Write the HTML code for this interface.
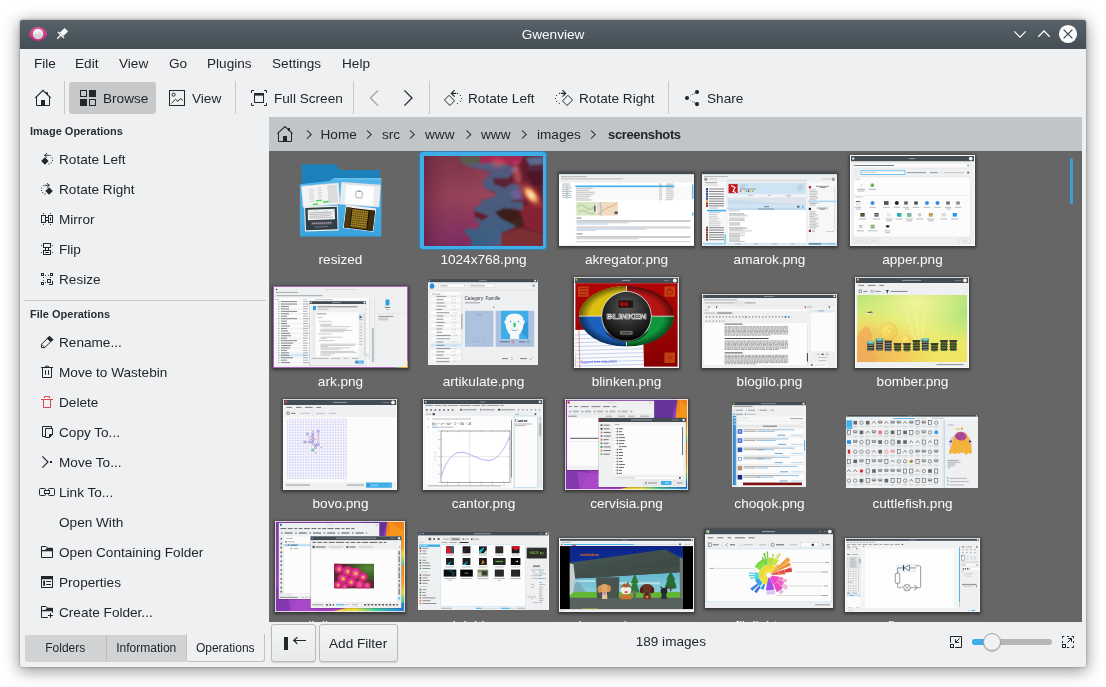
<!DOCTYPE html>
<html>
<head>
<meta charset="utf-8">
<title>Gwenview</title>
<style>
*{box-sizing:border-box;margin:0;padding:0}
html,body{width:1106px;height:687px;overflow:hidden;background:#fff}
body{position:relative;font-family:"Liberation Sans","DejaVu Sans",sans-serif;font-size:13.6px;color:#232629}
.abs{position:absolute}
#win{position:absolute;left:20px;top:20px;width:1066px;height:647px;background:#eff0f1;border-radius:2px;box-shadow:0 3px 16px 1px rgba(0,0,0,.42),0 0 3px rgba(0,0,0,.35)}
#title{position:absolute;left:20px;top:20px;width:1066px;height:28.5px;background:linear-gradient(#566169,#454e55);border-radius:2px 2px 0 0;color:#fcfcfc;text-align:center;line-height:30px}
.t{position:absolute;white-space:nowrap;line-height:16px;height:16px}
.menu .t{top:56px}
.tb .t{top:91px}
.sep{position:absolute;width:1px;background:#c6c8ca;top:81px;height:33px}
#browse{position:absolute;left:69px;top:82px;width:87px;height:32px;border-radius:3px;background:#c6c8ca}
.side .t{left:59px}
.side .hd{font-weight:bold;font-size:11px;left:30px;color:#2b2f33}
#crumb{position:absolute;left:269px;top:117px;width:813px;height:34px;background:#c2c5c8}
#crumb .t{top:10px}
#view{position:absolute;left:269px;top:151px;width:813px;height:470.5px;background:#666;overflow:hidden;color:#fcfcfc}
#view .lb{position:absolute;width:143px;text-align:center;line-height:16px;height:16px;white-space:nowrap}
.btn{position:absolute;top:623.5px;height:38px;border:1px solid #b8babc;border-radius:3px;background:linear-gradient(#f4f5f5,#e8e9ea);box-shadow:0 1px 1px rgba(0,0,0,.13)}
.tab{position:absolute;top:635px;height:27px;text-align:center;line-height:27px;font-size:12px}
.th{position:absolute;overflow:hidden;box-shadow:0 1px 3px 1px rgba(0,0,0,.5)}
.th.ns{box-shadow:none}
#ico{position:absolute;left:0;top:0;width:1106px;height:687px;pointer-events:none}
</style>
</head>
<body>
<div id="all" style="position:absolute;left:0;top:0;width:1106px;height:687px;will-change:transform">
<div id="win"></div>
<div id="title">Gwenview</div>

<div class="menu">
 <div class="t" style="left:34px">File</div>
 <div class="t" style="left:75px">Edit</div>
 <div class="t" style="left:119px">View</div>
 <div class="t" style="left:169px">Go</div>
 <div class="t" style="left:207px">Plugins</div>
 <div class="t" style="left:272px">Settings</div>
 <div class="t" style="left:342px">Help</div>
</div>

<div class="tb">
 <div class="sep" style="left:64px"></div>
 <div id="browse"></div>
 <div class="t" style="left:103px">Browse</div>
 <div class="t" style="left:192px">View</div>
 <div class="sep" style="left:235px"></div>
 <div class="t" style="left:274px">Full Screen</div>
 <div class="sep" style="left:353px"></div>
 <div class="sep" style="left:429px"></div>
 <div class="t" style="left:468px">Rotate Left</div>
 <div class="t" style="left:579px">Rotate Right</div>
 <div class="sep" style="left:668px"></div>
 <div class="t" style="left:707px">Share</div>
</div>

<div class="side">
 <div class="t hd" style="top:123px">Image Operations</div>
 <div class="t" style="top:152px">Rotate Left</div>
 <div class="t" style="top:182px">Rotate Right</div>
 <div class="t" style="top:212px">Mirror</div>
 <div class="t" style="top:242px">Flip</div>
 <div class="t" style="top:272px">Resize</div>
 <div class="abs" style="left:24px;top:300px;width:242px;height:1px;background:#c6c8ca"></div>
 <div class="t hd" style="top:306px">File Operations</div>
 <div class="t" style="top:335px">Rename...</div>
 <div class="t" style="top:365px">Move to Wastebin</div>
 <div class="t" style="top:395px">Delete</div>
 <div class="t" style="top:425px">Copy To...</div>
 <div class="t" style="top:455px">Move To...</div>
 <div class="t" style="top:485px">Link To...</div>
 <div class="t" style="top:515px">Open With</div>
 <div class="t" style="top:545px">Open Containing Folder</div>
 <div class="t" style="top:575px">Properties</div>
 <div class="t" style="top:605px">Create Folder...</div>
 <div class="tab" style="left:25px;width:80.5px;background:#d0d2d4;border-radius:0 0 0 3px">Folders</div>
 <div class="tab" style="left:105.5px;width:80.5px;background:#d0d2d4;border-left:1px solid #babcbe">Information</div>
 <div class="tab" style="left:185.5px;top:633.5px;height:28.5px;line-height:29px;width:79.5px;border:1px solid #c0c2c4;border-top:0;border-radius:0 0 3px 3px">Operations</div>
</div>

<div id="crumb">
 <div class="t" style="left:51.5px">Home</div>
 <div class="t" style="left:113px">src</div>
 <div class="t" style="left:156px">www</div>
 <div class="t" style="left:212px">www</div>
 <div class="t" style="left:268px">images</div>
 <div class="t" style="left:339px;font-weight:bold;font-size:13px;letter-spacing:-.35px">screenshots</div>
</div>

<div id="view">
 <svg class="th ns" style="left:28px;top:10px;width:88px;height:80px;background:none;" viewBox="297 161 88 80" preserveAspectRatio="none"><defs><linearGradient id="fb" x1="0" y1="0" x2="0" y2="1"><stop offset="0" stop-color="#1d83bd"/><stop offset="1" stop-color="#1577b0"/></linearGradient><linearGradient id="ff" x1="0" y1="0" x2="0" y2="1"><stop offset="0" stop-color="#52b4ea"/><stop offset="1" stop-color="#3ba3dc"/></linearGradient></defs><path d="M301.5,164.3 H335.4 L340,170 H379.8 V236.5 H301.5Z" fill="url(#fb)"/><path d="M299.9,184.2 L329,181 L333.5,178.3 H381.4 V236.5 H299.9Z" fill="url(#ff)"/><path d="M333.5,178.7 H381.4" stroke="#86cdf4" stroke-width=".8"/><g transform="rotate(-5 320.7 195)"><rect x="302.2" y="184.6" width="37" height="21" fill="#f4f4f4" stroke="#d8dadc" stroke-width=".6"/><rect x="328" y="186" width="9.5" height="18" fill="#dcdcdc"/><path d="M309,189 h5 M309,191.3 h5 M309,193.6 h5 M309,195.9 h5 M309,198.2 h5 M309,200.5 h5" stroke="#b5b8ba" stroke-width="0.6" fill="none"/><path d="M318,188 h4 M318,190.3 h4 M318,192.6 h4 M318,194.9 h4 M318,197.2 h4" stroke="#b5b8ba" stroke-width="0.6" fill="none"/><rect x="315.5" y="199.5" width="6" height="1.6" fill="#4ddc55"/><rect x="322.5" y="201.5" width="5.5" height="1.6" fill="#4ddc55"/><rect x="312" y="203" width="5.5" height="1.6" fill="#4ddc55"/></g><g transform="rotate(4 360.3 194.6)"><rect x="340.8" y="183.6" width="39" height="22" fill="#fdfdfd" stroke="#d0d3d6" stroke-width=".6"/><rect x="341.1" y="184" width="38.4" height="1.6" fill="#dfe1e3"/><rect x="341.1" y="186" width="4.5" height="19" fill="#e4ecf3"/><rect x="373.5" y="186" width="6" height="19" fill="#ebeced"/><rect x="355.8" y="191.5" width="6.4" height="6.4" rx="1" fill="none" stroke="#8d9194" stroke-width=".7"/><rect x="357.6" y="190.6" width="2.6" height="1.2" fill="#5c9fd6"/></g><g transform="rotate(-2 321.4 218.6)"><rect x="304.6" y="206.2" width="33.6" height="24.8" fill="#f2f2f2"/><rect x="305.6" y="207.4" width="31.6" height="22.4" fill="#2f3d44"/><rect x="308" y="209.2" width="27" height="10.6" fill="#f1f1f1"/><path d="M309.5,212.5 h22.4456 M309.5,214.2 h23.2759 M309.5,215.9 h20.8755 M309.5,217.6 h23.6523" stroke="#9a9a9a" stroke-width="0.6" fill="none"/><rect x="309" y="209.8" width="7" height="2" fill="#fff" stroke="#999" stroke-width=".3"/><rect x="318" y="209.8" width="7" height="2" fill="#fff" stroke="#999" stroke-width=".3"/><rect x="327" y="209.8" width="7" height="2" fill="#fff" stroke="#999" stroke-width=".3"/><rect x="311" y="221.5" width="21" height="3.4" fill="#5a5560"/><path d="M312,223.2 h19" stroke="#b9a8c8" stroke-width="1.2" stroke-dasharray="1.2 .8"/><rect x="314" y="226.3" width="14" height="1" fill="#778"/></g><g transform="rotate(7 359.5 218.3)"><rect x="344.4" y="206.6" width="30.4" height="23.4" fill="#f0f0f0"/><rect x="345.2" y="208.8" width="28.8" height="20.4" fill="#0d0a04"/><rect x="345.2" y="208.8" width="5.5" height="20.4" fill="#4a3a10"/><rect x="368.5" y="208.8" width="5.5" height="20.4" fill="#3a2c0c"/><rect x="351.5" y="209.6" width="16" height="18.8" fill="#6b5414"/><path d="M351.5,211 h16 M351.5,213.2 h16 M351.5,215.4 h16 M351.5,217.6 h16 M351.5,219.8 h16 M351.5,222 h16 M351.5,224.2 h16 M351.5,226.4 h16" stroke="#c9a030" stroke-width=".9" stroke-dasharray="1.4 .7"/></g></svg>
<svg class="abs" style="left:149px;top:-1px;width:130px;height:101px" viewBox="418 150 130 101"><rect x="419.5" y="151.5" width="127" height="98" rx="3.6" fill="#3daee9" stroke="#2d80ad" stroke-width=".9"/></svg>
<svg class="abs" style="left:154.5px;top:4.5px;width:119px;height:90px" viewBox="0 0 119 90"><defs><linearGradient id="w1" x1="0" y1="0" x2="0" y2="1"><stop offset="0" stop-color="#7a3346"/><stop offset=".45" stop-color="#954159"/><stop offset="1" stop-color="#7b2a63"/></linearGradient><linearGradient id="w2" x1="0" y1="0" x2="1" y2="0"><stop offset="0" stop-color="#5a1c38" stop-opacity=".55"/><stop offset=".3" stop-color="#a24a5c" stop-opacity=".0"/><stop offset=".5" stop-color="#a8505c" stop-opacity=".25"/><stop offset="1" stop-color="#a8505c" stop-opacity="0"/></linearGradient><linearGradient id="w4" x1="0" y1="0" x2="0" y2="1"><stop offset="0" stop-color="#505a7e"/><stop offset=".6" stop-color="#495c7e"/><stop offset="1" stop-color="#346184"/></linearGradient><radialGradient id="w3" cx="0" cy="0" r="1" gradientUnits="userSpaceOnUse" gradientTransform="translate(107 39) rotate(50) scale(19 10)"><stop offset="0" stop-color="#ffedc4"/><stop offset=".3" stop-color="#f4ac6c"/><stop offset=".65" stop-color="#b43c3c" stop-opacity=".6"/><stop offset="1" stop-color="#8a2838" stop-opacity="0"/></radialGradient><filter id="bl1" x="-10%" y="-10%" width="120%" height="120%"><feGaussianBlur stdDeviation=".8"/></filter><filter id="bl2" x="-30%" y="-30%" width="160%" height="160%"><feGaussianBlur stdDeviation="2.2"/></filter></defs><rect x="0" y="0" width="119" height="90" fill="url(#w1)" /><rect x="0" y="0" width="119" height="90" fill="url(#w2)" /><g filter="url(#bl1)"><path d="M34,0 L57,0 H119 V90 H47 L48,85 L45,80 L40,76 L41,73 L52,73 L57,69 L51,63 L50,52 L57,48 L58,44 L68,42 L73,38 L61,33 L58,25 L63,23 L66,15 L55,13 L44,10 L37,7Z" fill="#621c2c"/><path d="M34,0 L56,0 L57,8 L44,10 L37,7Z" fill="#5c5a4c"/><path d="M56,0 L100,0 L96,8 L84,9 L70,6 L57,8Z" fill="#a62852"/><path d="M100,0 H119 V22 L104,14 Z" fill="#56263c"/><path d="M102,2 L119,1 V8 L106,9Z" fill="#5a6a8c"/><path d="M96,50 L119,46 V78 L100,70 Z" fill="#842430"/><path d="M77,78 L96,72 L119,78 V90 H77Z" fill="#7c2f35"/><path d="M44,10 L55,13 L66,15 L82,13 L89,17 L82,24 L90,28 L98,30 L99,40 L86,46 L99,46 L98,54 L86,52 L76,58 L88,60 L99,62 L98,68 L89,72 L77,77 L77,90 L47,90 L48,85 L45,80 L40,76 L41,73 L52,73 L57,69 L51,63 L52,61 L58,65 L65,60 L58,57 L51,55 L50,52 L57,48 L58,44 L68,42 L73,38 L71,36 L61,33 L58,25 L63,23 L66,15Z" fill="url(#w4)"/><path d="M42,8 L57,8 L70,6 L84,9 L94,13 L89,17 L82,13 L66,15 L55,13 L44,10Z" fill="#525c80"/><path d="M69,22 L82,22 L88,28 L80,32 L70,28Z" fill="#5a2034"/><path d="M86,36 L98,32 L100,44 L90,44Z" fill="#7460a0" opacity=".7"/><path d="M71,56 L80,52 L94,55 L98,62 L92,70 L84,66 L76,62Z" fill="#3a1a18"/><path d="M88,64 L98,60 L100,68 L96,72 L90,70Z" fill="#42201c"/><path d="M60,74 L74,72 L77,80 L77,90 L66,90Z" fill="#416084"/><path d="M102,16 L119,14 V30 L110,30Z" fill="#4e1826"/></g><ellipse cx="93" cy="18" rx="3.5" ry="12" fill="#f07078" opacity=".6" filter="url(#bl2)" transform="rotate(-10 93 18)"/><ellipse cx="74" cy="7" rx="7" ry="4" fill="#e85a60" opacity=".55" filter="url(#bl2)"/><circle cx="107" cy="39" r="21" fill="url(#w3)"/></svg>
<svg class="th" style="left:290px;top:20.5px;width:135px;height:74.5px;background:#fcfcfc;" viewBox="559 171.5 135 74.5" preserveAspectRatio="none"><rect x="559" y="171.5" width="135" height="2.4" fill="#434c53" /><rect x="559" y="173.9" width="135" height="8.4" fill="#eff0f1" /><path d="M561,176.2 h26" stroke="#777" stroke-width="0.5" fill="none"/><path d="M561,178.4 h62" stroke="#999" stroke-width="0.6" fill="none"/><rect x="559.6" y="182.3" width="15" height="62" fill="#fff" /><path d="M562,183.5 h7.85647 M562,185.4 h8.53724 M562,187.3 h9.768 M562,189.2 h7.97026 M562,191.1 h9.85002 M562,193 h8.26542 M562,194.9 h9.72058 M562,196.8 h9.63715" stroke="#8a8d90" stroke-width="0.6" fill="none"/><path d="M567,186 v12" stroke="#3daee9" stroke-width=".8" stroke-dasharray=".8 1.1"/><rect x="575.4" y="182.3" width="117" height="19" fill="#fff" /><rect x="575.4" y="185" width="99" height="1.7" fill="#3daee9" /><path d="M576,187.8 h16.6038 M576,189.75 h13.3852 M576,191.7 h19.0096 M576,193.65 h18.2141 M576,195.6 h14.9805 M576,197.55 h12.4183 M576,199.5 h15.3832" stroke="#7e8184" stroke-width="0.55" fill="none"/><path d="M659,183.6 h3 M659,185.55 h3 M659,187.5 h3 M659,189.45 h3 M659,191.4 h3 M659,193.35 h3 M659,195.3 h3 M659,197.25 h3 M659,199.2 h3" stroke="#7e8184" stroke-width="0.55" fill="none"/><path d="M666,183.6 h7.36531 M666,185.55 h6.43799 M666,187.5 h7.92547 M666,189.45 h6.62645 M666,191.4 h7.53663 M666,193.35 h7.76919 M666,195.3 h7.81153 M666,197.25 h7.50643 M666,199.2 h6.6942" stroke="#7e8184" stroke-width="0.55" fill="none"/><path d="M575.4,186.8 h117 M575.4,188.75 h117 M575.4,190.7 h117 M575.4,192.65 h117 M575.4,194.6 h117 M575.4,196.55 h117 M575.4,198.5 h117" stroke="#e3e5e7" stroke-width="0.4" fill="none"/><rect x="575.4" y="201.3" width="117" height="43" fill="#fff" /><rect x="576.2" y="201.5" width="20.3" height="13.6" fill="#d9e6c4" /><rect x="596.8" y="201.5" width="21" height="13.6" fill="#f1dcc0" /><path d="M577,206 q5,-3 9,1 t9,-1 M578,211 q6,-2 10,1 t7,0" stroke="#b6cf9a" stroke-width="1.2" fill="none"/><path d="M598,214 q6,-6 10,-7 t9,-4" stroke="#e09a80" stroke-width=".8" fill="none"/><path d="M600,202 q2,6 1,13" stroke="#a9c6e4" stroke-width="1.6" fill="none"/><rect x="614.5" y="211" width="3.2" height="2.6" fill="#555" /><rect x="594" y="205" width="1.6" height="6" fill="#667" /><path d="M576.5,217.6 h5" stroke="#555" stroke-width="0.7" fill="none"/><path d="M576.5,220 h114 M576.5,221.1 h114" stroke="#9fa2a5" stroke-width="0.55" fill="none"/><path d="M576.5,222.3 h52" stroke="#9fa2a5" stroke-width="0.55" fill="none"/><path d="M576.5,223.6 h32" stroke="#7db8e4" stroke-width="0.55" fill="none"/><path d="M576.5,226.4 h114 M576.5,227.5 h114" stroke="#9fa2a5" stroke-width="0.55" fill="none"/><path d="M576.5,228.7 h70" stroke="#8fb4d8" stroke-width="0.55" fill="none"/><path d="M576.5,229.9 h20" stroke="#b0b3b6" stroke-width="0.55" fill="none"/><path d="M576.5,233.4 h6" stroke="#555" stroke-width="0.7" fill="none"/><path d="M576.5,236 h114 M576.5,237.1 h114" stroke="#9fa2a5" stroke-width="0.55" fill="none"/><path d="M576.5,238.3 h62" stroke="#9fa2a5" stroke-width="0.55" fill="none"/><path d="M576.5,241.2 h114" stroke="#98a9bd" stroke-width="0.55" fill="none"/><rect x="692.2" y="184" width="1.2" height="14.5" fill="#3daee9" /><rect x="692.2" y="212" width="1.2" height="3.2" fill="#3daee9" /><rect x="559" y="244.3" width="135" height="1.7" fill="#eff0f1" /></svg>
<svg class="th" style="left:433px;top:20.5px;width:135px;height:74.5px;background:#fcfcfc;" viewBox="702 171.5 135 74.5" preserveAspectRatio="none"><rect x="702" y="171.5" width="135" height="2.4" fill="#434c53" /><rect x="702" y="173.9" width="135" height="72" fill="#eff0f1" /><circle cx="705.8" cy="178.8" r="1.7" fill="#9a9da0"/><circle cx="833.2" cy="178.8" r="1.7" fill="#9a9da0"/><path d="M704,176 h24" stroke="#888" stroke-width="0.5" fill="none"/><path d="M709,178.4 h8" stroke="#aaa" stroke-width="0.5" fill="none"/><path d="M822,178.4 h8" stroke="#aaa" stroke-width="0.5" fill="none"/><rect x="727" y="179.4" width="80" height="0.9" fill="#cfd2d5" /><rect x="703" y="181" width="23" height="62.5" fill="#f8f8f8" /><path d="M705,182.2 h12" stroke="#666" stroke-width="0.6" fill="none"/><path d="M704.5,184.6 h14" stroke="#aaa" stroke-width="0.5" fill="none"/><rect x="706" y="187.5" width="2" height="2" fill="#2a3f8f" /><path d="M709,188.5 h15" stroke="#555" stroke-width="0.7" fill="none"/><rect x="706" y="190" width="2" height="2" fill="#27408b" /><path d="M709,191 h15" stroke="#555" stroke-width="0.7" fill="none"/><rect x="706" y="192.5" width="2" height="2" fill="#31518f" /><path d="M709,193.5 h15" stroke="#555" stroke-width="0.7" fill="none"/><rect x="706" y="195" width="2" height="2" fill="#2a3f8f" /><path d="M709,196 h15" stroke="#555" stroke-width="0.7" fill="none"/><rect x="706" y="197.3" width="2" height="2" fill="#3a4fa0" /><path d="M709,198.3 h15" stroke="#555" stroke-width="0.7" fill="none"/><rect x="706" y="199.7" width="2" height="2" fill="#e39b2d" /><path d="M709,200.7 h15" stroke="#555" stroke-width="0.7" fill="none"/><rect x="706" y="202.1" width="2" height="2" fill="#8f2a2a" /><path d="M709,203.1 h15" stroke="#555" stroke-width="0.7" fill="none"/><rect x="706" y="204.4" width="2" height="2" fill="#9b2d2d" /><path d="M709,205.4 h15" stroke="#555" stroke-width="0.7" fill="none"/><rect x="707" y="209.3" width="19" height="1.6" fill="#3daee9" /><path d="M710,207.6 h8" stroke="#888" stroke-width="0.5" fill="none"/><path d="M709,212.2 h10.9156 M709,214.05 h8.5104 M709,215.9 h8.16652 M709,217.75 h9.76561 M709,219.6 h8.71353 M709,221.45 h11.6233 M709,223.3 h11.6424 M709,225.15 h10.7642" stroke="#a2a5a8" stroke-width="0.5" fill="none"/><rect x="706" y="226.2" width="2" height="2" fill="#8f3a3a" /><path d="M709,227.2 h15" stroke="#555" stroke-width="0.7" fill="none"/><rect x="706" y="228.6" width="2" height="2" fill="#7a3030" /><path d="M709,229.6 h15" stroke="#555" stroke-width="0.7" fill="none"/><rect x="706" y="231" width="2" height="2" fill="#8a4a3a" /><path d="M709,232 h15" stroke="#555" stroke-width="0.7" fill="none"/><rect x="706" y="233.4" width="2" height="2" fill="#6a3a3a" /><path d="M709,234.4 h15" stroke="#555" stroke-width="0.7" fill="none"/><rect x="706" y="235.8" width="2" height="2" fill="#8a3030" /><path d="M709,236.8 h15" stroke="#555" stroke-width="0.7" fill="none"/><rect x="706" y="238.2" width="2" height="2" fill="#553a3a" /><path d="M709,239.2 h15" stroke="#555" stroke-width="0.7" fill="none"/><rect x="724.6" y="234" width="1" height="8.5" fill="#3daee9" /><rect x="703" y="242.3" width="23" height="1.9" fill="#9fd3f2" /><rect x="727" y="181" width="80" height="1.2" fill="#e6e8ea" /><rect x="727.6" y="182.4" width="78.4" height="11.4" fill="#cfe4f2" /><rect x="728.6" y="183.6" width="9" height="9" fill="#c4161c" /><path d="M731,185 l4,2 l-2,4 l3,1" stroke="#fff" stroke-width="1.1" fill="none"/><path d="M740,184.8 h8" stroke="#8aa" stroke-width="0.5" fill="none"/><path d="M740,186.7 h5" stroke="#99b" stroke-width="0.5" fill="none"/><path d="M740,188.6 h16" stroke="#667" stroke-width="0.6" fill="none"/><rect x="740" y="190" width="1.3" height="1.3" fill="#d33" /><rect x="742" y="190" width="1.3" height="1.3" fill="#eee" /><rect x="744" y="190" width="1.3" height="1.3" fill="#fc3" /><rect x="746" y="190" width="1.3" height="1.3" fill="#39d" /><rect x="748" y="190" width="1.3" height="1.3" fill="#333" /><rect x="750" y="190" width="1.3" height="1.3" fill="#fc3" /><rect x="752" y="190" width="1.3" height="1.3" fill="#6b4" /><path d="M797,186 l4,-3 l3,2 l-2,5 l-5,1z" fill="#bcd6e8"/><rect x="727.6" y="193.8" width="78.4" height="3.2" fill="#eef4f9" /><path d="M748,194.8 h5" stroke="#888" stroke-width="0.5" fill="none"/><path d="M768,194.8 h3" stroke="#888" stroke-width="0.5" fill="none"/><path d="M786,194.8 h5" stroke="#888" stroke-width="0.5" fill="none"/><path d="M787,196.4 h4" stroke="#9ab" stroke-width="0.5" fill="none"/><rect x="727.6" y="197" width="78.4" height="7.8" fill="#dde3e8" /><path d="M728,204.8 L728,198 L731,200 L734,198.6 L737,200.2 L741,198.8 L745,200.6 L750,199.4 L756,201 L760,200 L764,202.4 L770,201.8 L776,203 L784,202.6 L792,203.6 L806,204 L806,204.8Z" fill="#c9def0"/><rect x="727.6" y="204.9" width="78.4" height="2.6" fill="#cfe4f2" /><rect x="727.6" y="207.6" width="78.4" height="1.8" fill="#bcd9ee" /><path d="M764,206.2 h5" stroke="#456" stroke-width="0.7" fill="none"/><path d="M758,208.5 h16" stroke="#567" stroke-width="0.6" fill="none"/><rect x="797" y="205.3" width="2.5" height="1.8" fill="#567" /><rect x="802" y="205.3" width="1.5" height="1.8" fill="#3daee9" /><rect x="727.6" y="209.5" width="78.4" height="32.8" fill="#fff" /><path d="M729,210.3 h11" stroke="#8f9295" stroke-width="0.5" fill="none"/><path d="M729,213 h15" stroke="#8f9295" stroke-width="0.5" fill="none"/><path d="M729,214.15 h16" stroke="#8f9295" stroke-width="0.5" fill="none"/><path d="M729,215.3 h19" stroke="#8f9295" stroke-width="0.5" fill="none"/><path d="M729,217.6 h16" stroke="#8f9295" stroke-width="0.5" fill="none"/><path d="M729,218.75 h15" stroke="#8f9295" stroke-width="0.5" fill="none"/><path d="M729,219.9 h16" stroke="#8f9295" stroke-width="0.5" fill="none"/><path d="M729,222.3 h11" stroke="#8f9295" stroke-width="0.5" fill="none"/><path d="M729,223.45 h11" stroke="#8f9295" stroke-width="0.5" fill="none"/><path d="M729,224.6 h11" stroke="#8f9295" stroke-width="0.5" fill="none"/><path d="M729,227 h17" stroke="#8f9295" stroke-width="0.5" fill="none"/><path d="M729,228.15 h19" stroke="#8f9295" stroke-width="0.5" fill="none"/><path d="M729,229.3 h14" stroke="#8f9295" stroke-width="0.5" fill="none"/><path d="M729,230.45 h23" stroke="#8f9295" stroke-width="0.5" fill="none"/><path d="M729,232.6 h16" stroke="#8f9295" stroke-width="0.5" fill="none"/><path d="M729,233.75 h11" stroke="#8f9295" stroke-width="0.5" fill="none"/><path d="M729,234.9 h16" stroke="#8f9295" stroke-width="0.5" fill="none"/><path d="M729,236.05 h11" stroke="#8f9295" stroke-width="0.5" fill="none"/><path d="M729,237.5 h11" stroke="#8f9295" stroke-width="0.5" fill="none"/><path d="M729,238.65 h11" stroke="#8f9295" stroke-width="0.5" fill="none"/><path d="M729,239.8 h11" stroke="#8f9295" stroke-width="0.5" fill="none"/><path d="M729,240.95 h16" stroke="#8f9295" stroke-width="0.5" fill="none"/><rect x="727.6" y="242.4" width="78.4" height="1.9" fill="#d6e8f4" /><path d="M735,243.4 h6" stroke="#789" stroke-width="0.5" fill="none"/><path d="M754,243.4 h4" stroke="#789" stroke-width="0.5" fill="none"/><path d="M772,243.4 h5" stroke="#789" stroke-width="0.5" fill="none"/><path d="M791,243.4 h3" stroke="#789" stroke-width="0.5" fill="none"/><rect x="808" y="181" width="28.4" height="61.3" fill="#f6f7f7" /><rect x="810" y="183.2" width="17" height="1.6" fill="#fff" /><rect x="808.8" y="185.6" width="2.2" height="2.2" fill="#b02020" /><rect x="808.8" y="207.3" width="2.2" height="2.2" fill="#222" /><rect x="808.8" y="229.2" width="2.2" height="2.2" fill="#a02020" /><path d="M816,185.8 h13" stroke="#555" stroke-width="0.6" fill="none"/><path d="M820,187 h6" stroke="#555" stroke-width="0.6" fill="none"/><path d="M809.5,189.4 h6.598 M809.5,191.05 h7.86204 M809.5,192.7 h8.42926 M809.5,194.35 h7.07219 M809.5,196 h7.73408 M809.5,197.65 h8.50117 M809.5,199.3 h6.0281 M809.5,200.95 h6.50503 M809.5,202.6 h8.77952" stroke="#8c8f92" stroke-width="0.5" fill="none"/><rect x="808" y="200.1" width="28.4" height="1.5" fill="#a9d8f5" /><path d="M809.5,203 h6.16184 M809.5,204.6 h6.31937" stroke="#8c8f92" stroke-width="0.5" fill="none"/><path d="M817,207.6 h11" stroke="#555" stroke-width="0.6" fill="none"/><path d="M820,208.8 h5" stroke="#555" stroke-width="0.6" fill="none"/><path d="M809.5,211.2 h5.62431 M809.5,212.82 h6.35277 M809.5,214.44 h8.56031 M809.5,216.06 h5.09913 M809.5,217.68 h9.40967 M809.5,219.3 h7.90939 M809.5,220.92 h6.2143 M809.5,222.54 h9.24008 M809.5,224.16 h7.55518 M809.5,225.78 h9.80396 M809.5,227.4 h6.65892" stroke="#8c8f92" stroke-width="0.5" fill="none"/><path d="M812,229.6 h3 M812,231.1 h3" stroke="#8c8f92" stroke-width="0.5" fill="none"/><path d="M826,231 h8" stroke="#aaa" stroke-width="0.5" fill="none"/><path d="M834.6,186 v44" stroke="#b9bcbe" stroke-width=".8" stroke-dasharray=".9 .75"/><rect x="808" y="242.4" width="28.4" height="1.9" fill="#9fd3f2" /><path d="M809,243.4 h12" stroke="#345" stroke-width="0.8" fill="none"/><path d="M827,243.4 h8" stroke="#7ab" stroke-width="0.5" fill="none"/></svg>
<svg class="th" style="left:581px;top:4px;width:125px;height:91px;background:#fcfcfc;" viewBox="850 155 125 91" preserveAspectRatio="none"><rect x="850" y="155" width="125" height="91" fill="#eff0f1" /><rect x="850" y="155" width="125" height="1" fill="#fcfcfc" /><rect x="850" y="155" width="1" height="91" fill="#fcfcfc" /><rect x="974" y="155" width="1" height="91" fill="#fcfcfc" /><rect x="851" y="156" width="123" height="5.2" fill="#434c53" /><circle cx="970.776" cy="158.6" r="1.872" fill="#f4f4f4"/><circle cx="853.2" cy="158.6" r="1.3" fill="#c8ccd0"/><path d="M909,158.6 h6" stroke="#b8bec2" stroke-width="0.7" fill="none"/><rect x="853" y="163" width="117" height="5" fill="#fcfcfc" stroke="#d6d8da" stroke-width=".4"/><path d="M854,165.5 h40" stroke="#6a6e72" stroke-width="0.9" fill="none"/><rect x="967.3" y="164.6" width="1.6" height="1.8" fill="#9a9da0" /><rect x="861" y="170.8" width="44" height="3.6" fill="#fcfcfc" stroke="#3daee9" stroke-width=".7"/><path d="M862.5,172.6 h14" stroke="#b9bcbf" stroke-width="0.6" fill="none"/><path d="M907,172.6 h19" stroke="#7c8084" stroke-width="0.8" fill="none"/><path d="M930,172.6 h8" stroke="#7c8084" stroke-width="0.8" fill="none"/><path d="M944,172.6 h20" stroke="#b6b9bc" stroke-width="0.8" fill="none"/><rect x="941.2" y="170.2" width="0.5" height="5" fill="#d0d2d4" /><rect x="967.2" y="171.8" width="2" height="1.6" fill="#666" /><path d="M856.6,171 l-1.4,1.6 l1.4,1.6" stroke="#c0c2c4" stroke-width=".5" fill="none"/><rect x="853.3" y="177" width="117.5" height="60" fill="#fcfcfc" stroke="#d9dbdd" stroke-width=".4"/><path d="M855,179 h5" stroke="#aaa" stroke-width="0.6" fill="none"/><rect x="854" y="195.3" width="116" height="0.4" fill="#dcdee0" /><path d="M855,197 h8" stroke="#aaa" stroke-width="0.6" fill="none"/><path d="M860,186.6 l2.4,-2.6" stroke="#999" stroke-width=".5"/><circle cx="872.3" cy="185.2" r="1.9" fill="#79c257"/><circle cx="872.3" cy="185.2" r=".7" fill="#3a8a2a"/><path d="M857,189.3 h8" stroke="#888" stroke-width="0.6" fill="none"/><path d="M857.6,191 h7" stroke="#888" stroke-width="0.6" fill="none"/><path d="M868.6,189.3 h7.4" stroke="#888" stroke-width="0.6" fill="none"/><rect x="856" y="201" width="4" height="4" fill="#f2f2f2" stroke="#aaa" stroke-width=".3"/><rect x="856" y="201" width="4" height="0.8" fill="#456" /><path d="M854.8,207.3 h6.4" stroke="#8a8d90" stroke-width="0.6" fill="none"/><circle cx="872.5" cy="203" r="2" fill="#3b8eea"/><path d="M869.3,207.3 h6.4" stroke="#8a8d90" stroke-width="0.6" fill="none"/><rect x="884.1" y="201.2" width="4.4" height="3.6" fill="#3b3b3b" /><rect x="884.7" y="201.8" width="3.2" height="2.2" fill="#6a5a3a" /><path d="M883.1,207.3 h6.4" stroke="#8a8d90" stroke-width="0.6" fill="none"/><circle cx="896.8" cy="203" r="2" fill="#222"/><path d="M893.6,207.3 h6.4" stroke="#8a8d90" stroke-width="0.6" fill="none"/><rect x="904.2" y="201.4" width="3.6" height="3.2" fill="#444" opacity=".85"/><path d="M902.8,207.3 h6.4" stroke="#8a8d90" stroke-width="0.6" fill="none"/><rect x="914.2" y="201.4" width="3.6" height="3.2" fill="#333" opacity=".85"/><path d="M912.8,207.3 h6.4" stroke="#8a8d90" stroke-width="0.6" fill="none"/><circle cx="927" cy="203" r="2" fill="#3b8eea"/><path d="M923.8,207.3 h6.4" stroke="#8a8d90" stroke-width="0.6" fill="none"/><circle cx="937.5" cy="203" r="2" fill="#2f8aec"/><path d="M934.3,207.3 h6.4" stroke="#8a8d90" stroke-width="0.6" fill="none"/><rect x="946.2" y="201.4" width="3.6" height="3.2" fill="#555" opacity=".85"/><path d="M944.8,207.3 h6.4" stroke="#8a8d90" stroke-width="0.6" fill="none"/><rect x="956.2" y="201.4" width="3.6" height="3.2" fill="#777" opacity=".85"/><path d="M954.8,207.3 h6.4" stroke="#8a8d90" stroke-width="0.6" fill="none"/><path d="M855.7,209 h4.6" stroke="#8a8d90" stroke-width="0.6" fill="none"/><path d="M904.7,209 h4.6" stroke="#8a8d90" stroke-width="0.6" fill="none"/><path d="M946.2,209 h4.6" stroke="#8a8d90" stroke-width="0.6" fill="none"/><rect x="860.4" y="213" width="4.2" height="3.6" fill="#3a3a3a" /><rect x="861" y="213.6" width="3" height="2.2" fill="#6a5230" /><path d="M858.9,219 h7.2" stroke="#8a8d90" stroke-width="0.6" fill="none"/><rect x="874.4" y="213" width="4.2" height="3.6" fill="#2a5a9a" /><rect x="874.4" y="214.4" width="4.2" height="0.9" fill="#f0c030" /><path d="M872.9,219 h7.2" stroke="#8a8d90" stroke-width="0.6" fill="none"/><rect x="886.9" y="213" width="4.2" height="3.6" fill="#e8e8e8" /><path d="M885.4,219 h7.2" stroke="#8a8d90" stroke-width="0.6" fill="none"/><rect x="897.1" y="213" width="4.2" height="3.6" fill="#1a9ad6" /><rect x="899.2" y="213" width="2.1" height="3.6" fill="#2ecc71" /><path d="M895.6,219 h7.2" stroke="#8a8d90" stroke-width="0.6" fill="none"/><rect x="907.2" y="213" width="4.2" height="3.6" fill="#6ab4d0" /><rect x="907.2" y="214.8" width="4.2" height="1.8" fill="#7ac070" /><path d="M905.7,219 h7.2" stroke="#8a8d90" stroke-width="0.6" fill="none"/><circle cx="919.7" cy="214.8" r="1.8" fill="#c8ccd0"/><path d="M916.1,219 h7.2" stroke="#8a8d90" stroke-width="0.6" fill="none"/><rect x="928.7" y="213" width="4.2" height="3.6" fill="#c9a060" /><path d="M927.2,219 h7.2" stroke="#8a8d90" stroke-width="0.6" fill="none"/><rect x="941.7" y="213" width="4.2" height="3.6" fill="#e6dcc6" /><path d="M940.2,219 h7.2" stroke="#8a8d90" stroke-width="0.6" fill="none"/><rect x="952.7" y="213" width="4.2" height="3.6" fill="#1d99f3" /><path d="M951.2,219 h7.2" stroke="#8a8d90" stroke-width="0.6" fill="none"/><path d="M886.2,220.8 h5.6" stroke="#8a8d90" stroke-width="0.6" fill="none"/><path d="M906.5,220.8 h5.6" stroke="#8a8d90" stroke-width="0.6" fill="none"/><path d="M928,220.8 h5.6" stroke="#8a8d90" stroke-width="0.6" fill="none"/><path d="M859,225.6 h3.4 M859,227.2 h3.4" stroke="#666" stroke-width=".5"/><rect x="870.6" y="224.6" width="4.2" height="4" fill="#8fbf7a" /><rect x="871.6" y="225.6" width="2.2" height="2" fill="#aaa" /><path d="M885.6,226 l2,-1 l2.2,1 l-1.2,1.6 h-2z" fill="#222"/><path d="M856.8,230.8 h7" stroke="#8a8d90" stroke-width="0.6" fill="none"/><path d="M868,230.8 h9.6" stroke="#8a8d90" stroke-width="0.6" fill="none"/><path d="M884.6,230.8 h6" stroke="#8a8d90" stroke-width="0.6" fill="none"/><path d="M885.4,232.6 h4.4" stroke="#8a8d90" stroke-width="0.6" fill="none"/><rect x="853.3" y="239" width="12.6" height="4" fill="#f2f3f4" stroke="#c9cbcd" stroke-width=".4"/><rect x="867.3" y="239" width="12.6" height="4" fill="#f2f3f4" stroke="#c9cbcd" stroke-width=".4"/><rect x="959" y="239" width="11.6" height="4" fill="#f2f3f4" stroke="#c9cbcd" stroke-width=".4"/><path d="M855.5,241 h8" stroke="#c0c3c6" stroke-width="0.6" fill="none"/><path d="M869.5,241 h8" stroke="#c0c3c6" stroke-width="0.6" fill="none"/><path d="M961.4,241 h7" stroke="#c0c3c6" stroke-width="0.6" fill="none"/><rect x="850" y="245" width="125" height="1" fill="#fcfcfc" /></svg>
<svg class="th" style="left:4px;top:135px;width:135px;height:82px;background:#fcfcfc;" viewBox="273 286 135 82" preserveAspectRatio="none"><rect x="273" y="286" width="135" height="82" fill="#a566b8" /><path d="M401,367.5 H407.5 V361" stroke="#f0a030" stroke-width="1" fill="none"/><path d="M397,367.5 h4" stroke="#6fc070" stroke-width="1"/><rect x="274" y="287" width="133" height="80" fill="#eff0f1" /><circle cx="276.6" cy="289.5" r=".7" fill="#333"/><path d="M325,289.5 h30" stroke="#c5c8cb" stroke-width="0.6" fill="none"/><path d="M276,292.4 h22" stroke="#777" stroke-width="0.6" fill="none"/><path d="M276.5,295.7 h46" stroke="#8d9093" stroke-width="0.8" fill="none"/><rect x="274" y="298" width="95" height="67" fill="#fcfcfc" /><path d="M275,299.6 h4" stroke="#999" stroke-width="0.5" fill="none"/><path d="M303,299.6 h4" stroke="#999" stroke-width="0.5" fill="none"/><path d="M315,299.6 h18" stroke="#999" stroke-width="0.5" fill="none"/><path d="M281,301.6 h16" stroke="#5e6266" stroke-width="0.75" fill="none"/><path d="M278,301.6 h1.6" stroke="#aaa" stroke-width="0.9" fill="none"/><path d="M303,301.6 h5" stroke="#83878a" stroke-width="0.6" fill="none"/><rect x="274" y="302.84" width="95" height="2.44" fill="#f3f4f5" /><path d="M281,304.04 h16" stroke="#5e6266" stroke-width="0.75" fill="none"/><path d="M278,304.04 h1.6" stroke="#aaa" stroke-width="0.9" fill="none"/><path d="M303,304.04 h6" stroke="#83878a" stroke-width="0.6" fill="none"/><path d="M281,306.48 h8" stroke="#5e6266" stroke-width="0.75" fill="none"/><path d="M278,306.48 h1.6" stroke="#aaa" stroke-width="0.9" fill="none"/><path d="M303,306.48 h5" stroke="#83878a" stroke-width="0.6" fill="none"/><rect x="274" y="307.72" width="95" height="2.44" fill="#f3f4f5" /><path d="M281,308.92 h8" stroke="#5e6266" stroke-width="0.75" fill="none"/><path d="M278,308.92 h1.6" stroke="#aaa" stroke-width="0.9" fill="none"/><path d="M303,308.92 h5" stroke="#83878a" stroke-width="0.6" fill="none"/><path d="M281,311.36 h16" stroke="#5e6266" stroke-width="0.75" fill="none"/><path d="M278,311.36 h1.6" stroke="#aaa" stroke-width="0.9" fill="none"/><path d="M303,311.36 h4" stroke="#83878a" stroke-width="0.6" fill="none"/><rect x="274" y="312.6" width="95" height="2.44" fill="#f3f4f5" /><path d="M281,313.8 h8" stroke="#5e6266" stroke-width="0.75" fill="none"/><path d="M278,313.8 h1.6" stroke="#aaa" stroke-width="0.9" fill="none"/><path d="M303,313.8 h5" stroke="#83878a" stroke-width="0.6" fill="none"/><path d="M281,316.24 h6" stroke="#5e6266" stroke-width="0.75" fill="none"/><path d="M278,316.24 h1.6" stroke="#aaa" stroke-width="0.9" fill="none"/><path d="M303,316.24 h5" stroke="#83878a" stroke-width="0.6" fill="none"/><rect x="274" y="317.48" width="95" height="2.44" fill="#f3f4f5" /><path d="M281,318.68 h16" stroke="#5e6266" stroke-width="0.75" fill="none"/><path d="M278,318.68 h1.6" stroke="#aaa" stroke-width="0.9" fill="none"/><path d="M303,318.68 h6" stroke="#83878a" stroke-width="0.6" fill="none"/><path d="M281,321.12 h6" stroke="#5e6266" stroke-width="0.75" fill="none"/><path d="M278,321.12 h1.6" stroke="#aaa" stroke-width="0.9" fill="none"/><path d="M303,321.12 h5" stroke="#83878a" stroke-width="0.6" fill="none"/><rect x="274" y="322.36" width="95" height="2.44" fill="#f3f4f5" /><path d="M281,323.56 h6" stroke="#5e6266" stroke-width="0.75" fill="none"/><path d="M278,323.56 h1.6" stroke="#aaa" stroke-width="0.9" fill="none"/><path d="M303,323.56 h5" stroke="#83878a" stroke-width="0.6" fill="none"/><path d="M281,326 h9" stroke="#5e6266" stroke-width="0.75" fill="none"/><path d="M278,326 h1.6" stroke="#aaa" stroke-width="0.9" fill="none"/><path d="M303,326 h6" stroke="#83878a" stroke-width="0.6" fill="none"/><rect x="274" y="327.24" width="95" height="2.44" fill="#f3f4f5" /><path d="M281,328.44 h6" stroke="#5e6266" stroke-width="0.75" fill="none"/><path d="M278,328.44 h1.6" stroke="#aaa" stroke-width="0.9" fill="none"/><path d="M303,328.44 h5" stroke="#83878a" stroke-width="0.6" fill="none"/><path d="M281,330.88 h7" stroke="#5e6266" stroke-width="0.75" fill="none"/><path d="M278,330.88 h1.6" stroke="#aaa" stroke-width="0.9" fill="none"/><path d="M303,330.88 h5" stroke="#83878a" stroke-width="0.6" fill="none"/><rect x="274" y="332.12" width="95" height="2.44" fill="#f3f4f5" /><path d="M281,333.32 h9" stroke="#5e6266" stroke-width="0.75" fill="none"/><path d="M278,333.32 h1.6" stroke="#aaa" stroke-width="0.9" fill="none"/><path d="M303,333.32 h6" stroke="#83878a" stroke-width="0.6" fill="none"/><path d="M281,335.76 h10" stroke="#5e6266" stroke-width="0.75" fill="none"/><path d="M278,335.76 h1.6" stroke="#aaa" stroke-width="0.9" fill="none"/><path d="M303,335.76 h5" stroke="#83878a" stroke-width="0.6" fill="none"/><rect x="274" y="337" width="95" height="2.44" fill="#f3f4f5" /><path d="M281,338.2 h6" stroke="#5e6266" stroke-width="0.75" fill="none"/><path d="M278,338.2 h1.6" stroke="#aaa" stroke-width="0.9" fill="none"/><path d="M303,338.2 h5" stroke="#83878a" stroke-width="0.6" fill="none"/><path d="M281,340.64 h16" stroke="#5e6266" stroke-width="0.75" fill="none"/><path d="M278,340.64 h1.6" stroke="#aaa" stroke-width="0.9" fill="none"/><path d="M303,340.64 h4" stroke="#83878a" stroke-width="0.6" fill="none"/><rect x="274" y="341.88" width="95" height="2.44" fill="#f3f4f5" /><path d="M281,343.08 h12" stroke="#5e6266" stroke-width="0.75" fill="none"/><path d="M278,343.08 h1.6" stroke="#aaa" stroke-width="0.9" fill="none"/><path d="M303,343.08 h5" stroke="#83878a" stroke-width="0.6" fill="none"/><path d="M281,345.52 h10" stroke="#5e6266" stroke-width="0.75" fill="none"/><path d="M278,345.52 h1.6" stroke="#aaa" stroke-width="0.9" fill="none"/><path d="M303,345.52 h4" stroke="#83878a" stroke-width="0.6" fill="none"/><rect x="274" y="346.76" width="95" height="2.44" fill="#f3f4f5" /><path d="M281,347.96 h9" stroke="#5e6266" stroke-width="0.75" fill="none"/><path d="M278,347.96 h1.6" stroke="#aaa" stroke-width="0.9" fill="none"/><path d="M303,347.96 h4" stroke="#83878a" stroke-width="0.6" fill="none"/><path d="M281,350.4 h6" stroke="#5e6266" stroke-width="0.75" fill="none"/><path d="M278,350.4 h1.6" stroke="#aaa" stroke-width="0.9" fill="none"/><path d="M303,350.4 h5" stroke="#83878a" stroke-width="0.6" fill="none"/><rect x="274" y="351.64" width="95" height="2.44" fill="#f3f4f5" /><path d="M281,352.84 h8" stroke="#5e6266" stroke-width="0.75" fill="none"/><path d="M278,352.84 h1.6" stroke="#aaa" stroke-width="0.9" fill="none"/><path d="M303,352.84 h5" stroke="#83878a" stroke-width="0.6" fill="none"/><rect x="279" y="354.08" width="90" height="2.44" fill="#cfe6f7" /><path d="M281,355.28 h8" stroke="#5e6266" stroke-width="0.75" fill="none"/><path d="M278,355.28 h1.6" stroke="#aaa" stroke-width="0.9" fill="none"/><path d="M303,355.28 h4" stroke="#83878a" stroke-width="0.6" fill="none"/><rect x="274" y="356.52" width="95" height="2.44" fill="#f3f4f5" /><path d="M281,357.72 h12" stroke="#5e6266" stroke-width="0.75" fill="none"/><path d="M278,357.72 h1.6" stroke="#aaa" stroke-width="0.9" fill="none"/><path d="M303,357.72 h5" stroke="#83878a" stroke-width="0.6" fill="none"/><path d="M281,360.16 h6" stroke="#5e6266" stroke-width="0.75" fill="none"/><path d="M278,360.16 h1.6" stroke="#aaa" stroke-width="0.9" fill="none"/><path d="M303,360.16 h5" stroke="#83878a" stroke-width="0.6" fill="none"/><rect x="274" y="361.4" width="95" height="2.44" fill="#f3f4f5" /><path d="M281,362.6 h9" stroke="#5e6266" stroke-width="0.75" fill="none"/><path d="M278,362.6 h1.6" stroke="#aaa" stroke-width="0.9" fill="none"/><path d="M303,362.6 h6" stroke="#83878a" stroke-width="0.6" fill="none"/><rect x="369.3" y="298" width="0.5" height="62" fill="#cfd1d3" /><rect x="374.6" y="298" width="0.5" height="62" fill="#d6d8da" /><rect x="372.4" y="328" width="1" height="34" fill="#8d9194" /><path d="M385.6,299.6 h3.8 v4.6 l-1.2,1.2 h-2.6z" fill="#2b9de6"/><path d="M384.8,307.4 h5.4" stroke="#555" stroke-width="0.8" fill="none"/><path d="M385.8,309.6 h3.6" stroke="#999" stroke-width="0.6" fill="none"/><rect x="376" y="313.5" width="30" height="0.4" fill="#d6d8da" /><path d="M378.4,316.4 h15" stroke="#6a6e72" stroke-width="0.7" fill="none"/><path d="M378.4,318.2 h10 M378.4,319.8 h10" stroke="#9a9da0" stroke-width="0.6" fill="none"/><rect x="309.2" y="300.8" width="57" height="65.2" fill="#000" opacity=".18"/><rect x="309.8" y="301.2" width="56" height="64.4" fill="#eff0f1" /><rect x="309.8" y="301.2" width="56" height="2.8" fill="#434c53" /><circle cx="364.3" cy="302.6" r="1" fill="#f0f0f0"/><path d="M332,302.6 h9" stroke="#b8bec2" stroke-width="0.6" fill="none"/><rect x="310.6" y="301.8" width="1.2" height="1.4" fill="#dfe3e6" /><path d="M313,306 h3 v3.2 l-1,1 h-2z" fill="#2b9de6"/><path d="M317.6,306.8 h40" stroke="#666" stroke-width="0.8" fill="none"/><path d="M317.6,309.2 h11" stroke="#999" stroke-width="0.6" fill="none"/><rect x="316" y="312.4" width="42.6" height="44" fill="#fcfcfc" /><rect x="313.4" y="312.4" width="0.5" height="44" fill="#d2d4d6" /><path d="M316.6,313.8 h10" stroke="#777" stroke-width="0.7" fill="none"/><path d="M317.6,317.6 h5" stroke="#a2a5a8" stroke-width="0.55" fill="none"/><path d="M318.6,321.4 h13" stroke="#a2a5a8" stroke-width="0.55" fill="none"/><path d="M320.4,324.2 h12" stroke="#a2a5a8" stroke-width="0.55" fill="none"/><path d="M320.4,325.45 h10" stroke="#a2a5a8" stroke-width="0.55" fill="none"/><path d="M320.4,326.7 h30" stroke="#a2a5a8" stroke-width="0.55" fill="none"/><path d="M320.4,329.2 h26" stroke="#a2a5a8" stroke-width="0.55" fill="none"/><path d="M320.4,330.45 h32" stroke="#a2a5a8" stroke-width="0.55" fill="none"/><path d="M320.4,331.7 h24" stroke="#a2a5a8" stroke-width="0.55" fill="none"/><path d="M318.4,334 h13" stroke="#a2a5a8" stroke-width="0.55" fill="none"/><path d="M320.4,337.2 h22" stroke="#a2a5a8" stroke-width="0.55" fill="none"/><path d="M320.4,338.45 h6" stroke="#a2a5a8" stroke-width="0.55" fill="none"/><path d="M318.4,340.6 h16" stroke="#a2a5a8" stroke-width="0.55" fill="none"/><path d="M320.4,344.2 h36" stroke="#a2a5a8" stroke-width="0.55" fill="none"/><path d="M320.4,345.45 h34" stroke="#a2a5a8" stroke-width="0.55" fill="none"/><path d="M320.4,346.7 h8" stroke="#a2a5a8" stroke-width="0.55" fill="none"/><path d="M320.4,347.95 h30" stroke="#a2a5a8" stroke-width="0.55" fill="none"/><path d="M320.4,349.2 h20" stroke="#a2a5a8" stroke-width="0.55" fill="none"/><path d="M320.4,351.4 h34" stroke="#a2a5a8" stroke-width="0.55" fill="none"/><path d="M320.4,352.65 h36" stroke="#a2a5a8" stroke-width="0.55" fill="none"/><path d="M320.4,353.9 h14" stroke="#a2a5a8" stroke-width="0.55" fill="none"/><path d="M320.4,355.15 h10" stroke="#a2a5a8" stroke-width="0.55" fill="none"/><rect x="358.8" y="314" width="4.4" height="6.6" fill="#cfe3f4" /><path d="M359.6,315.4 l2.6,1.5 l-2.6,1.5z" fill="#456"/><path d="M359.4,319.6 h3" stroke="#789" stroke-width="0.5" fill="none"/><path d="M359.4,324 h2.31004 M359.4,326.9 h3.14977 M359.4,329.8 h2.83956 M359.4,332.7 h2.51946 M359.4,335.6 h2.797 M359.4,338.5 h2.65641 M359.4,341.4 h3.00945 M359.4,344.3 h2.55209" stroke="#9a9da0" stroke-width="0.6" fill="none"/><rect x="364.2" y="313" width="0.6" height="43" fill="#c4c6c8" /><path d="M311.6,358.4 h17" stroke="#8d9093" stroke-width="0.6" fill="none"/><path d="M331,358.4 h9" stroke="#8d9093" stroke-width="0.6" fill="none"/><path d="M343.6,358.4 h4" stroke="#8d9093" stroke-width="0.6" fill="none"/><path d="M352,358.4 h6" stroke="#8d9093" stroke-width="0.6" fill="none"/><rect x="355" y="360.6" width="8.8" height="3" fill="#3daee9" /><rect x="356.2" y="361.4" width="1.4" height="1.4" fill="#c0392b" /><path d="M358.4,362.1 h4" stroke="#e8f4fc" stroke-width="0.6" fill="none"/></svg>
<svg class="th ns" style="left:159px;top:128px;width:109.5px;height:86px;background:#fcfcfc;" viewBox="428 279 109.5 86" preserveAspectRatio="none"><rect x="428" y="279" width="110" height="86" fill="#eff0f1" /><rect x="428" y="279" width="109.5" height="3.2" fill="#434c53" /><rect x="534.2" y="279.8" width="1.8" height="1.6" fill="#e8e8e8" /><rect x="428.8" y="279.8" width="1.4" height="1.6" fill="#3daee9" /><path d="M479,280.6 h8" stroke="#aab0b5" stroke-width="0.6" fill="none"/><path d="M430,284.4 q2.6,-2.6 4.2,0.4 q1,3.2 -1.8,4 q-3.4,0.2 -2.4,-4.4z" fill="#2a8be6"/><rect x="438.4" y="284" width="26" height="3.6" fill="#fcfcfc" stroke="#c9cbcd" stroke-width=".4"/><rect x="468" y="284" width="27" height="3.6" fill="#fcfcfc" stroke="#c9cbcd" stroke-width=".4"/><path d="M440.4,285.8 h7" stroke="#777" stroke-width="0.6" fill="none"/><path d="M470,285.8 h15" stroke="#777" stroke-width="0.6" fill="none"/><rect x="532.6" y="284.6" width="2" height="2" fill="#8d9194" /><rect x="428" y="289.8" width="109.5" height="0.4" fill="#d0d2d4" /><rect x="430.8" y="292.4" width="30" height="70" fill="#fcfcfc" /><path d="M432,294.2 h8.6" stroke="#888" stroke-width="0.7" fill="none"/><rect x="430.8" y="294.7" width="30" height="3.26" fill="#f0f1f2" /><path d="M436.4,296.4 h10" stroke="#74787c" stroke-width="0.75" fill="none"/><path d="M451.6,296.4 h5" stroke="#b4b7ba" stroke-width=".7" stroke-dasharray=".8 .9"/><path d="M436.4,299.66 h7" stroke="#74787c" stroke-width="0.75" fill="none"/><path d="M451.6,299.66 h5" stroke="#b4b7ba" stroke-width=".7" stroke-dasharray=".8 .9"/><rect x="430.8" y="301.22" width="30" height="3.26" fill="#f0f1f2" /><path d="M436.4,302.92 h8" stroke="#74787c" stroke-width="0.75" fill="none"/><path d="M451.6,302.92 h5" stroke="#b4b7ba" stroke-width=".7" stroke-dasharray=".8 .9"/><path d="M436.4,306.18 h10" stroke="#74787c" stroke-width="0.75" fill="none"/><path d="M451.6,306.18 h5" stroke="#b4b7ba" stroke-width=".7" stroke-dasharray=".8 .9"/><rect x="430.8" y="307.74" width="30" height="3.26" fill="#f0f1f2" /><path d="M436.4,309.44 h6" stroke="#74787c" stroke-width="0.75" fill="none"/><path d="M451.6,309.44 h5" stroke="#b4b7ba" stroke-width=".7" stroke-dasharray=".8 .9"/><path d="M436.4,312.7 h13" stroke="#74787c" stroke-width="0.75" fill="none"/><path d="M453,312.7 h5" stroke="#b4b7ba" stroke-width=".7" stroke-dasharray=".8 .9"/><rect x="430.8" y="314.26" width="30" height="3.26" fill="#f0f1f2" /><path d="M436.4,315.96 h7" stroke="#74787c" stroke-width="0.75" fill="none"/><path d="M451.6,315.96 h5" stroke="#b4b7ba" stroke-width=".7" stroke-dasharray=".8 .9"/><path d="M436.4,319.22 h7" stroke="#74787c" stroke-width="0.75" fill="none"/><path d="M451.6,319.22 h5" stroke="#b4b7ba" stroke-width=".7" stroke-dasharray=".8 .9"/><rect x="430.8" y="320.78" width="30" height="3.26" fill="#f0f1f2" /><path d="M436.4,322.48 h8" stroke="#74787c" stroke-width="0.75" fill="none"/><path d="M451.6,322.48 h5" stroke="#b4b7ba" stroke-width=".7" stroke-dasharray=".8 .9"/><path d="M436.4,325.74 h7" stroke="#74787c" stroke-width="0.75" fill="none"/><path d="M451.6,325.74 h5" stroke="#b4b7ba" stroke-width=".7" stroke-dasharray=".8 .9"/><rect x="430.8" y="327.3" width="30" height="3.26" fill="#f0f1f2" /><path d="M436.4,329 h6" stroke="#74787c" stroke-width="0.75" fill="none"/><path d="M451.6,329 h5" stroke="#b4b7ba" stroke-width=".7" stroke-dasharray=".8 .9"/><path d="M436.4,332.26 h6" stroke="#74787c" stroke-width="0.75" fill="none"/><path d="M451.6,332.26 h5" stroke="#b4b7ba" stroke-width=".7" stroke-dasharray=".8 .9"/><rect x="430.8" y="333.82" width="30" height="3.26" fill="#f0f1f2" /><path d="M436.4,335.52 h14" stroke="#74787c" stroke-width="0.75" fill="none"/><path d="M453,335.52 h5" stroke="#b4b7ba" stroke-width=".7" stroke-dasharray=".8 .9"/><path d="M436.4,338.78 h14" stroke="#74787c" stroke-width="0.75" fill="none"/><path d="M453,338.78 h5" stroke="#b4b7ba" stroke-width=".7" stroke-dasharray=".8 .9"/><rect x="430.8" y="340.34" width="30" height="3.26" fill="#f0f1f2" /><path d="M436.4,342.04 h7" stroke="#74787c" stroke-width="0.75" fill="none"/><path d="M451.6,342.04 h5" stroke="#b4b7ba" stroke-width=".7" stroke-dasharray=".8 .9"/><rect x="430.8" y="343.6" width="30" height="3.26" fill="#cfe6f7" /><path d="M436.4,345.3 h8" stroke="#74787c" stroke-width="0.75" fill="none"/><path d="M451.6,345.3 h5" stroke="#b4b7ba" stroke-width=".7" stroke-dasharray=".8 .9"/><rect x="430.8" y="346.86" width="30" height="3.26" fill="#f0f1f2" /><path d="M436.4,348.56 h14" stroke="#74787c" stroke-width="0.75" fill="none"/><path d="M453,348.56 h5" stroke="#b4b7ba" stroke-width=".7" stroke-dasharray=".8 .9"/><path d="M436.4,351.82 h8" stroke="#74787c" stroke-width="0.75" fill="none"/><path d="M451.6,351.82 h5" stroke="#b4b7ba" stroke-width=".7" stroke-dasharray=".8 .9"/><rect x="430.8" y="353.38" width="30" height="3.26" fill="#f0f1f2" /><path d="M436.4,355.08 h7" stroke="#74787c" stroke-width="0.75" fill="none"/><path d="M451.6,355.08 h5" stroke="#b4b7ba" stroke-width=".7" stroke-dasharray=".8 .9"/><path d="M436.4,358.34 h13" stroke="#74787c" stroke-width="0.75" fill="none"/><path d="M453,358.34 h5" stroke="#b4b7ba" stroke-width=".7" stroke-dasharray=".8 .9"/><rect x="430.8" y="359.9" width="30" height="3.26" fill="#f0f1f2" /><path d="M436.4,361.6 h13" stroke="#74787c" stroke-width="0.75" fill="none"/><path d="M453,361.6 h5" stroke="#b4b7ba" stroke-width=".7" stroke-dasharray=".8 .9"/><rect x="461.4" y="314" width="0.9" height="15" fill="#6d7175" /><rect x="461.6" y="293" width="0.5" height="69" fill="#d8dadc" /><text x="464.6" y="300.4" font-size="5.3" font-family="Liberation Sans,sans-serif" fill="#2e3236" textLength="35.6" lengthAdjust="spacingAndGlyphs">Category: Famille</text><path d="M465,302.8 h15" stroke="#777" stroke-width="0.7" fill="none"/><path d="M493.6,306 v2 l.9,-.5z" fill="#333"/><rect x="465" y="310.8" width="28.4" height="36" fill="#adc2de" /><rect x="467" y="312.6" width="24.4" height="26" fill="none" stroke="#a3b8d4" stroke-width=".5"/><path d="M476,314.8 h6" stroke="#8298b8" stroke-width="0.6" fill="none"/><path d="M472.6,341.6 h8" stroke="#9fb2cc" stroke-width="0.7" fill="none"/><circle cx="484.4" cy="341.6" r="1.3" fill="none" stroke="#93a8c6" stroke-width=".4"/><rect x="495.6" y="310.8" width="38.6" height="36" fill="#adc2de" /><rect x="501" y="310.8" width="27.2" height="28.2" fill="#3daee9" /><path d="M514.6,325.4 L528.2,339 V323 L521,318Z" fill="#2a94d2" opacity=".8"/><path d="M505.6,324.6 q-1.4,-1 -1.2,-3.6 q.4,-1.4 1.4,-.4 q-.4,-7 8.8,-7.2 q9,.2 8.8,7.2 q1,-1 1.4,.4 q.2,2.6 -1.2,3.6 q-.8,6.8 -4.4,10 v4.4 h-9.2 v-4.4 q-3.6,-3.2 -4.4,-10z" fill="#f6f7f7"/><ellipse cx="514.6" cy="325" rx="1.3" ry="2.4" fill="#2ecc71"/><circle cx="510.6" cy="321.6" r=".8" fill="#3daee9"/><circle cx="518.6" cy="321.6" r=".8" fill="#3daee9"/><path d="M511.6,329.8 q3,2 6,0" stroke="#3daee9" stroke-width=".8" fill="none"/><path d="M500,341.8 h9.6" stroke="#5d6f8a" stroke-width="1" fill="none"/><path d="M519,341.8 h6" stroke="#5d6f8a" stroke-width="1" fill="none"/><circle cx="513" cy="341.8" r="1.3" fill="none" stroke="#d05a5a" stroke-width=".5"/><circle cx="528.2" cy="341.8" r="1.3" fill="none" stroke="#6d7f9a" stroke-width=".5"/><path d="M502,358.6 h6" stroke="#777" stroke-width="0.9" fill="none"/><path d="M520,358.6 h7" stroke="#777" stroke-width="0.9" fill="none"/><path d="M511.2,357.2 l1.4,1.4 l-1.4,1.4 M529.4,358.8 l1,1 l2,-2.4" stroke="#777" stroke-width=".5" fill="none"/></svg>
<svg class="th" style="left:305px;top:126px;width:105px;height:91px;background:#fcfcfc;" viewBox="574 277 105 91" preserveAspectRatio="none"><defs><radialGradient id="bk1" cx=".5" cy=".32" r=".7"><stop offset="0" stop-color="#5a5a5a"/><stop offset=".55" stop-color="#2a2a2a"/><stop offset="1" stop-color="#050505"/></radialGradient><radialGradient id="bk2" cx=".5" cy=".5" r=".5"><stop offset=".78" stop-color="#000" stop-opacity="0"/><stop offset="1" stop-color="#000" stop-opacity=".55"/></radialGradient><linearGradient id="bk3" x1="0" y1="0" x2="0" y2="1"><stop offset="0" stop-color="#b00505"/><stop offset="1" stop-color="#870000"/></linearGradient><clipPath id="bkc"><ellipse cx="626.5" cy="316.2" rx="47.4" ry="30.3"/></clipPath></defs><rect x="574" y="277" width="105" height="91" fill="#f2f2f2" /><rect x="574.8" y="277.8" width="103.4" height="5.4" fill="#434c53" /><circle cx="674.852" cy="280.5" r="1.944" fill="#f4f4f4"/><path d="M622,280.4 h8" stroke="#c0c6ca" stroke-width="0.7" fill="none"/><rect x="575.6" y="278.8" width="1.6" height="1.8" fill="#e8c030" /><path d="M664,280.6 h5" stroke="#aab" stroke-width="0.5" fill="none"/><rect x="575.4" y="283.2" width="102.2" height="83.4" fill="url(#bk3)" /><g transform="rotate(-1.5 609 348)"><rect x="575" y="329" width="68.5" height="40" fill="#fafafa"/><path d="M575,334 h68.5 M575,337.9 h68.5 M575,341.8 h68.5 M575,345.7 h68.5 M575,349.6 h68.5 M575,353.5 h68.5 M575,357.4 h68.5 M575,361.3 h68.5 M575,365.2 h68.5" stroke="#9db4ea" stroke-width="0.6" fill="none"/><path d="M579.4,329 v40" stroke="#e05050" stroke-width=".6"/><text x="580" y="362.6" font-size="3.6" font-style="italic" font-family="Liberation Sans,sans-serif" fill="#2a3ae0">Support free education</text></g><g clip-path="url(#bkc)"><rect x="579" y="285.8" width="47.5" height="30.4" fill="#dcc010" /><rect x="626.5" y="285.8" width="47.5" height="30.4" fill="#b41414" /><rect x="579" y="316.2" width="47.5" height="30.4" fill="#1c62bc" /><rect x="626.5" y="316.2" width="47.5" height="30.4" fill="#10983c" /><ellipse cx="626.5" cy="316.2" rx="47.4" ry="30.3" fill="url(#bk2)"/><path d="M579,316.2 h95 M626.5,285.8 v61" stroke="#f0f0f0" stroke-width=".8"/></g><circle cx="626.5" cy="316.2" r="25.2" fill="#d8d8d8"/><circle cx="626.5" cy="316.2" r="24.4" fill="url(#bk1)"/><rect x="618" y="300" width="15.6" height="8" fill="#1a1a1a" stroke="#555" stroke-width=".5" rx=".8"/><rect x="619.4" y="301" width="9.4" height="6" fill="#3a0808" /><text x="619.8" y="306.4" font-size="6" font-weight="bold" font-family="Liberation Mono,monospace" fill="#e01818" textLength="8.6" lengthAdjust="spacingAndGlyphs">00</text><text x="606.6" y="318.8" font-size="7.4" font-weight="bold" font-family="Liberation Sans,sans-serif" fill="#222" stroke="#eee" stroke-width=".55" textLength="40" lengthAdjust="spacingAndGlyphs">BLINKEN</text><rect x="620" y="330.8" width="12.6" height="4" fill="#6a6a6a" rx=".5"/><path d="M622,332.8 h8.6" stroke="#222" stroke-width="0.8" fill="none"/><path d="M604,331 q22,13 45,0 q-8,11 -22.5,11 q-14,0 -22.500,-11z" fill="#000" opacity=".55"/><rect x="578" y="286.4" width="10.6" height="10.4" fill="#c84a14" rx=".8" opacity=".85"/><rect x="664.4" y="286.4" width="10.6" height="10.4" fill="#c84a14" rx=".8" opacity=".85"/><rect x="664.4" y="352.6" width="10.6" height="10.4" fill="#c84a14" rx=".8" opacity=".85"/><circle cx="669.7" cy="291.8" r="2.8" fill="none" stroke="#9a1a08" stroke-width=".9"/><path d="M669.7,287.8 v3.6" stroke="#9a1a08" stroke-width=".9"/><text x="667.6" y="361" font-size="8" font-weight="bold" font-family="Liberation Sans,sans-serif" fill="#b02808">?</text><path d="M579.6,288.6 h8 M579.6,291.6 h8 M579.6,294.6 h8" stroke="#a81c08" stroke-width="1.1" fill="none"/></svg>
<svg class="th" style="left:433px;top:142.5px;width:135px;height:74.5px;background:#fcfcfc;" viewBox="702 293.5 135 74.5" preserveAspectRatio="none"><rect x="702" y="293.5" width="135" height="74.5" fill="#eff0f1" /><rect x="702" y="293.5" width="135" height="0.8" fill="#fcfcfc" /><rect x="702.8" y="294.3" width="133.4" height="3.2" fill="#434c53" /><rect x="833.6" y="294.8" width="1.6" height="1.8" fill="#eee" /><path d="M764,296 h10" stroke="#aab0b5" stroke-width="0.6" fill="none"/><rect x="703.4" y="294.8" width="1.2" height="1.8" fill="#5a9ad6" /><path d="M704,299.4 h33" stroke="#85898c" stroke-width="0.7" fill="none"/><path d="M704.6,302.4 h30" stroke="#9a9da0" stroke-width="0.8" fill="none"/><rect x="735.4" y="300.8" width="7.4" height="3" fill="#e4e5e6" stroke="#cfd1d3" stroke-width=".3"/><path d="M744.6,302.4 h11" stroke="#85898c" stroke-width="0.8" fill="none"/><rect x="703" y="304.6" width="132" height="0.4" fill="#d9dbdd" /><rect x="708.4" y="305.6" width="1.2" height="2" fill="#8d9194" /><rect x="716" y="305.6" width="1.2" height="2" fill="#6d7175" /><rect x="804.8" y="305.6" width="1" height="2" fill="#d03030" /><path d="M807,306.6 h5" stroke="#999" stroke-width="0.6" fill="none"/><rect x="828.8" y="305.6" width="1.2" height="2" fill="#6d7175" /><rect x="703.6" y="308.6" width="104" height="2" fill="#fcfcfc" /><path d="M704.4,309.6 h4" stroke="#888" stroke-width="0.6" fill="none"/><rect x="716.6" y="311.4" width="16" height="2.2" fill="#c6c8ca" /><path d="M704.4,312.6 h10.6" stroke="#888" stroke-width="0.6" fill="none"/><path d="M717.6,312.6 h14" stroke="#666" stroke-width="0.6" fill="none"/><path d="M706,316.4 h86" stroke="#777a7d" stroke-width="1.3" stroke-dasharray="1.2 2.1"/><rect x="745.2" y="315.6" width="1.6" height="1.6" fill="#e07820" /><rect x="784.6" y="315.6" width="1.6" height="1.6" fill="#2a7ad0" /><rect x="788" y="315.6" width="1" height="1.6" fill="#2a9ad0" /><path d="M706,320.6 h20" stroke="#8d9194" stroke-width="1.2" stroke-dasharray="1.2 2.1"/><rect x="703.6" y="322.8" width="104.6" height="41.6" fill="#fcfcfc" /><path d="M724.6,323.6 h18" stroke="#3a3e42" stroke-width="0.8" fill="none"/><path d="M724.6,326.2 h63.6" stroke="#888b8e" stroke-width=".75" stroke-dasharray="2.4 .5 3.5 .6"/><path d="M724.6,327.42 h63.6" stroke="#888b8e" stroke-width=".75" stroke-dasharray="2.7 .5 3.9 .6"/><path d="M724.6,328.64 h63.6" stroke="#888b8e" stroke-width=".75" stroke-dasharray="2.6 .5 3.8 .6"/><path d="M724.6,329.86 h63.6" stroke="#888b8e" stroke-width=".75" stroke-dasharray="1.5 .5 2.9 .6"/><path d="M724.6,331.08 h63.6" stroke="#888b8e" stroke-width=".75" stroke-dasharray="2.9 .5 3.3 .6"/><path d="M724.6,332.3 h63.6" stroke="#888b8e" stroke-width=".75" stroke-dasharray="2.9 .5 2.2 .6"/><path d="M724.6,333.52 h63.6" stroke="#888b8e" stroke-width=".75" stroke-dasharray="2.2 .5 2.5 .6"/><path d="M724.6,334.74 h45.6333" stroke="#888b8e" stroke-width=".75" stroke-dasharray="2.4 .5 2.0 .6"/><path d="M724.6,338 h44" stroke="#33373a" stroke-width="0.9" fill="none"/><path d="M724.6,340.4 h63.6" stroke="#888b8e" stroke-width=".75" stroke-dasharray="1.8 .5 2.6 .6"/><path d="M724.6,341.62 h63.6" stroke="#888b8e" stroke-width=".75" stroke-dasharray="2.9 .5 3.5 .6"/><path d="M724.6,342.84 h63.6" stroke="#888b8e" stroke-width=".75" stroke-dasharray="1.7 .5 3.6 .6"/><path d="M724.6,344.06 h63.6" stroke="#888b8e" stroke-width=".75" stroke-dasharray="1.7 .5 3.2 .6"/><path d="M724.6,345.28 h63.6" stroke="#888b8e" stroke-width=".75" stroke-dasharray="1.7 .5 2.0 .6"/><path d="M724.6,346.5 h63.6" stroke="#888b8e" stroke-width=".75" stroke-dasharray="2.8 .5 2.4 .6"/><path d="M724.6,347.72 h63.6" stroke="#888b8e" stroke-width=".75" stroke-dasharray="1.8 .5 4.0 .6"/><path d="M724.6,348.94 h53.9941" stroke="#888b8e" stroke-width=".75" stroke-dasharray="1.9 .5 3.9 .6"/><path d="M724.6,352.4 h18" stroke="#33373a" stroke-width="0.9" fill="none"/><path d="M724.6,354.8 h63.6" stroke="#888b8e" stroke-width=".75" stroke-dasharray="2.3 .5 3.4 .6"/><path d="M724.6,356.02 h63.6" stroke="#888b8e" stroke-width=".75" stroke-dasharray="1.8 .5 3.9 .6"/><path d="M724.6,357.24 h63.6" stroke="#888b8e" stroke-width=".75" stroke-dasharray="2.5 .5 3.9 .6"/><path d="M724.6,358.46 h63.6" stroke="#888b8e" stroke-width=".75" stroke-dasharray="2.8 .5 2.6 .6"/><path d="M724.6,359.68 h63.6" stroke="#888b8e" stroke-width=".75" stroke-dasharray="2.0 .5 2.3 .6"/><path d="M724.6,360.9 h63.6" stroke="#888b8e" stroke-width=".75" stroke-dasharray="1.7 .5 2.1 .6"/><path d="M724.6,362.12 h63.6" stroke="#888b8e" stroke-width=".75" stroke-dasharray="2.0 .5 3.2 .6"/><path d="M724.6,363.34 h31.8861" stroke="#888b8e" stroke-width=".75" stroke-dasharray="2.5 .5 2.7 .6"/><rect x="807.2" y="324" width="0.5" height="40" fill="#d0d2d4" /><rect x="806.9" y="352.6" width="1" height="8.4" fill="#3a3e42" /><rect x="810" y="309.6" width="25.6" height="1.6" fill="#dde9f3" /><path d="M818,310.4 h6" stroke="#5a8ab8" stroke-width="0.6" fill="none"/><rect x="810.2" y="311.6" width="25.2" height="39.8" fill="#fcfcfc" stroke="#d9dbdd" stroke-width=".3"/><rect x="815.4" y="352.4" width="15" height="2.6" fill="#e9eaeb" /><rect x="817.6" y="353.2" width="1.4" height="1.2" fill="#aaa" /><rect x="821.6" y="353.2" width="2" height="1.2" fill="#333" /><rect x="826.6" y="353.2" width="1.2" height="1.2" fill="#d66" /><path d="M818,357 h9" stroke="#b5b8bb" stroke-width="0.7" fill="none"/><path d="M819,360 h7.6" stroke="#b5b8bb" stroke-width="0.7" fill="none"/><rect x="808.6" y="361.6" width="19.6" height="5.6" fill="#fcfcfc" stroke="#d2d4d6" stroke-width=".3"/><circle cx="811.8" cy="364.4" r="1.1" fill="#777"/><path d="M814.6,364.4 h11" stroke="#c6c9cc" stroke-width="0.7" fill="none"/><rect x="702" y="367.2" width="135" height="0.8" fill="#fcfcfc" /></svg>
<svg class="th" style="left:586px;top:126px;width:114px;height:91px;background:#fcfcfc;" viewBox="855 277 114 91" preserveAspectRatio="none"><defs><linearGradient id="bm1" x1="0" y1="0" x2="0" y2="1"><stop offset="0" stop-color="#b4e27a"/><stop offset=".45" stop-color="#e4ee74"/><stop offset="1" stop-color="#f2e460"/></linearGradient><radialGradient id="bm2" cx="0" cy="1" r="1"><stop offset="0" stop-color="#f2a84e"/><stop offset=".45" stop-color="#f4c25a" stop-opacity=".75"/><stop offset=".8" stop-color="#f0e060" stop-opacity="0"/></radialGradient><radialGradient id="bm3" cx=".55" cy=".12" r=".6"><stop offset="0" stop-color="#f8f6a0" stop-opacity=".9"/><stop offset="1" stop-color="#f0f080" stop-opacity="0"/></radialGradient><radialGradient id="bm4" cx="1" cy=".25" r=".45"><stop offset="0" stop-color="#98e07c"/><stop offset="1" stop-color="#a8e27a" stop-opacity="0"/></radialGradient><radialGradient id="bm5" cx=".4" cy=".35" r=".7"><stop offset="0" stop-color="#f8ea7a"/><stop offset="1" stop-color="#efc84e"/></radialGradient></defs><rect x="855" y="277" width="114" height="91" fill="#eff0f1" /><rect x="855" y="277" width="114" height="0.8" fill="#fcfcfc" /><rect x="855" y="277" width="0.8" height="91" fill="#fcfcfc" /><rect x="968.2" y="277" width="0.8" height="91" fill="#fcfcfc" /><rect x="855.8" y="277.8" width="112.4" height="5.2" fill="#434c53" /><circle cx="964.976" cy="280.4" r="1.872" fill="#f4f4f4"/><rect x="857" y="278.6" width="1.8" height="2" fill="#d8c060" /><path d="M902,280.4 h19" stroke="#b8bec2" stroke-width="0.7" fill="none"/><path d="M955,280.6 h6" stroke="#aab" stroke-width="0.5" fill="none"/><path d="M858.4,285.4 h5.6" stroke="#666" stroke-width="0.8" fill="none"/><path d="M868,285.4 h7.6" stroke="#666" stroke-width="0.8" fill="none"/><path d="M879.4,285.4 h4.6" stroke="#666" stroke-width="0.8" fill="none"/><rect x="859" y="290" width="2.4" height="2.6" fill="none" stroke="#444" stroke-width=".5"/><path d="M863.4,291.4 h4" stroke="#666" stroke-width="0.8" fill="none"/><rect x="871" y="290.2" width="2.4" height="2.4" fill="none" stroke="#777" stroke-width=".5"/><path d="M875,291.4 h6" stroke="#777" stroke-width="0.8" fill="none"/><rect x="883.6" y="288.6" width="0.4" height="5" fill="#cfd1d3" /><path d="M885.6,290 h3.4 l-1.2,1.6 v1.6 h-1 v-1.6z" fill="#333"/><path d="M890.6,291.4 h17" stroke="#666" stroke-width="0.8" fill="none"/><rect x="857.2" y="295" width="109.8" height="67" fill="url(#bm1)" /><rect x="857.2" y="295" width="109.8" height="67" fill="url(#bm4)" /><rect x="857.2" y="295" width="109.8" height="67" fill="url(#bm3)" /><rect x="857.2" y="295" width="109.8" height="67" fill="url(#bm2)" /><path d="M857.2,362 V338 q3,-9 9,-12 q6,2 6,14 l4,22z" fill="#f0a858" opacity=".7"/><path d="M905,310 l10,30 M915,306 l4,34 M925,308 l-3,30" stroke="#f6f0a0" stroke-width="2.4" opacity=".55"/><circle cx="888.9" cy="331.4" r="8.6" fill="url(#bm5)" stroke="#e8c050" stroke-width=".5"/><circle cx="889.5" cy="331.6" r="3" fill="none" stroke="#e2b848" stroke-width=".5"/><circle cx="906" cy="339.8" r="4.6" fill="url(#bm5)" stroke="#e8c458" stroke-width=".4"/><circle cx="873" cy="330" r="3.2" fill="#e6d070" opacity=".8"/><path d="M866.2,312.6 l4,-1 l3.6,.4 l-3.4,1 z" fill="#556"/><path d="M866,313.6 h4" stroke="#eee" stroke-width=".8"/><path d="M862,358 q20,-10 40,-2 M880,362 l8,-14 l8,14" stroke="#e8c860" stroke-width=".5" fill="none" opacity=".8"/><rect x="867.5" y="342.8" width="6.4" height="7.8" fill="#4a4e48" /><rect x="867" y="343.6" width="7.4" height="0.9" fill="#2c2e2c" /><rect x="868.3" y="344.6" width="4.8" height="1" fill="#8a9090" /><rect x="867" y="346.15" width="7.4" height="0.9" fill="#2c2e2c" /><rect x="868.3" y="347.15" width="4.8" height="1" fill="#8a9090" /><rect x="867" y="348.7" width="7.4" height="0.9" fill="#2c2e2c" /><rect x="868.3" y="349.7" width="4.8" height="1" fill="#8a9090" /><ellipse cx="870.7" cy="342.6" rx="4.2" ry="1.6" fill="#4aaaa0"/><ellipse cx="870.7" cy="342.1" rx="2.6" ry=".9" fill="#8ad8d0"/><rect x="876.3" y="339.8" width="6.4" height="10.8" fill="#4a4e48" /><rect x="875.8" y="340.6" width="7.4" height="0.9" fill="#2c2e2c" /><rect x="877.1" y="341.6" width="4.8" height="1" fill="#8a9090" /><rect x="875.8" y="343.15" width="7.4" height="0.9" fill="#2c2e2c" /><rect x="877.1" y="344.15" width="4.8" height="1" fill="#8a9090" /><rect x="875.8" y="345.7" width="7.4" height="0.9" fill="#2c2e2c" /><rect x="877.1" y="346.7" width="4.8" height="1" fill="#8a9090" /><rect x="875.8" y="348.25" width="7.4" height="0.9" fill="#2c2e2c" /><rect x="877.1" y="349.25" width="4.8" height="1" fill="#8a9090" /><ellipse cx="879.5" cy="339.6" rx="4.2" ry="1.6" fill="#4aaaa0"/><ellipse cx="879.5" cy="339.1" rx="2.6" ry=".9" fill="#8ad8d0"/><rect x="884.9" y="341" width="6.4" height="9.6" fill="#4a4e48" /><rect x="884.4" y="341.8" width="7.4" height="0.9" fill="#2c2e2c" /><rect x="885.7" y="342.8" width="4.8" height="1" fill="#8a9090" /><rect x="884.4" y="344.35" width="7.4" height="0.9" fill="#2c2e2c" /><rect x="885.7" y="345.35" width="4.8" height="1" fill="#8a9090" /><rect x="884.4" y="346.9" width="7.4" height="0.9" fill="#2c2e2c" /><rect x="885.7" y="347.9" width="4.8" height="1" fill="#8a9090" /><rect x="884.4" y="349.45" width="7.4" height="0.9" fill="#2c2e2c" /><rect x="885.7" y="350.45" width="4.8" height="1" fill="#8a9090" /><rect x="884.1" y="340.6" width="8" height="0.9" fill="#3a3a36" /><rect x="894.4" y="343.4" width="6.4" height="7.2" fill="#5a4a2a" /><rect x="893.9" y="344.2" width="7.4" height="0.9" fill="#2c2e2c" /><rect x="895" y="345.2" width="5.2" height="1" fill="#3a9a3a" /><rect x="897" y="345.2" width="1.4" height="1" fill="#c03a2a" /><rect x="893.9" y="346.75" width="7.4" height="0.9" fill="#2c2e2c" /><rect x="895" y="347.75" width="5.2" height="1" fill="#3a9a3a" /><rect x="897" y="347.75" width="1.4" height="1" fill="#c03a2a" /><rect x="893.9" y="349.3" width="7.4" height="0.9" fill="#2c2e2c" /><rect x="895" y="350.3" width="5.2" height="1" fill="#3a9a3a" /><rect x="897" y="350.3" width="1.4" height="1" fill="#c03a2a" /><rect x="893.6" y="343" width="8" height="0.9" fill="#3a3a36" /><rect x="903.8" y="343.4" width="6.4" height="7.2" fill="#5a4a2a" /><rect x="903.3" y="344.2" width="7.4" height="0.9" fill="#2c2e2c" /><rect x="904.4" y="345.2" width="5.2" height="1" fill="#3a9a3a" /><rect x="906.4" y="345.2" width="1.4" height="1" fill="#c03a2a" /><rect x="903.3" y="346.75" width="7.4" height="0.9" fill="#2c2e2c" /><rect x="904.4" y="347.75" width="5.2" height="1" fill="#3a9a3a" /><rect x="906.4" y="347.75" width="1.4" height="1" fill="#c03a2a" /><rect x="903.3" y="349.3" width="7.4" height="0.9" fill="#2c2e2c" /><rect x="904.4" y="350.3" width="5.2" height="1" fill="#3a9a3a" /><rect x="906.4" y="350.3" width="1.4" height="1" fill="#c03a2a" /><rect x="903" y="343" width="8" height="0.9" fill="#3a3a36" /><rect x="913.2" y="340.4" width="6.4" height="10.2" fill="#5a4a2a" /><rect x="912.7" y="341.2" width="7.4" height="0.9" fill="#2c2e2c" /><rect x="913.8" y="342.2" width="5.2" height="1" fill="#3a9a3a" /><rect x="915.8" y="342.2" width="1.4" height="1" fill="#c03a2a" /><rect x="912.7" y="343.75" width="7.4" height="0.9" fill="#2c2e2c" /><rect x="913.8" y="344.75" width="5.2" height="1" fill="#3a9a3a" /><rect x="915.8" y="344.75" width="1.4" height="1" fill="#c03a2a" /><rect x="912.7" y="346.3" width="7.4" height="0.9" fill="#2c2e2c" /><rect x="913.8" y="347.3" width="5.2" height="1" fill="#3a9a3a" /><rect x="915.8" y="347.3" width="1.4" height="1" fill="#c03a2a" /><rect x="912.7" y="348.85" width="7.4" height="0.9" fill="#2c2e2c" /><rect x="913.8" y="349.85" width="5.2" height="1" fill="#3a9a3a" /><rect x="915.8" y="349.85" width="1.4" height="1" fill="#c03a2a" /><rect x="912.4" y="340" width="8" height="0.9" fill="#3a3a36" /><rect x="922" y="339.8" width="6.4" height="10.8" fill="#4a4e48" /><rect x="921.5" y="340.6" width="7.4" height="0.9" fill="#2c2e2c" /><rect x="922.8" y="341.6" width="4.8" height="1" fill="#8a9090" /><rect x="921.5" y="343.15" width="7.4" height="0.9" fill="#2c2e2c" /><rect x="922.8" y="344.15" width="4.8" height="1" fill="#8a9090" /><rect x="921.5" y="345.7" width="7.4" height="0.9" fill="#2c2e2c" /><rect x="922.8" y="346.7" width="4.8" height="1" fill="#8a9090" /><rect x="921.5" y="348.25" width="7.4" height="0.9" fill="#2c2e2c" /><rect x="922.8" y="349.25" width="4.8" height="1" fill="#8a9090" /><ellipse cx="925.2" cy="339.6" rx="4.2" ry="1.6" fill="#4aaaa0"/><ellipse cx="925.2" cy="339.1" rx="2.6" ry=".9" fill="#8ad8d0"/><rect x="931.3" y="343.4" width="6.4" height="7.2" fill="#5a4a2a" /><rect x="930.8" y="344.2" width="7.4" height="0.9" fill="#2c2e2c" /><rect x="931.9" y="345.2" width="5.2" height="1" fill="#3a9a3a" /><rect x="933.9" y="345.2" width="1.4" height="1" fill="#c03a2a" /><rect x="930.8" y="346.75" width="7.4" height="0.9" fill="#2c2e2c" /><rect x="931.9" y="347.75" width="5.2" height="1" fill="#3a9a3a" /><rect x="933.9" y="347.75" width="1.4" height="1" fill="#c03a2a" /><rect x="930.8" y="349.3" width="7.4" height="0.9" fill="#2c2e2c" /><rect x="931.9" y="350.3" width="5.2" height="1" fill="#3a9a3a" /><rect x="933.9" y="350.3" width="1.4" height="1" fill="#c03a2a" /><rect x="930.5" y="343" width="8" height="0.9" fill="#3a3a36" /><rect x="940.8" y="340.4" width="6.4" height="10.2" fill="#5a4a2a" /><rect x="940.3" y="341.2" width="7.4" height="0.9" fill="#2c2e2c" /><rect x="941.4" y="342.2" width="5.2" height="1" fill="#3a9a3a" /><rect x="943.4" y="342.2" width="1.4" height="1" fill="#c03a2a" /><rect x="940.3" y="343.75" width="7.4" height="0.9" fill="#2c2e2c" /><rect x="941.4" y="344.75" width="5.2" height="1" fill="#3a9a3a" /><rect x="943.4" y="344.75" width="1.4" height="1" fill="#c03a2a" /><rect x="940.3" y="346.3" width="7.4" height="0.9" fill="#2c2e2c" /><rect x="941.4" y="347.3" width="5.2" height="1" fill="#3a9a3a" /><rect x="943.4" y="347.3" width="1.4" height="1" fill="#c03a2a" /><rect x="940.3" y="348.85" width="7.4" height="0.9" fill="#2c2e2c" /><rect x="941.4" y="349.85" width="5.2" height="1" fill="#3a9a3a" /><rect x="943.4" y="349.85" width="1.4" height="1" fill="#c03a2a" /><rect x="940" y="340" width="8" height="0.9" fill="#3a3a36" /><rect x="950" y="340.4" width="6.4" height="10.2" fill="#5a4a2a" /><rect x="949.5" y="341.2" width="7.4" height="0.9" fill="#2c2e2c" /><rect x="950.6" y="342.2" width="5.2" height="1" fill="#3a9a3a" /><rect x="952.6" y="342.2" width="1.4" height="1" fill="#c03a2a" /><rect x="949.5" y="343.75" width="7.4" height="0.9" fill="#2c2e2c" /><rect x="950.6" y="344.75" width="5.2" height="1" fill="#3a9a3a" /><rect x="952.6" y="344.75" width="1.4" height="1" fill="#c03a2a" /><rect x="949.5" y="346.3" width="7.4" height="0.9" fill="#2c2e2c" /><rect x="950.6" y="347.3" width="5.2" height="1" fill="#3a9a3a" /><rect x="952.6" y="347.3" width="1.4" height="1" fill="#c03a2a" /><rect x="949.5" y="348.85" width="7.4" height="0.9" fill="#2c2e2c" /><rect x="950.6" y="349.85" width="5.2" height="1" fill="#3a9a3a" /><rect x="952.6" y="349.85" width="1.4" height="1" fill="#c03a2a" /><rect x="949.2" y="340" width="8" height="0.9" fill="#3a3a36" /><path d="M936.6,364.6 h27" stroke="#777" stroke-width="0.8" fill="none"/><rect x="855" y="367.2" width="114" height="0.8" fill="#fcfcfc" /></svg>
<svg class="th" style="left:14px;top:248px;width:114px;height:91px;background:#fcfcfc;" viewBox="283 399 114 91" preserveAspectRatio="none"><rect x="283" y="399" width="114" height="91" fill="#eff0f1" /><rect x="283" y="399" width="114" height="0.8" fill="#fcfcfc" /><rect x="283" y="399" width="0.8" height="91" fill="#fcfcfc" /><rect x="396.2" y="399" width="0.8" height="91" fill="#fcfcfc" /><rect x="283.8" y="399.8" width="112.4" height="5.2" fill="#434c53" /><circle cx="392.976" cy="402.4" r="1.872" fill="#f4f4f4"/><rect x="285" y="400.6" width="2" height="2.2" fill="#e04040" /><path d="M333,402.4 h14" stroke="#b8bec2" stroke-width="0.7" fill="none"/><path d="M383,402.6 h6" stroke="#aab" stroke-width="0.5" fill="none"/><path d="M286.4,407.4 h5.6" stroke="#666" stroke-width="0.8" fill="none"/><path d="M296,407.4 h5.6" stroke="#666" stroke-width="0.8" fill="none"/><path d="M305,407.4 h7.6" stroke="#666" stroke-width="0.8" fill="none"/><path d="M316.4,407.4 h4.6" stroke="#666" stroke-width="0.8" fill="none"/><rect x="287" y="412" width="2.4" height="2.6" fill="none" stroke="#444" stroke-width=".5"/><path d="M291.4,413.4 h4" stroke="#555" stroke-width="0.8" fill="none"/><path d="M300,413.4 h10" stroke="#b5b8bb" stroke-width="0.8" fill="none"/><rect x="312.6" y="410.6" width="0.4" height="5.4" fill="#cfd1d3" /><path d="M316,413.4 h9" stroke="#b5b8bb" stroke-width="0.8" fill="none"/><path d="M329,413.4 h7" stroke="#b5b8bb" stroke-width="0.8" fill="none"/><rect x="283.8" y="417" width="112.4" height="65.2" fill="#fcfcfc" /><path d="M287.30,419.2 V478.5 M287.3,419.20 H346.4 M289.99,419.2 V478.5 M287.3,421.90 H346.4 M292.67,419.2 V478.5 M287.3,424.59 H346.4 M295.36,419.2 V478.5 M287.3,427.29 H346.4 M298.05,419.2 V478.5 M287.3,429.98 H346.4 M300.73,419.2 V478.5 M287.3,432.68 H346.4 M303.42,419.2 V478.5 M287.3,435.37 H346.4 M306.10,419.2 V478.5 M287.3,438.07 H346.4 M308.79,419.2 V478.5 M287.3,440.76 H346.4 M311.48,419.2 V478.5 M287.3,443.46 H346.4 M314.16,419.2 V478.5 M287.3,446.15 H346.4 M316.85,419.2 V478.5 M287.3,448.85 H346.4 M319.54,419.2 V478.5 M287.3,451.55 H346.4 M322.22,419.2 V478.5 M287.3,454.24 H346.4 M324.91,419.2 V478.5 M287.3,456.94 H346.4 M327.60,419.2 V478.5 M287.3,459.63 H346.4 M330.28,419.2 V478.5 M287.3,462.33 H346.4 M332.97,419.2 V478.5 M287.3,465.02 H346.4 M335.65,419.2 V478.5 M287.3,467.72 H346.4 M338.34,419.2 V478.5 M287.3,470.41 H346.4 M341.03,419.2 V478.5 M287.3,473.11 H346.4 M343.71,419.2 V478.5 M287.3,475.80 H346.4 M346.40,419.2 V478.5 M287.3,478.50 H346.4" stroke="#bcbcf6" stroke-width=".4" fill="none"/><circle cx="307.45" cy="433.97" r="1" fill="none" stroke="#4a4ac8" stroke-width=".5"/><circle cx="312.82" cy="433.97" r="1" fill="none" stroke="#4a4ac8" stroke-width=".5"/><circle cx="312.82" cy="436.66" r="1" fill="none" stroke="#4a4ac8" stroke-width=".5"/><circle cx="318.19" cy="431.29" r="1" fill="none" stroke="#4a4ac8" stroke-width=".5"/><circle cx="304.76" cy="442.03" r="1" fill="none" stroke="#4a4ac8" stroke-width=".5"/><circle cx="310.13" cy="442.03" r="1" fill="none" stroke="#4a4ac8" stroke-width=".5"/><circle cx="312.82" cy="442.03" r="1" fill="none" stroke="#4a4ac8" stroke-width=".5"/><circle cx="315.51" cy="444.72" r="1" fill="none" stroke="#4a4ac8" stroke-width=".5"/><circle cx="318.19" cy="444.72" r="1" fill="none" stroke="#4a4ac8" stroke-width=".5"/><circle cx="312.82" cy="439.35" r="1" fill="none" stroke="#4a4ac8" stroke-width=".5"/><circle cx="315.51" cy="447.41" r="1" fill="none" stroke="#4a4ac8" stroke-width=".5"/><path d="M312.02,430.49 l1.6,1.6 m0,-1.6 l-1.6,1.6" stroke="#e07060" stroke-width=".5"/><path d="M317.39,433.17 l1.6,1.6 m0,-1.6 l-1.6,1.6" stroke="#e07060" stroke-width=".5"/><path d="M317.39,435.86 l1.6,1.6 m0,-1.6 l-1.6,1.6" stroke="#e07060" stroke-width=".5"/><path d="M309.33,438.55 l1.6,1.6 m0,-1.6 l-1.6,1.6" stroke="#e07060" stroke-width=".5"/><path d="M314.71,438.55 l1.6,1.6 m0,-1.6 l-1.6,1.6" stroke="#e07060" stroke-width=".5"/><path d="M317.39,438.55 l1.6,1.6 m0,-1.6 l-1.6,1.6" stroke="#e07060" stroke-width=".5"/><path d="M306.65,441.23 l1.6,1.6 m0,-1.6 l-1.6,1.6" stroke="#e07060" stroke-width=".5"/><path d="M317.39,441.23 l1.6,1.6 m0,-1.6 l-1.6,1.6" stroke="#e07060" stroke-width=".5"/><path d="M312.02,443.92 l1.6,1.6 m0,-1.6 l-1.6,1.6" stroke="#e07060" stroke-width=".5"/><path d="M320.08,446.61 l1.6,1.6 m0,-1.6 l-1.6,1.6" stroke="#e07060" stroke-width=".5"/><path d="M314.71,451.98 l1.6,1.6 m0,-1.6 l-1.6,1.6" stroke="#e07060" stroke-width=".5"/><path d="M309.33,435.86 l1.6,1.6 m0,-1.6 l-1.6,1.6" stroke="#e07060" stroke-width=".5"/><circle cx="312.82" cy="450.09" r="1.1" fill="none" stroke="#30a050" stroke-width=".7"/><path d="M286,485 h24" stroke="#777" stroke-width="0.7" fill="none"/><path d="M347,485 h17" stroke="#777" stroke-width="0.7" fill="none"/><rect x="366" y="482.6" width="25.8" height="5.2" fill="#3daee9" rx=".5"/><path d="M370.4,485.2 h8" stroke="#d6ecfa" stroke-width="0.7" fill="none"/><rect x="367.6" y="484.4" width="1.6" height="1.6" fill="#2a7ab0" /><rect x="388.8" y="484.8" width="0.8" height="0.8" fill="#d6ecfa" /><rect x="283" y="489.2" width="114" height="0.8" fill="#fcfcfc" /></svg>
<svg class="th" style="left:154px;top:248px;width:120px;height:91px;background:#fcfcfc;" viewBox="423 399 120 91" preserveAspectRatio="none"><rect x="423" y="399" width="120" height="91" fill="#eff0f1" /><rect x="423" y="399" width="120" height="0.8" fill="#fcfcfc" /><rect x="423" y="399" width="0.8" height="91" fill="#fcfcfc" /><rect x="542.2" y="399" width="0.8" height="91" fill="#fcfcfc" /><rect x="423.8" y="399.8" width="118.4" height="4.2" fill="#434c53" /><rect x="538.8" y="400.8" width="2" height="2.2" fill="#eee" /><path d="M480,402 h5" stroke="#aab0b5" stroke-width="0.6" fill="none"/><rect x="425" y="401" width="1.4" height="1.6" fill="#ccd" /><path d="M425.6,405.4 h78" stroke="#74787c" stroke-width="0.75" fill="none"/><path d="M433,405.4 h1.6 M441,405.4 h1.4 M447,405.4 h1.4 M458,405.4 h1.4 M471,405.4 h1.6 M480,405.4 h1.4 M485.600,405.4 h1.6 M499,405.4 h1.4" stroke="#eff0f1" stroke-width="1"/><path d="M426,409.8 h30" stroke="#6d7175" stroke-width="1.7" stroke-dasharray="1.6 2.7"/><rect x="460.2" y="408.8" width="1.6" height="1.8" fill="#444" /><path d="M462.6,409.8 h14" stroke="#74787c" stroke-width="0.8" fill="none"/><rect x="480.2" y="408.8" width="1.4" height="1.8" fill="#777" /><path d="M482.6,409.8 h12" stroke="#74787c" stroke-width="0.8" fill="none"/><rect x="498.2" y="408.8" width="1.8" height="1.8" fill="#333" /><path d="M500.6,409.8 h14" stroke="#74787c" stroke-width="0.8" fill="none"/><path d="M518,409.800 h22" stroke="#9a9da0" stroke-width="1.4" stroke-dasharray="1.4 2.8"/><path d="M426,414.2 h5" stroke="#888" stroke-width="0.6" fill="none"/><rect x="432.6" y="413" width="2.2" height="2.2" fill="#555" /><rect x="424.6" y="416" width="88.6" height="71.6" fill="#fcfcfc" /><path d="M427,419 h2.6" stroke="#bbb" stroke-width="0.6" fill="none"/><path d="M432,419 h39" stroke="#a5a8ab" stroke-width="0.7" fill="none"/><text x="432" y="424.9" font-size="3.3" font-style="italic" font-family="Liberation Serif,serif" fill="#333" textLength="39" lengthAdjust="spacingAndGlyphs">f(x) := x³ − 6x² + 3 − 10x + 24</text><path d="M427,427.2 h2.6" stroke="#bbb" stroke-width="0.6" fill="none"/><path d="M432,427.2 h6" stroke="#5a9ad6" stroke-width="0.7" fill="none"/><path d="M438.4,427.2 h14" stroke="#a5a8ab" stroke-width="0.7" fill="none"/><rect x="452.6" y="426.8" width="0.9" height="0.9" fill="#e8a040" /><rect x="441" y="431" width="69" height="51.4" fill="#fff" stroke="#555" stroke-width=".5"/><path d="M469.3,431 V482.4 M441,456.7 H510" stroke="#c8c8c8" stroke-width=".45"/><path d="M441,431.00 h1.2 M510,431.00 h-1.2 M438.2,431.00 h1.6 M441,439.56 h1.2 M510,439.56 h-1.2 M438.2,439.56 h1.6 M441,448.12 h1.2 M510,448.12 h-1.2 M438.2,448.12 h1.6 M441,456.68 h1.2 M510,456.68 h-1.2 M438.2,456.68 h1.6 M441,465.24 h1.2 M510,465.24 h-1.2 M438.2,465.24 h1.6 M441,473.80 h1.2 M510,473.80 h-1.2 M438.2,473.80 h1.6 M441,482.36 h1.2 M510,482.36 h-1.2 M438.2,482.36 h1.6 M447.40,482.4 v-1.2 M447.40,431 v1.200 M447.40,483.6 v1.4 M458.70,482.4 v-1.2 M458.70,431 v1.200 M458.70,483.6 v1.4 M470.00,482.4 v-1.2 M470.00,431 v1.200 M470.00,483.6 v1.4 M481.30,482.4 v-1.2 M481.30,431 v1.200 M481.30,483.6 v1.4 M492.60,482.4 v-1.2 M492.60,431 v1.200 M492.60,483.6 v1.4 M503.90,482.4 v-1.2 M503.90,431 v1.200 M503.90,483.6 v1.4" stroke="#777" stroke-width=".4"/><path d="M441.3,476.4 C445,463 452,452.4 460.5,452.3 C470,452.2 478,460.4 488.5,460.4 C498,460.4 505.5,448 509.8,435.6" stroke="#9292f4" stroke-width=".7" fill="none"/><path d="M435.200,452 v9" stroke="#aaa" stroke-width=".6" stroke-dasharray=".8 .6"/><rect x="511" y="420" width="1" height="57.6" fill="#4a4e52" /><rect x="511.2" y="417" width="0.5" height="68" fill="#d8dadc" /><rect x="427.6" y="485.2" width="73.4" height="1.1" fill="#9a9da0" /><rect x="427.6" y="485.5" width="82" height="0.5" fill="#d8dadc" /><path d="M515,414.2 h4" stroke="#888" stroke-width="0.6" fill="none"/><rect x="534.6" y="413.2" width="1.6" height="1.8" fill="#555" /><rect x="514.2" y="416" width="23.4" height="71.6" fill="#fcfcfc" stroke="#93cee9" stroke-width=".5"/><text x="515" y="421.6" font-size="4.1" font-weight="bold" font-family="Liberation Serif,serif" fill="#222" textLength="12.6" lengthAdjust="spacingAndGlyphs">Cantor</text><path d="M515,424 h17" stroke="#888" stroke-width="0.6" fill="none"/><path d="M515,425.6 h11" stroke="#888" stroke-width="0.6" fill="none"/><rect x="538.4" y="416" width="3.6" height="71.6" fill="#e7e8e9" /><rect x="538.6" y="422.4" width="3" height="14.4" fill="#c9cbcd" /><path d="M540.2,424 v11" stroke="#777" stroke-width=".7" stroke-dasharray=".7 .5"/><path d="M540.2,417 v4" stroke="#777" stroke-width=".7" stroke-dasharray=".7 .5"/><rect x="423" y="489.2" width="120" height="0.8" fill="#fcfcfc" /></svg>
<svg class="th" style="left:296px;top:248px;width:123px;height:91px;background:#fcfcfc;" viewBox="565 399 123 91" preserveAspectRatio="none"><defs><linearGradient id="cva" x1="0" y1="0" x2=".6" y2="1"><stop offset="0" stop-color="#7c3aa4"/><stop offset=".5" stop-color="#9340b8"/><stop offset="1" stop-color="#a844c4"/></linearGradient><linearGradient id="cvb" x1="0" y1="0" x2="0" y2="1"><stop offset="0" stop-color="#f07c12"/><stop offset=".45" stop-color="#f4a020"/><stop offset=".6" stop-color="#e8d83c"/><stop offset=".75" stop-color="#5cc890"/><stop offset="1" stop-color="#2a8ad8"/></linearGradient><linearGradient id="cvc" x1="0" y1="0" x2="1" y2="0"><stop offset="0" stop-color="#e8c030"/><stop offset=".35" stop-color="#e8e040"/><stop offset=".6" stop-color="#48c8a0"/><stop offset="1" stop-color="#2a7ae0"/></linearGradient></defs><rect x="565" y="399" width="123" height="91" fill="url(#cva)" /><path d="M652.945,399 L677.545,399 L668.935,429.94 L654.175,419.02Z" fill="#5e3296" opacity=".85"/><path d="M565,464.52 L589.6,471.8 L579.76,490 L565,490Z" fill="#7a34a8" opacity=".7"/><path d="M577.3,471.8 L620.35,477.26 L601.9,490 L579.76,490Z" fill="#b04cd0" opacity=".6"/><path d="M677.545,399 H688 V455.42 L683.08,437.22 L675.7,417.2Z" fill="url(#cvb)"/><path d="M679.39,399 L688,409.92 V426.3 L680.62,413.56Z" fill="#f8981c" opacity=".8"/><path d="M684.925,444.5 L688,439.95 V490 H683.08Z" fill="url(#cvb)"/><path d="M616.66,490 L641.26,483.63 L688,480.9 V490Z" fill="url(#cvc)"/><rect x="566.6" y="400.6" width="88.2" height="70.200" fill="#000" opacity=".2"/><rect x="567" y="400.8" width="87.2" height="69.2" fill="#eff0f1" /><rect x="567.6" y="401.4" width="2" height="2.2" fill="#c02020" /><path d="M607,402.6 h8" stroke="#c9ccce" stroke-width="0.6" fill="none"/><circle cx="650.4" cy="402.600" r="1" fill="none" stroke="#aaa" stroke-width=".4"/><path d="M568.8,406.6 h3" stroke="#666" stroke-width="0.8" fill="none"/><path d="M574,406.6 h4" stroke="#666" stroke-width="0.8" fill="none"/><path d="M580.6,406.6 h8" stroke="#666" stroke-width="0.8" fill="none"/><path d="M591.4,406.6 h9" stroke="#666" stroke-width="0.8" fill="none"/><path d="M603,406.6 h7" stroke="#666" stroke-width="0.8" fill="none"/><path d="M612.4,406.6 h4" stroke="#666" stroke-width="0.8" fill="none"/><path d="M569,411.4 h64" stroke="#b9bcbf" stroke-width="2" stroke-dasharray="2.4 1.4 6 2.400"/><rect x="567" y="414.4" width="87.2" height="0.4" fill="#d6d8da" /><path d="M568.2,416.2 h8.6" stroke="#666" stroke-width="0.7" fill="none"/><path d="M606,416.2 h6" stroke="#777" stroke-width="0.6" fill="none"/><path d="M618,416.2 h7" stroke="#777" stroke-width="0.6" fill="none"/><path d="M628,416.2 h7" stroke="#777" stroke-width="0.6" fill="none"/><path d="M640,416.2 h9" stroke="#777" stroke-width="0.6" fill="none"/><rect x="567.4" y="418" width="86.4" height="47.6" fill="#fcfcfc" /><rect x="570.2" y="437.8" width="30" height="1" fill="#55595d" /><rect x="567.4" y="441" width="86.4" height="0.5" fill="#dcdee0" /><rect x="598" y="417.6" width="88.8" height="70.2" fill="#000" opacity=".22"/><rect x="598.5" y="418" width="87.4" height="69" fill="#eff0f1" /><rect x="598.5" y="418" width="87.4" height="4" fill="#434c53" /><rect x="599.6" y="418.8" width="2" height="2.4" fill="#b01818" /><path d="M631,420 h21" stroke="#b8bec2" stroke-width="0.7" fill="none"/><rect x="682.6" y="418.9" width="2" height="2.2" fill="#eee" /><path d="M672,420 h7" stroke="#99a" stroke-width="0.5" fill="none"/><rect x="600.6" y="424.3" width="1.8" height="1.8" fill="#555" /><path d="M603.6,425.2 h6" stroke="#555" stroke-width="0.8" fill="none"/><rect x="600.6" y="427.92" width="1.8" height="1.8" fill="#333" /><path d="M603.6,428.82 h6" stroke="#555" stroke-width="0.8" fill="none"/><rect x="600.6" y="431.54" width="1.8" height="1.8" fill="#d88" /><path d="M603.6,432.44 h7" stroke="#555" stroke-width="0.8" fill="none"/><rect x="600.6" y="435.16" width="1.8" height="1.8" fill="#777" /><path d="M603.6,436.06 h7" stroke="#555" stroke-width="0.8" fill="none"/><rect x="600.6" y="438.78" width="1.8" height="1.8" fill="#e07020" /><path d="M603.6,439.68 h5" stroke="#555" stroke-width="0.8" fill="none"/><rect x="600.6" y="442.4" width="1.8" height="1.8" fill="#3a9a50" /><path d="M603.6,443.3 h5" stroke="#555" stroke-width="0.8" fill="none"/><rect x="600.6" y="446.02" width="1.8" height="1.8" fill="#2a8a50" /><path d="M603.6,446.92 h7" stroke="#555" stroke-width="0.8" fill="none"/><rect x="600.6" y="449.64" width="1.8" height="1.8" fill="#e08030" /><path d="M603.6,450.54 h7" stroke="#555" stroke-width="0.8" fill="none"/><rect x="600.6" y="453.26" width="1.8" height="1.8" fill="#5ab060" /><path d="M603.6,454.16 h6" stroke="#555" stroke-width="0.8" fill="none"/><rect x="613.7" y="425.6" width="69.6" height="49" fill="#fcfcfc" /><path d="M614.6,424.6 h5" stroke="#888" stroke-width="0.6" fill="none"/><path d="M614.8,428.7 h1" stroke="#aaa" stroke-width="0.6" fill="none"/><rect x="616.6" y="427.9" width="1.6" height="1.5" fill="#6d7175" /><path d="M619,428.7 h4" stroke="#44484c" stroke-width="0.8" fill="none"/><path d="M614.8,431.68 h1" stroke="#aaa" stroke-width="0.6" fill="none"/><rect x="616.6" y="430.88" width="1.6" height="1.5" fill="#6d7175" /><path d="M619,431.68 h3" stroke="#44484c" stroke-width="0.8" fill="none"/><path d="M614.8,434.66 h1" stroke="#aaa" stroke-width="0.6" fill="none"/><rect x="616.6" y="433.86" width="1.6" height="1.5" fill="#6d7175" /><path d="M619,434.66 h5" stroke="#44484c" stroke-width="0.8" fill="none"/><path d="M614.8,437.64 h1" stroke="#aaa" stroke-width="0.6" fill="none"/><rect x="616.6" y="436.84" width="1.6" height="1.5" fill="#6d7175" /><path d="M619,437.64 h6" stroke="#44484c" stroke-width="0.8" fill="none"/><path d="M614.8,440.62 h1" stroke="#aaa" stroke-width="0.6" fill="none"/><rect x="616.6" y="439.82" width="1.6" height="1.5" fill="#6d7175" /><path d="M619,440.62 h6" stroke="#44484c" stroke-width="0.8" fill="none"/><path d="M614.8,443.6 h1" stroke="#aaa" stroke-width="0.6" fill="none"/><rect x="616.6" y="442.8" width="1.6" height="1.5" fill="#6d7175" /><path d="M619,443.6 h5" stroke="#44484c" stroke-width="0.8" fill="none"/><path d="M617.4,446.58 h1" stroke="#aaa" stroke-width="0.6" fill="none"/><rect x="619.2" y="445.78" width="1.6" height="1.5" fill="#6d7175" /><path d="M621.6,446.58 h5" stroke="#44484c" stroke-width="0.8" fill="none"/><path d="M614.8,449.56 h1" stroke="#aaa" stroke-width="0.6" fill="none"/><rect x="616.6" y="448.76" width="1.6" height="1.5" fill="#6d7175" /><path d="M619,449.56 h3" stroke="#44484c" stroke-width="0.8" fill="none"/><path d="M614.8,452.54 h1" stroke="#aaa" stroke-width="0.6" fill="none"/><rect x="616.6" y="451.74" width="1.6" height="1.5" fill="#6d7175" /><path d="M619,452.54 h4" stroke="#44484c" stroke-width="0.8" fill="none"/><path d="M614.8,455.52 h1" stroke="#aaa" stroke-width="0.6" fill="none"/><rect x="616.6" y="454.72" width="1.6" height="1.5" fill="#6d7175" /><path d="M619,455.52 h4" stroke="#44484c" stroke-width="0.8" fill="none"/><path d="M614.8,458.5 h1" stroke="#aaa" stroke-width="0.6" fill="none"/><rect x="616.6" y="457.7" width="1.6" height="1.5" fill="#6d7175" /><path d="M619,458.5 h3" stroke="#44484c" stroke-width="0.8" fill="none"/><path d="M614.8,461.48 h1" stroke="#aaa" stroke-width="0.6" fill="none"/><rect x="616.6" y="460.68" width="1.6" height="1.5" fill="#6d7175" /><path d="M619,461.48 h4" stroke="#44484c" stroke-width="0.8" fill="none"/><path d="M614.8,464.46 h1" stroke="#aaa" stroke-width="0.6" fill="none"/><rect x="616.6" y="463.66" width="1.6" height="1.5" fill="#6d7175" /><path d="M619,464.46 h6" stroke="#44484c" stroke-width="0.8" fill="none"/><path d="M614.8,467.44 h1" stroke="#aaa" stroke-width="0.6" fill="none"/><rect x="616.6" y="466.64" width="1.6" height="1.5" fill="#6d7175" /><path d="M619,467.44 h5" stroke="#44484c" stroke-width="0.8" fill="none"/><path d="M614.8,470.42 h1" stroke="#aaa" stroke-width="0.6" fill="none"/><rect x="616.6" y="469.62" width="1.6" height="1.5" fill="#6d7175" /><path d="M619,470.42 h3" stroke="#44484c" stroke-width="0.8" fill="none"/><path d="M614.8,473.4 h1" stroke="#aaa" stroke-width="0.6" fill="none"/><rect x="616.6" y="472.6" width="1.6" height="1.5" fill="#6d7175" /><path d="M619,473.4 h3" stroke="#44484c" stroke-width="0.8" fill="none"/><rect x="682" y="427" width="1" height="28" fill="#6d7175" /><rect x="613.7" y="476.2" width="69.6" height="3.4" fill="#fcfcfc" stroke="#d2d4d6" stroke-width=".3"/><path d="M615,477.9 h20" stroke="#aaa" stroke-width="0.6" fill="none"/><rect x="679" y="477" width="1.8" height="1.8" fill="#555" /><rect x="644" y="481" width="14.6" height="4" fill="#f2f3f4" stroke="#c4c6c8" stroke-width=".4"/><path d="M648,483 h9" stroke="#666" stroke-width="0.8" fill="none"/><rect x="645.2" y="482.2" width="1.6" height="1.6" fill="#777" /><rect x="660.9" y="481" width="10.6" height="4" fill="#3daee9" rx=".4"/><path d="M665,483 h4" stroke="#e6f4fc" stroke-width="0.8" fill="none"/><rect x="673.4" y="481" width="10.6" height="4" fill="#f2f3f4" stroke="#c4c6c8" stroke-width=".4"/><path d="M676.6,483 h6" stroke="#666" stroke-width="0.8" fill="none"/><rect x="565.4" y="399.4" width="122.2" height="90.2" fill="none" stroke="#f4f4f4" stroke-width=".8"/></svg>
<svg class="th ns" style="left:463px;top:251px;width:74px;height:85px;background:#fcfcfc;" viewBox="732 402 74 85" preserveAspectRatio="none"><rect x="732" y="402" width="74" height="85" fill="#eff0f1" /><rect x="732" y="402" width="74" height="3.2" fill="#434c53" /><rect x="733" y="402.8" width="1.6" height="1.6" fill="#7ac020" /><rect x="802.6" y="402.8" width="2" height="1.8" fill="#eee" /><path d="M761,403.6 h15" stroke="#aab0b5" stroke-width="0.6" fill="none"/><path d="M733.6,406.4 h19" stroke="#777" stroke-width="0.7" fill="none"/><path d="M734,410.2 h40" stroke="#8d9194" stroke-width=".9" stroke-dasharray="1 1 7 3"/><rect x="732.6" y="413" width="11" height="2.6" fill="#fcfcfc" stroke="#c9cbcd" stroke-width=".3"/><rect x="733.4" y="413.6" width="1.4" height="1.4" fill="#2a9ae0" /><path d="M735.6,414.3 h7" stroke="#666" stroke-width="0.7" fill="none"/><rect x="744.8" y="413.4" width="1.4" height="1.6" fill="#3ab0e8" /><path d="M747,414.3 h9" stroke="#999" stroke-width="0.6" fill="none"/><defs><linearGradient id="cq1" x1="0" y1="0" x2="1" y2="0"><stop offset="0" stop-color="#2d7fb8"/><stop offset="1" stop-color="#55a8dc"/></linearGradient></defs><rect x="732.8" y="415.8" width="3.6" height="69.4" fill="url(#cq1)" /><rect x="733.6" y="417" width="2" height="1.6" fill="#cfe6f7" /><rect x="733.6" y="420.2" width="2" height="1.6" fill="#a8d0ec" /><rect x="733.6" y="423.4" width="2" height="1.6" fill="#a8d0ec" /><rect x="736.6" y="415.8" width="68.6" height="69.4" fill="#f6f7f7" /><rect x="738.6" y="417.6" width="5.4" height="2.2" fill="#fcfcfc" stroke="#c9cbcd" stroke-width=".3"/><rect x="745" y="417.6" width="2" height="2.2" fill="#fcfcfc" stroke="#c9cbcd" stroke-width=".3"/><path d="M790,418.6 h13" stroke="#777" stroke-width="0.6" fill="none"/><rect x="737.6" y="421.6" width="63" height="2.4" fill="#fcfcfc" stroke="#d2d4d6" stroke-width=".3"/><rect x="801.6" y="421.8" width="2.4" height="2" fill="#e4e5e6" /><rect x="737" y="425" width="67" height="2.4" fill="#e6e7e8" /><path d="M763,426.2 h14" stroke="#555" stroke-width="0.8" fill="none"/><rect x="737" y="428.2" width="67" height="8.7" fill="#fcfcfc" stroke="#dadcde" stroke-width=".3"/><rect x="737.6" y="429.2" width="4.6" height="4.6" fill="#3a6ad8" /><rect x="738.8" y="430.4" width="2.2" height="2.2" fill="#9ab8f0" /><path d="M743.4,429.8 h35.5198" stroke="#777a7d" stroke-width="0.6" fill="none"/><path d="M778.92,429.8 h15.2228" stroke="#4a9ad8" stroke-width="0.6" fill="none"/><path d="M743.4,431.4 h12.6403" stroke="#777a7d" stroke-width="0.6" fill="none"/><path d="M757,431.4 h17.5823" stroke="#4a9ad8" stroke-width="0.6" fill="none"/><path d="M777.271,435.2 h8" stroke="#3a7ab8" stroke-width="0.7" fill="none"/><path d="M791,435.2 h12" stroke="#8ec0e8" stroke-width="0.6" fill="none"/><rect x="737" y="437.35" width="67" height="8.7" fill="#fcfcfc" stroke="#dadcde" stroke-width=".3"/><rect x="737.6" y="438.35" width="4.6" height="4.6" fill="#3a6ad8" /><rect x="738.8" y="439.55" width="2.2" height="2.2" fill="#9ab8f0" /><path d="M743.4,438.95 h31.3742" stroke="#777a7d" stroke-width="0.6" fill="none"/><path d="M774.774,438.95 h13.4461" stroke="#4a9ad8" stroke-width="0.6" fill="none"/><path d="M743.4,440.55 h12.3101" stroke="#777a7d" stroke-width="0.6" fill="none"/><path d="M757,440.55 h18.6553" stroke="#4a9ad8" stroke-width="0.6" fill="none"/><path d="M778.218,444.35 h8" stroke="#3a7ab8" stroke-width="0.7" fill="none"/><path d="M791,444.35 h12" stroke="#8ec0e8" stroke-width="0.6" fill="none"/><rect x="737" y="446.5" width="67" height="8.7" fill="#fcfcfc" stroke="#dadcde" stroke-width=".3"/><rect x="737.6" y="447.5" width="4.6" height="4.6" fill="#2a5ac0" /><path d="M743.4,448.1 h36.0508" stroke="#777a7d" stroke-width="0.6" fill="none"/><path d="M779.451,448.1 h15.4504" stroke="#4a9ad8" stroke-width="0.6" fill="none"/><path d="M743.4,449.7 h20.7881" stroke="#777a7d" stroke-width="0.6" fill="none"/><path d="M757,449.7 h17.1413" stroke="#4a9ad8" stroke-width="0.6" fill="none"/><path d="M774.631,453.5 h8" stroke="#3a7ab8" stroke-width="0.7" fill="none"/><path d="M791,453.5 h12" stroke="#8ec0e8" stroke-width="0.6" fill="none"/><rect x="737" y="455.65" width="67" height="8.7" fill="#fcfcfc" stroke="#dadcde" stroke-width=".3"/><rect x="737.6" y="456.65" width="4.6" height="4.6" fill="#e8eef4" /><rect x="738.6" y="457.65" width="2.6" height="2.6" fill="#fff" stroke="#2a7ad0" stroke-width=".5"/><path d="M743.4,457.25 h32.4236" stroke="#777a7d" stroke-width="0.6" fill="none"/><path d="M775.824,457.25 h13.8958" stroke="#4a9ad8" stroke-width="0.6" fill="none"/><path d="M743.4,458.85 h20.0091" stroke="#777a7d" stroke-width="0.6" fill="none"/><path d="M757,458.85 h14.4462" stroke="#4a9ad8" stroke-width="0.6" fill="none"/><path d="M774.515,462.65 h8" stroke="#3a7ab8" stroke-width="0.7" fill="none"/><path d="M791,462.65 h12" stroke="#8ec0e8" stroke-width="0.6" fill="none"/><rect x="737" y="464.8" width="67" height="8.7" fill="#fcfcfc" stroke="#dadcde" stroke-width=".3"/><rect x="737.6" y="465.8" width="4.6" height="4.6" fill="#b89070" /><path d="M743.4,466.4 h37.8433" stroke="#777a7d" stroke-width="0.6" fill="none"/><path d="M781.243,466.4 h16.2186" stroke="#4a9ad8" stroke-width="0.6" fill="none"/><path d="M743.4,468 h12.9745" stroke="#777a7d" stroke-width="0.6" fill="none"/><path d="M757,468 h11.3597" stroke="#4a9ad8" stroke-width="0.6" fill="none"/><path d="M780.264,471.8 h8" stroke="#3a7ab8" stroke-width="0.7" fill="none"/><path d="M791,471.8 h12" stroke="#8ec0e8" stroke-width="0.6" fill="none"/><rect x="737" y="473.95" width="67" height="8.7" fill="#fcfcfc" stroke="#dadcde" stroke-width=".3"/><rect x="737.6" y="474.95" width="4.6" height="4.6" fill="#1a2a8a" /><path d="M743.4,475.55 h38.8134" stroke="#777a7d" stroke-width="0.6" fill="none"/><path d="M782.213,475.55 h16.6343" stroke="#4a9ad8" stroke-width="0.6" fill="none"/><path d="M743.4,477.15 h16.3616" stroke="#777a7d" stroke-width="0.6" fill="none"/><path d="M757,477.15 h16.2665" stroke="#4a9ad8" stroke-width="0.6" fill="none"/><path d="M779.592,480.95 h8" stroke="#3a7ab8" stroke-width="0.7" fill="none"/><path d="M791,480.95 h12" stroke="#8ec0e8" stroke-width="0.6" fill="none"/><rect x="743" y="482.6" width="59" height="2.6" fill="#7c1212" /><rect x="804.2" y="440.4" width="0.9" height="10" fill="#3daee9" /></svg>
<svg class="th ns" style="left:577px;top:264px;width:132px;height:73px;background:#fcfcfc;" viewBox="846 415 132 73" preserveAspectRatio="none"><rect x="846" y="415" width="132" height="73" fill="#eff0f1" /><rect x="846" y="415" width="132" height="1.8" fill="#434c53" /><rect x="846.8" y="415.3" width="1" height="1" fill="#e8a030" /><rect x="975.8" y="415.3" width="1.2" height="1.2" fill="#eee" /><path d="M908,415.9 h5" stroke="#9aa0a5" stroke-width="0.5" fill="none"/><rect x="846" y="416.8" width="132" height="2.8" fill="#f6f7f7" /><rect x="847" y="417.4" width="32" height="1.6" fill="#fcfcfc" stroke="#a9d8f5" stroke-width=".3"/><rect x="893" y="418" width="22" height="0.8" fill="#3daee9" /><path d="M917,418.3 h9" stroke="#b5b8bb" stroke-width="0.5" fill="none"/><path d="M932,418.3 h12" stroke="#999" stroke-width="0.5" fill="none"/><rect x="846.4" y="420.4" width="5.8" height="8.8" fill="#3daee9" /><path d="M847,427.4 h4.6" stroke="#cfe6f7" stroke-width="0.5" fill="none"/><rect x="853.43" y="420.9" width="3.6" height="3.6" fill="#4a4e52" opacity=".85"/><path d="M852.83,426.4 h4.8" stroke="#b9bcbf" stroke-width="0.5" fill="none"/><path d="M853.63,427.6 h3.2" stroke="#c9ccce" stroke-width="0.5" fill="none"/><circle cx="861.46" cy="422.7" r="1.7" fill="none" stroke="#4a4e52" stroke-width=".55"/><path d="M859.06,426.4 h4.8" stroke="#b9bcbf" stroke-width="0.5" fill="none"/><rect x="865.89" y="420.9" width="3.6" height="3.6" fill="#4a4e52" opacity=".85"/><path d="M865.29,426.4 h4.8" stroke="#b9bcbf" stroke-width="0.5" fill="none"/><path d="M872.12,423.7 l1.800,-2.400 l1.800,2.400" stroke="#4a4e52" stroke-width=".6" fill="none"/><path d="M871.52,426.4 h4.8" stroke="#b9bcbf" stroke-width="0.5" fill="none"/><path d="M878.35,421.1 h3.6 v1.400 h-3.6z M878.35,423.1 h3.6" stroke="#4a4e52" stroke-width=".55" fill="none"/><path d="M877.75,426.4 h4.8" stroke="#b9bcbf" stroke-width="0.5" fill="none"/><path d="M884.58,423.7 l1.800,-2.400 l1.800,2.400" stroke="#4a4e52" stroke-width=".6" fill="none"/><path d="M883.98,426.4 h4.8" stroke="#b9bcbf" stroke-width="0.5" fill="none"/><path d="M884.78,427.6 h3.2" stroke="#c9ccce" stroke-width="0.5" fill="none"/><path d="M890.81,421.1 h3.6 v1.400 h-3.6z M890.81,423.1 h3.6" stroke="#4a4e52" stroke-width=".55" fill="none"/><path d="M890.21,426.4 h4.8" stroke="#b9bcbf" stroke-width="0.5" fill="none"/><path d="M897.04,421.1 h3.6 v1.400 h-3.6z M897.04,423.1 h3.6" stroke="#4a4e52" stroke-width=".55" fill="none"/><path d="M896.44,426.4 h4.8" stroke="#b9bcbf" stroke-width="0.5" fill="none"/><path d="M903.27,423.7 l1.800,-2.400 l1.800,2.400" stroke="#4a4e52" stroke-width=".6" fill="none"/><path d="M902.67,426.4 h4.8" stroke="#b9bcbf" stroke-width="0.5" fill="none"/><path d="M903.47,427.6 h3.2" stroke="#c9ccce" stroke-width="0.5" fill="none"/><path d="M909.5,421.1 h3.6 v1.400 h-3.6z M909.5,423.1 h3.6" stroke="#4a4e52" stroke-width=".55" fill="none"/><path d="M908.9,426.4 h4.8" stroke="#b9bcbf" stroke-width="0.5" fill="none"/><rect x="915.93" y="420.7" width="3.2" height="4" fill="none" stroke="#4a4e52" stroke-width=".55"/><path d="M915.13,426.4 h4.8" stroke="#b9bcbf" stroke-width="0.5" fill="none"/><path d="M915.93,427.6 h3.2" stroke="#c9ccce" stroke-width="0.5" fill="none"/><path d="M921.96,421.1 h3.6 v1.400 h-3.6z M921.96,423.1 h3.6" stroke="#4a4e52" stroke-width=".55" fill="none"/><path d="M921.36,426.4 h4.8" stroke="#b9bcbf" stroke-width="0.5" fill="none"/><rect x="928.39" y="420.7" width="3.2" height="4" fill="none" stroke="#4a4e52" stroke-width=".55"/><path d="M927.59,426.4 h4.8" stroke="#b9bcbf" stroke-width="0.5" fill="none"/><circle cx="936.22" cy="422.7" r="1.7" fill="none" stroke="#4a4e52" stroke-width=".55"/><path d="M933.82,426.4 h4.8" stroke="#b9bcbf" stroke-width="0.5" fill="none"/><path d="M934.62,427.6 h3.2" stroke="#c9ccce" stroke-width="0.5" fill="none"/><rect x="847.4" y="430.36" width="3.2" height="4" fill="none" stroke="#4a4e52" stroke-width=".55"/><path d="M846.6,436.06 h4.8" stroke="#b9bcbf" stroke-width="0.5" fill="none"/><path d="M853.43,430.76 h3.6 v1.400 h-3.6z M853.43,432.76 h3.6" stroke="#4a4e52" stroke-width=".55" fill="none"/><path d="M852.83,436.06 h4.8" stroke="#b9bcbf" stroke-width="0.5" fill="none"/><path d="M853.63,437.26 h3.2" stroke="#c9ccce" stroke-width="0.5" fill="none"/><rect x="859.66" y="430.56" width="3.6" height="3.6" fill="#4a4e52" opacity=".85"/><path d="M859.06,436.06 h4.8" stroke="#b9bcbf" stroke-width="0.5" fill="none"/><path d="M859.86,437.26 h3.2" stroke="#c9ccce" stroke-width="0.5" fill="none"/><path d="M865.89,433.36 l1.800,-2.400 l1.800,2.400" stroke="#4a4e52" stroke-width=".6" fill="none"/><path d="M865.29,436.06 h4.8" stroke="#b9bcbf" stroke-width="0.5" fill="none"/><path d="M866.09,437.26 h3.2" stroke="#c9ccce" stroke-width="0.5" fill="none"/><path d="M872.12,430.76 h3.6 v1.400 h-3.6z M872.12,432.76 h3.6" stroke="#4a4e52" stroke-width=".55" fill="none"/><path d="M871.52,436.06 h4.8" stroke="#b9bcbf" stroke-width="0.5" fill="none"/><rect x="878.35" y="430.56" width="3.6" height="3.6" fill="#e06a6a" opacity=".85"/><path d="M877.75,436.06 h4.8" stroke="#b9bcbf" stroke-width="0.5" fill="none"/><circle cx="886.38" cy="432.36" r="1.7" fill="none" stroke="#4a4e52" stroke-width=".55"/><path d="M883.98,436.06 h4.8" stroke="#b9bcbf" stroke-width="0.5" fill="none"/><path d="M884.78,437.26 h3.2" stroke="#c9ccce" stroke-width="0.5" fill="none"/><rect x="890.81" y="430.56" width="3.6" height="3.6" fill="#4a4e52" opacity=".85"/><path d="M890.21,436.06 h4.8" stroke="#b9bcbf" stroke-width="0.5" fill="none"/><path d="M891.01,437.26 h3.2" stroke="#c9ccce" stroke-width="0.5" fill="none"/><rect x="897.24" y="430.36" width="3.2" height="4" fill="none" stroke="#4a4e52" stroke-width=".55"/><path d="M896.44,436.06 h4.8" stroke="#b9bcbf" stroke-width="0.5" fill="none"/><path d="M897.24,437.26 h3.2" stroke="#c9ccce" stroke-width="0.5" fill="none"/><rect x="903.27" y="430.56" width="3.6" height="3.6" fill="#4a4e52" opacity=".85"/><path d="M902.67,436.06 h4.8" stroke="#b9bcbf" stroke-width="0.5" fill="none"/><path d="M903.47,437.26 h3.2" stroke="#c9ccce" stroke-width="0.5" fill="none"/><rect x="909.7" y="430.36" width="3.2" height="4" fill="none" stroke="#4a4e52" stroke-width=".55"/><path d="M908.9,436.06 h4.8" stroke="#b9bcbf" stroke-width="0.5" fill="none"/><circle cx="917.53" cy="432.36" r="1.7" fill="none" stroke="#4a4e52" stroke-width=".55"/><path d="M915.13,436.06 h4.8" stroke="#b9bcbf" stroke-width="0.5" fill="none"/><path d="M921.96,430.76 h3.6 v1.400 h-3.6z M921.96,432.76 h3.6" stroke="#4a4e52" stroke-width=".55" fill="none"/><path d="M921.36,436.06 h4.8" stroke="#b9bcbf" stroke-width="0.5" fill="none"/><path d="M922.16,437.26 h3.2" stroke="#c9ccce" stroke-width="0.5" fill="none"/><circle cx="929.99" cy="432.36" r="1.7" fill="none" stroke="#4a4e52" stroke-width=".55"/><path d="M927.59,436.06 h4.8" stroke="#b9bcbf" stroke-width="0.5" fill="none"/><circle cx="936.22" cy="432.36" r="2" fill="#3b9cf0"/><path d="M933.82,436.06 h4.8" stroke="#b9bcbf" stroke-width="0.5" fill="none"/><rect x="847" y="440.22" width="4" height="3.6" fill="#2a8fe6" /><path d="M846.6,445.72 h4.8" stroke="#b9bcbf" stroke-width="0.5" fill="none"/><path d="M853.43,440.42 h3.6 v1.400 h-3.6z M853.43,442.42 h3.6" stroke="#4a4e52" stroke-width=".55" fill="none"/><path d="M852.83,445.72 h4.8" stroke="#b9bcbf" stroke-width="0.5" fill="none"/><circle cx="861.46" cy="442.02" r="1.7" fill="none" stroke="#4a4e52" stroke-width=".55"/><path d="M859.06,445.72 h4.8" stroke="#b9bcbf" stroke-width="0.5" fill="none"/><rect x="866.09" y="440.02" width="3.2" height="4" fill="none" stroke="#4a4e52" stroke-width=".55"/><path d="M865.29,445.72 h4.8" stroke="#b9bcbf" stroke-width="0.5" fill="none"/><path d="M866.09,446.92 h3.2" stroke="#c9ccce" stroke-width="0.5" fill="none"/><path d="M872.12,440.42 h3.6 v1.400 h-3.6z M872.12,442.42 h3.6" stroke="#4a4e52" stroke-width=".55" fill="none"/><path d="M871.52,445.72 h4.8" stroke="#b9bcbf" stroke-width="0.5" fill="none"/><rect x="878.35" y="440.22" width="3.6" height="3.6" fill="#4a4e52" opacity=".85"/><path d="M877.75,445.72 h4.8" stroke="#b9bcbf" stroke-width="0.5" fill="none"/><path d="M878.55,446.92 h3.2" stroke="#c9ccce" stroke-width="0.5" fill="none"/><circle cx="886.38" cy="442.02" r="1.7" fill="none" stroke="#4a4e52" stroke-width=".55"/><path d="M883.98,445.72 h4.8" stroke="#b9bcbf" stroke-width="0.5" fill="none"/><rect x="891.01" y="440.02" width="3.2" height="4" fill="none" stroke="#4a4e52" stroke-width=".55"/><path d="M890.21,445.72 h4.8" stroke="#b9bcbf" stroke-width="0.5" fill="none"/><rect x="897.04" y="440.22" width="3.6" height="3.6" fill="#4a4e52" opacity=".85"/><path d="M896.44,445.72 h4.8" stroke="#b9bcbf" stroke-width="0.5" fill="none"/><path d="M897.24,446.92 h3.2" stroke="#c9ccce" stroke-width="0.5" fill="none"/><rect x="903.27" y="440.22" width="3.6" height="3.6" fill="#4a4e52" opacity=".85"/><path d="M902.67,445.72 h4.8" stroke="#b9bcbf" stroke-width="0.5" fill="none"/><path d="M903.47,446.92 h3.2" stroke="#c9ccce" stroke-width="0.5" fill="none"/><path d="M909.5,443.02 l1.800,-2.400 l1.800,2.400" stroke="#4a4e52" stroke-width=".6" fill="none"/><path d="M908.9,445.72 h4.8" stroke="#b9bcbf" stroke-width="0.5" fill="none"/><path d="M909.7,446.92 h3.2" stroke="#c9ccce" stroke-width="0.5" fill="none"/><path d="M915.73,443.02 l1.800,-2.400 l1.800,2.400" stroke="#4a4e52" stroke-width=".6" fill="none"/><path d="M915.13,445.72 h4.8" stroke="#b9bcbf" stroke-width="0.5" fill="none"/><rect x="922.16" y="440.02" width="3.2" height="4" fill="none" stroke="#4a4e52" stroke-width=".55"/><path d="M921.36,445.72 h4.8" stroke="#b9bcbf" stroke-width="0.5" fill="none"/><path d="M922.16,446.92 h3.2" stroke="#c9ccce" stroke-width="0.5" fill="none"/><path d="M928.19,443.02 l1.800,-2.400 l1.800,2.400" stroke="#4a4e52" stroke-width=".6" fill="none"/><path d="M927.59,445.72 h4.8" stroke="#b9bcbf" stroke-width="0.5" fill="none"/><rect x="934.62" y="440.02" width="3.2" height="4" fill="none" stroke="#4a4e52" stroke-width=".55"/><path d="M933.82,445.72 h4.8" stroke="#b9bcbf" stroke-width="0.5" fill="none"/><path d="M934.62,446.92 h3.2" stroke="#c9ccce" stroke-width="0.5" fill="none"/><rect x="847.8" y="449.68" width="2.4" height="4" fill="#d22a2a" /><path d="M846.6,455.38 h4.8" stroke="#b9bcbf" stroke-width="0.5" fill="none"/><path d="M847.4,456.58 h3.2" stroke="#c9ccce" stroke-width="0.5" fill="none"/><circle cx="855.23" cy="451.68" r="1.7" fill="none" stroke="#4a4e52" stroke-width=".55"/><path d="M852.83,455.38 h4.8" stroke="#b9bcbf" stroke-width="0.5" fill="none"/><path d="M853.63,456.58 h3.2" stroke="#c9ccce" stroke-width="0.5" fill="none"/><circle cx="861.46" cy="451.68" r="1.7" fill="none" stroke="#4a4e52" stroke-width=".55"/><path d="M859.06,455.38 h4.8" stroke="#b9bcbf" stroke-width="0.5" fill="none"/><circle cx="867.69" cy="451.68" r="1.7" fill="none" stroke="#4a4e52" stroke-width=".55"/><path d="M865.29,455.38 h4.8" stroke="#b9bcbf" stroke-width="0.5" fill="none"/><path d="M866.09,456.58 h3.2" stroke="#c9ccce" stroke-width="0.5" fill="none"/><path d="M872.12,452.68 l1.800,-2.400 l1.800,2.400" stroke="#4a4e52" stroke-width=".6" fill="none"/><path d="M871.52,455.38 h4.8" stroke="#b9bcbf" stroke-width="0.5" fill="none"/><path d="M872.32,456.58 h3.2" stroke="#c9ccce" stroke-width="0.5" fill="none"/><rect x="878.35" y="449.88" width="3.6" height="3.6" fill="#4a4e52" opacity=".85"/><path d="M877.75,455.38 h4.8" stroke="#b9bcbf" stroke-width="0.5" fill="none"/><circle cx="886.38" cy="451.68" r="1.7" fill="none" stroke="#e06a6a" stroke-width=".55"/><path d="M883.98,455.38 h4.8" stroke="#b9bcbf" stroke-width="0.5" fill="none"/><path d="M884.78,456.58 h3.2" stroke="#c9ccce" stroke-width="0.5" fill="none"/><path d="M890.81,450.08 h3.6 v1.400 h-3.6z M890.81,452.08 h3.6" stroke="#e06a6a" stroke-width=".55" fill="none"/><path d="M890.21,455.38 h4.8" stroke="#b9bcbf" stroke-width="0.5" fill="none"/><path d="M891.01,456.58 h3.2" stroke="#c9ccce" stroke-width="0.5" fill="none"/><rect x="897.24" y="449.68" width="3.2" height="4" fill="none" stroke="#4a4e52" stroke-width=".55"/><path d="M896.44,455.38 h4.8" stroke="#b9bcbf" stroke-width="0.5" fill="none"/><path d="M897.24,456.58 h3.2" stroke="#c9ccce" stroke-width="0.5" fill="none"/><path d="M903.27,452.68 l1.800,-2.400 l1.800,2.400" stroke="#4a4e52" stroke-width=".6" fill="none"/><path d="M902.67,455.38 h4.8" stroke="#b9bcbf" stroke-width="0.5" fill="none"/><path d="M903.47,456.58 h3.2" stroke="#c9ccce" stroke-width="0.5" fill="none"/><circle cx="911.3" cy="451.68" r="1.7" fill="none" stroke="#4a4e52" stroke-width=".55"/><path d="M908.9,455.38 h4.8" stroke="#b9bcbf" stroke-width="0.5" fill="none"/><path d="M909.7,456.58 h3.2" stroke="#c9ccce" stroke-width="0.5" fill="none"/><path d="M915.73,450.08 h3.6 v1.400 h-3.6z M915.73,452.08 h3.6" stroke="#4a4e52" stroke-width=".55" fill="none"/><path d="M915.13,455.38 h4.8" stroke="#b9bcbf" stroke-width="0.5" fill="none"/><path d="M915.93,456.58 h3.2" stroke="#c9ccce" stroke-width="0.5" fill="none"/><path d="M921.96,450.08 h3.6 v1.400 h-3.6z M921.96,452.08 h3.6" stroke="#4a4e52" stroke-width=".55" fill="none"/><path d="M921.36,455.38 h4.8" stroke="#b9bcbf" stroke-width="0.5" fill="none"/><path d="M922.16,456.58 h3.2" stroke="#c9ccce" stroke-width="0.5" fill="none"/><circle cx="929.99" cy="451.68" r="1.7" fill="none" stroke="#4a4e52" stroke-width=".55"/><path d="M927.59,455.38 h4.8" stroke="#b9bcbf" stroke-width="0.5" fill="none"/><path d="M934.42,450.08 h3.6 v1.400 h-3.6z M934.42,452.08 h3.6" stroke="#4a4e52" stroke-width=".55" fill="none"/><path d="M933.82,455.38 h4.8" stroke="#b9bcbf" stroke-width="0.5" fill="none"/><path d="M934.62,456.58 h3.2" stroke="#c9ccce" stroke-width="0.5" fill="none"/><rect x="847.4" y="459.34" width="3.2" height="4" fill="none" stroke="#4a4e52" stroke-width=".55"/><path d="M846.6,465.04 h4.8" stroke="#b9bcbf" stroke-width="0.5" fill="none"/><path d="M847.4,466.24 h3.2" stroke="#c9ccce" stroke-width="0.5" fill="none"/><rect x="853.43" y="459.54" width="3.6" height="3.6" fill="#4a4e52" opacity=".85"/><path d="M852.83,465.04 h4.8" stroke="#b9bcbf" stroke-width="0.5" fill="none"/><path d="M853.63,466.24 h3.2" stroke="#c9ccce" stroke-width="0.5" fill="none"/><path d="M859.66,459.74 h3.6 v1.400 h-3.6z M859.66,461.74 h3.6" stroke="#4a4e52" stroke-width=".55" fill="none"/><path d="M859.06,465.04 h4.8" stroke="#b9bcbf" stroke-width="0.5" fill="none"/><rect x="866.09" y="459.34" width="3.2" height="4" fill="none" stroke="#4a4e52" stroke-width=".55"/><path d="M865.29,465.04 h4.8" stroke="#b9bcbf" stroke-width="0.5" fill="none"/><path d="M866.09,466.24 h3.2" stroke="#c9ccce" stroke-width="0.5" fill="none"/><path d="M872.12,459.74 h3.6 v1.400 h-3.6z M872.12,461.74 h3.6" stroke="#4a4e52" stroke-width=".55" fill="none"/><path d="M871.52,465.04 h4.8" stroke="#b9bcbf" stroke-width="0.5" fill="none"/><path d="M878.35,459.74 h3.6 v1.400 h-3.6z M878.35,461.74 h3.6" stroke="#4a4e52" stroke-width=".55" fill="none"/><path d="M877.75,465.04 h4.8" stroke="#b9bcbf" stroke-width="0.5" fill="none"/><path d="M878.55,466.24 h3.2" stroke="#c9ccce" stroke-width="0.5" fill="none"/><rect x="884.78" y="459.34" width="3.2" height="4" fill="none" stroke="#4a4e52" stroke-width=".55"/><path d="M883.98,465.04 h4.8" stroke="#b9bcbf" stroke-width="0.5" fill="none"/><path d="M884.78,466.24 h3.2" stroke="#c9ccce" stroke-width="0.5" fill="none"/><path d="M890.81,462.34 l1.800,-2.400 l1.800,2.400" stroke="#4a4e52" stroke-width=".6" fill="none"/><path d="M890.21,465.04 h4.8" stroke="#b9bcbf" stroke-width="0.5" fill="none"/><path d="M891.01,466.24 h3.2" stroke="#c9ccce" stroke-width="0.5" fill="none"/><circle cx="898.84" cy="461.34" r="1.7" fill="none" stroke="#4a4e52" stroke-width=".55"/><path d="M896.44,465.04 h4.8" stroke="#b9bcbf" stroke-width="0.5" fill="none"/><path d="M897.24,466.24 h3.2" stroke="#c9ccce" stroke-width="0.5" fill="none"/><circle cx="905.07" cy="461.34" r="1.7" fill="none" stroke="#4a4e52" stroke-width=".55"/><path d="M902.67,465.04 h4.8" stroke="#b9bcbf" stroke-width="0.5" fill="none"/><path d="M903.47,466.24 h3.2" stroke="#c9ccce" stroke-width="0.5" fill="none"/><circle cx="911.3" cy="461.34" r="1.7" fill="#e0a020"/><path d="M911.3,461.34 l1.700,0 a1.7,1.7 0 0 0 -1.700,-1.700z" fill="#c030a0"/><path d="M911.3,461.34 l-1.7,0 a1.7,1.7 0 0 0 1.700,1.700z" fill="#30a040"/><path d="M908.9,465.04 h4.8" stroke="#b9bcbf" stroke-width="0.5" fill="none"/><path d="M909.7,466.24 h3.2" stroke="#c9ccce" stroke-width="0.5" fill="none"/><rect x="915.93" y="459.34" width="3.2" height="4" fill="none" stroke="#4a4e52" stroke-width=".55"/><path d="M915.13,465.04 h4.8" stroke="#b9bcbf" stroke-width="0.5" fill="none"/><path d="M921.96,459.74 h3.6 v1.400 h-3.6z M921.96,461.74 h3.6" stroke="#4a4e52" stroke-width=".55" fill="none"/><path d="M921.36,465.04 h4.8" stroke="#b9bcbf" stroke-width="0.5" fill="none"/><circle cx="929.99" cy="461.34" r="1.7" fill="none" stroke="#4a4e52" stroke-width=".55"/><path d="M927.59,465.04 h4.8" stroke="#b9bcbf" stroke-width="0.5" fill="none"/><path d="M934.42,459.74 h3.6 v1.400 h-3.6z M934.42,461.74 h3.6" stroke="#4a4e52" stroke-width=".55" fill="none"/><path d="M933.82,465.04 h4.8" stroke="#b9bcbf" stroke-width="0.5" fill="none"/><path d="M934.62,466.24 h3.2" stroke="#c9ccce" stroke-width="0.5" fill="none"/><path d="M847.2,472 l1.800,-2.400 l1.800,2.400" stroke="#4a4e52" stroke-width=".6" fill="none"/><path d="M846.6,474.7 h4.8" stroke="#b9bcbf" stroke-width="0.5" fill="none"/><path d="M853.43,472 l1.800,-2.400 l1.800,2.400" stroke="#4a4e52" stroke-width=".6" fill="none"/><path d="M852.83,474.7 h4.8" stroke="#b9bcbf" stroke-width="0.5" fill="none"/><circle cx="861.46" cy="471" r="1.7" fill="#d83030"/><path d="M859.06,474.7 h4.8" stroke="#b9bcbf" stroke-width="0.5" fill="none"/><path d="M859.86,475.9 h3.2" stroke="#c9ccce" stroke-width="0.5" fill="none"/><rect x="866.09" y="469" width="3.2" height="4" fill="none" stroke="#4a4e52" stroke-width=".55"/><path d="M865.29,474.7 h4.8" stroke="#b9bcbf" stroke-width="0.5" fill="none"/><path d="M866.09,475.9 h3.2" stroke="#c9ccce" stroke-width="0.5" fill="none"/><rect x="872.12" y="469.2" width="3.6" height="3.6" fill="#4a4e52" opacity=".85"/><path d="M871.52,474.7 h4.8" stroke="#b9bcbf" stroke-width="0.5" fill="none"/><path d="M872.32,475.9 h3.2" stroke="#c9ccce" stroke-width="0.5" fill="none"/><path d="M878.35,469.4 h3.6 v1.400 h-3.6z M878.35,471.4 h3.6" stroke="#4a4e52" stroke-width=".55" fill="none"/><path d="M877.75,474.7 h4.8" stroke="#b9bcbf" stroke-width="0.5" fill="none"/><path d="M878.55,475.9 h3.2" stroke="#c9ccce" stroke-width="0.5" fill="none"/><path d="M884.58,469.4 h3.6 v1.400 h-3.6z M884.58,471.4 h3.6" stroke="#4a4e52" stroke-width=".55" fill="none"/><path d="M883.98,474.7 h4.8" stroke="#b9bcbf" stroke-width="0.5" fill="none"/><path d="M890.81,469.4 h3.6 v1.400 h-3.6z M890.81,471.4 h3.6" stroke="#4a4e52" stroke-width=".55" fill="none"/><path d="M890.21,474.7 h4.8" stroke="#b9bcbf" stroke-width="0.5" fill="none"/><path d="M897.04,469.4 h3.6 v1.400 h-3.6z M897.04,471.4 h3.6" stroke="#4a4e52" stroke-width=".55" fill="none"/><path d="M896.44,474.7 h4.8" stroke="#b9bcbf" stroke-width="0.5" fill="none"/><rect x="903.47" y="469" width="3.2" height="4" fill="none" stroke="#4a4e52" stroke-width=".55"/><path d="M902.67,474.7 h4.8" stroke="#b9bcbf" stroke-width="0.5" fill="none"/><rect x="909.7" y="469" width="3.2" height="4" fill="none" stroke="#4a4e52" stroke-width=".55"/><path d="M908.9,474.7 h4.8" stroke="#b9bcbf" stroke-width="0.5" fill="none"/><path d="M909.7,475.9 h3.2" stroke="#c9ccce" stroke-width="0.5" fill="none"/><path d="M915.73,472 l1.800,-2.400 l1.800,2.400" stroke="#4a4e52" stroke-width=".6" fill="none"/><path d="M915.13,474.7 h4.8" stroke="#b9bcbf" stroke-width="0.5" fill="none"/><circle cx="923.76" cy="471" r="1.7" fill="none" stroke="#4a4e52" stroke-width=".55"/><path d="M921.36,474.7 h4.8" stroke="#b9bcbf" stroke-width="0.5" fill="none"/><rect x="928.19" y="469.2" width="3.6" height="3.6" fill="#4a4e52" opacity=".85"/><path d="M927.59,474.7 h4.8" stroke="#b9bcbf" stroke-width="0.5" fill="none"/><path d="M928.39,475.9 h3.2" stroke="#c9ccce" stroke-width="0.5" fill="none"/><rect x="934.62" y="469" width="3.2" height="4" fill="none" stroke="#4a4e52" stroke-width=".55"/><path d="M933.82,474.7 h4.8" stroke="#b9bcbf" stroke-width="0.5" fill="none"/><circle cx="849" cy="480.66" r="1.7" fill="none" stroke="#4a4e52" stroke-width=".55"/><path d="M846.6,484.36 h4.8" stroke="#b9bcbf" stroke-width="0.5" fill="none"/><circle cx="855.23" cy="480.66" r="1.7" fill="none" stroke="#4a4e52" stroke-width=".55"/><path d="M852.83,484.36 h4.8" stroke="#b9bcbf" stroke-width="0.5" fill="none"/><path d="M853.63,485.56 h3.2" stroke="#c9ccce" stroke-width="0.5" fill="none"/><rect x="859.66" y="478.86" width="3.6" height="3.6" fill="#4a4e52" opacity=".85"/><path d="M859.06,484.36 h4.8" stroke="#b9bcbf" stroke-width="0.5" fill="none"/><rect x="866.09" y="478.66" width="3.2" height="4" fill="none" stroke="#4a4e52" stroke-width=".55"/><path d="M865.29,484.36 h4.8" stroke="#b9bcbf" stroke-width="0.5" fill="none"/><path d="M872.12,479.06 h3.6 v1.400 h-3.6z M872.12,481.06 h3.6" stroke="#4a4e52" stroke-width=".55" fill="none"/><path d="M871.52,484.36 h4.8" stroke="#b9bcbf" stroke-width="0.5" fill="none"/><path d="M878.35,479.06 h3.6 v1.400 h-3.6z M878.35,481.06 h3.6" stroke="#4a4e52" stroke-width=".55" fill="none"/><path d="M877.75,484.36 h4.8" stroke="#b9bcbf" stroke-width="0.5" fill="none"/><path d="M878.55,485.56 h3.2" stroke="#c9ccce" stroke-width="0.5" fill="none"/><rect x="884.58" y="478.86" width="3.6" height="3.6" fill="#4a4e52" opacity=".85"/><path d="M883.98,484.36 h4.8" stroke="#b9bcbf" stroke-width="0.5" fill="none"/><rect x="891.01" y="478.66" width="3.2" height="4" fill="none" stroke="#4a4e52" stroke-width=".55"/><path d="M890.21,484.36 h4.8" stroke="#b9bcbf" stroke-width="0.5" fill="none"/><path d="M891.01,485.56 h3.2" stroke="#c9ccce" stroke-width="0.5" fill="none"/><rect x="897.24" y="478.66" width="3.2" height="4" fill="none" stroke="#4a4e52" stroke-width=".55"/><path d="M896.44,484.36 h4.8" stroke="#b9bcbf" stroke-width="0.5" fill="none"/><circle cx="905.07" cy="480.66" r="1.7" fill="none" stroke="#4a4e52" stroke-width=".55"/><path d="M902.67,484.36 h4.8" stroke="#b9bcbf" stroke-width="0.5" fill="none"/><path d="M903.47,485.56 h3.2" stroke="#c9ccce" stroke-width="0.5" fill="none"/><path d="M909.5,481.66 l1.800,-2.400 l1.800,2.400" stroke="#4a4e52" stroke-width=".6" fill="none"/><path d="M908.9,484.36 h4.8" stroke="#b9bcbf" stroke-width="0.5" fill="none"/><path d="M909.7,485.56 h3.2" stroke="#c9ccce" stroke-width="0.5" fill="none"/><rect x="915.93" y="478.66" width="3.2" height="4" fill="none" stroke="#4a4e52" stroke-width=".55"/><path d="M915.13,484.36 h4.8" stroke="#b9bcbf" stroke-width="0.5" fill="none"/><path d="M915.93,485.56 h3.2" stroke="#c9ccce" stroke-width="0.5" fill="none"/><rect x="922.16" y="478.66" width="3.2" height="4" fill="none" stroke="#4a4e52" stroke-width=".55"/><path d="M921.36,484.36 h4.8" stroke="#b9bcbf" stroke-width="0.5" fill="none"/><path d="M922.16,485.56 h3.2" stroke="#c9ccce" stroke-width="0.5" fill="none"/><path d="M928.19,479.06 h3.6 v1.400 h-3.6z M928.19,481.06 h3.6" stroke="#4a4e52" stroke-width=".55" fill="none"/><path d="M927.59,484.36 h4.8" stroke="#b9bcbf" stroke-width="0.5" fill="none"/><rect x="934.62" y="478.66" width="3.2" height="4" fill="none" stroke="#4a4e52" stroke-width=".55"/><path d="M933.82,484.36 h4.8" stroke="#b9bcbf" stroke-width="0.5" fill="none"/><rect x="944" y="420" width="0.5" height="68" fill="#8fc4e4" /><rect x="942.6" y="420" width="1.2" height="66" fill="#e0e2e4" /><path d="M947.6,425 h6" stroke="#999" stroke-width="0.6" fill="none"/><rect x="955.5" y="428.6" width="4.4" height="0.9" fill="#f0b030" /><rect x="961" y="427.6" width="1.8" height="2.2" fill="#f0a030" /><ellipse cx="960.4" cy="443.600" rx="11.4" ry="9.6" fill="#dcc6ec"/><path d="M952.8,440 q1.600,-8 8,-8 q7,0 8.400,8 q3.400,8 2.600,13 q-2,1.600 -3.400,-.6 q-.8,2.600 -3.400,1.800 q-1.200,-1 -1,-3 q-1.400,2.400 -3.200,1.400 q-1.600,2 -3.800,.4 q-1,1.600 -3.400,.4 q-2,-1.200 -3.400,.6 q-1.800,-1 -1,-3.400 q3.600,-5 3.600,-11z" fill="#f2b23c"/><path d="M954.6,436 q2,-4.200 6.200,-4.200 q4.200,.2 5.800,4 q-.4,3.600 -3.600,4.600 q-3.800,.6 -5.800,-1 q-2,-1.200 -2.600,-3.400z" fill="#b0509c"/><circle cx="957.8" cy="436.6" r="1" fill="#8a3480"/><circle cx="961.6" cy="435" r="1.1" fill="#8a3480"/><circle cx="960" cy="438.600" r="1" fill="#8a3480"/><circle cx="964" cy="437.6" r=".9" fill="#8a3480"/><path d="M949.2,441.400 l2.600,-1.400 l-.4,2.800z M971.6,441.400 l-2.600,-1.400 l.4,2.800z" fill="#2a2a4a"/><path d="M947.6,460.4 h11" stroke="#777" stroke-width="0.6" fill="none"/><path d="M947.6,462.2 h13" stroke="#888" stroke-width="0.6" fill="none"/><path d="M947.6,464 h8" stroke="#888" stroke-width="0.6" fill="none"/><path d="M947.6,465.8 h7" stroke="#888" stroke-width="0.6" fill="none"/><path d="M947.6,467.6 h3" stroke="#888" stroke-width="0.6" fill="none"/><rect x="947.4" y="477.6" width="1.4" height="1.4" fill="none" stroke="#999" stroke-width=".3"/><path d="M949.8,478.4 h17" stroke="#8d9194" stroke-width="0.6" fill="none"/><rect x="947.4" y="480.8" width="1.4" height="1.4" fill="none" stroke="#999" stroke-width=".3"/><path d="M949.8,481.6 h19" stroke="#8d9194" stroke-width="0.6" fill="none"/><rect x="947.4" y="484.2" width="1.4" height="1.4" fill="none" stroke="#999" stroke-width=".3"/><path d="M949.8,485 h14" stroke="#8d9194" stroke-width="0.6" fill="none"/></svg>
<svg class="th" style="left:6px;top:370px;width:130px;height:91px;background:#fcfcfc;" viewBox="275 521 130 91" preserveAspectRatio="none"><defs><linearGradient id="dka" x1="0" y1="0" x2=".6" y2="1"><stop offset="0" stop-color="#7c3aa4"/><stop offset=".5" stop-color="#9340b8"/><stop offset="1" stop-color="#a844c4"/></linearGradient><linearGradient id="dkb" x1="0" y1="0" x2="0" y2="1"><stop offset="0" stop-color="#f07c12"/><stop offset=".45" stop-color="#f4a020"/><stop offset=".6" stop-color="#e8d83c"/><stop offset=".75" stop-color="#5cc890"/><stop offset="1" stop-color="#2a8ad8"/></linearGradient><linearGradient id="dkc" x1="0" y1="0" x2="1" y2="0"><stop offset="0" stop-color="#e8c030"/><stop offset=".35" stop-color="#e8e040"/><stop offset=".6" stop-color="#48c8a0"/><stop offset="1" stop-color="#2a7ae0"/></linearGradient></defs><rect x="275" y="521" width="130" height="91" fill="url(#dka)" /><path d="M361.45,521 L387.45,521 L378.35,551.94 L362.75,541.02Z" fill="#5e3296" opacity=".85"/><path d="M275,586.52 L301,593.8 L290.6,612 L275,612Z" fill="#7a34a8" opacity=".7"/><path d="M288,593.8 L333.5,599.26 L314,612 L290.6,612Z" fill="#b04cd0" opacity=".6"/><path d="M387.45,521 H405 V577.42 L393.3,559.22 L385.5,539.2Z" fill="url(#dkb)"/><path d="M389.4,521 L405,531.92 V548.3 L390.7,535.56Z" fill="#f8981c" opacity=".8"/><path d="M401.75,566.5 L405,561.95 V612 H399.8Z" fill="url(#dkb)"/><path d="M329.6,612 L355.6,605.63 L405,602.9 V612Z" fill="url(#dkc)"/><rect x="278.300" y="522.8" width="101.400" height="76.800" fill="#000" opacity=".2"/><rect x="278.7" y="523" width="100.6" height="76" fill="#eff0f1" /><rect x="280" y="523.8" width="1.8" height="2" fill="#2a5ab8" /><path d="M326,525 h8" stroke="#c9ccce" stroke-width="0.6" fill="none"/><circle cx="376.600" cy="525" r="1" fill="none" stroke="#aaa" stroke-width=".4"/><path d="M280.4,528.6 h74" stroke="#55595d" stroke-width=".9" stroke-dasharray="6 1.4 5 1.400 3 1.400 4 1.400"/><path d="M281,533 h86" stroke="#55595d" stroke-width="1" stroke-dasharray="1.600 2 8 2.600"/><rect x="279" y="536" width="4.6" height="62" fill="#e9eaeb" /><path d="M281.200,538 v56" stroke="#55595d" stroke-width="1.400" stroke-dasharray="1.600 3.200 1.600 2.400"/><rect x="284" y="536.4" width="95" height="57" fill="#fcfcfc" /><path d="M286,538.4 h7" stroke="#888" stroke-width="0.6" fill="none"/><rect x="285.4" y="541" width="1.6" height="1.6" fill="#777" /><path d="M288,541.8 h7" stroke="#888" stroke-width="0.6" fill="none"/><rect x="284" y="543.8" width="28" height="2.6" fill="#bfe0f6" /><rect x="287.6" y="544.3" width="2" height="1.6" fill="#5a8ab8" /><path d="M290.6,545.1 h7" stroke="#345" stroke-width="0.8" fill="none"/><path d="M285.2,545.1 h1.2" stroke="#666" stroke-width="0.6" fill="none"/><rect x="290.4" y="547.6" width="1.6" height="1.8" fill="#aaa" /><path d="M293.4,548.6 h5" stroke="#888" stroke-width="0.6" fill="none"/><rect x="285" y="593.6" width="26" height="2.4" fill="#fcfcfc" stroke="#d2d4d6" stroke-width=".3"/><path d="M286,594.8 h6" stroke="#bbb" stroke-width="0.5" fill="none"/><path d="M279.6,597.4 h18" stroke="#666" stroke-width="0.7" fill="none"/><path d="M302,597.400 h10" stroke="#999" stroke-width=".8" stroke-dasharray="1.400 2.200"/><rect x="310.200" y="536" width="91.600" height="72.600" fill="#000" opacity=".25"/><rect x="310.7" y="536.3" width="90.6" height="71.7" fill="#eff0f1" /><rect x="310.7" y="536.3" width="90.6" height="3.8" fill="#434c53" /><rect x="311.8" y="537.2" width="1.6" height="1.8" fill="#3a7ad0" /><path d="M336,538.2 h40" stroke="#b8bec2" stroke-width="0.7" fill="none"/><circle cx="399" cy="538.200" r="1.200" fill="#f0f0f0"/><path d="M390,538.2 h5" stroke="#99a" stroke-width="0.5" fill="none"/><path d="M312.400,542.400 h74" stroke="#55595d" stroke-width=".9" stroke-dasharray="3.600 1.400 4.600 1.400 4 1.400 6 1.400 8 1.400"/><rect x="312.6" y="545.8" width="2" height="2.2" fill="#444" /><path d="M315.6,547 h10" stroke="#55595d" stroke-width="0.9" fill="none"/><path d="M329,547 h14" stroke="#b5b8bb" stroke-width="0.8" fill="none"/><rect x="346.4" y="546" width="2" height="2" fill="#666" /><path d="M349.6,547 h6" stroke="#55595d" stroke-width="0.9" fill="none"/><path d="M359,547 h14" stroke="#b5b8bb" stroke-width="0.8" fill="none"/><rect x="399.4" y="546.6" width="0.8" height="0.8" fill="#333" /><rect x="311.2" y="549.6" width="86" height="52.4" fill="#fcfcfc" /><defs><radialGradient id="fl1" cx=".86" cy=".18" r=".6"><stop offset="0" stop-color="#5a8a3a"/><stop offset=".6" stop-color="#3a5a28"/><stop offset="1" stop-color="#5a2a30"/></radialGradient><filter id="flb" x="-10%" y="-10%" width="120%" height="120%"><feGaussianBlur stdDeviation=".5"/></filter></defs><rect x="334" y="563.8" width="40" height="24.8" fill="url(#fl1)" /><g filter="url(#flb)"><circle cx="339" cy="569" r="4.4" fill="#d42878"/><circle cx="339" cy="569" r="2.42" fill="#e8509a"/><circle cx="347.6" cy="571.4" r="5.4" fill="#d42878"/><circle cx="347.6" cy="571.4" r="2.97" fill="#e8509a"/><circle cx="355.6" cy="573.4" r="6" fill="#d42878"/><circle cx="355.6" cy="573.4" r="3.3" fill="#e8509a"/><circle cx="343" cy="578.6" r="5.4" fill="#d42878"/><circle cx="343" cy="578.6" r="2.97" fill="#e8509a"/><circle cx="351" cy="582" r="5" fill="#d42878"/><circle cx="351" cy="582" r="2.75" fill="#e8509a"/><circle cx="363" cy="577" r="4.6" fill="#d42878"/><circle cx="363" cy="577" r="2.53" fill="#e8509a"/><circle cx="338" cy="585" r="4" fill="#d42878"/><circle cx="338" cy="585" r="2.2" fill="#e8509a"/><circle cx="359.6" cy="584.6" r="4.6" fill="#d42878"/><circle cx="359.6" cy="584.6" r="2.53" fill="#e8509a"/><circle cx="367" cy="585.6" r="3.6" fill="#d42878"/><circle cx="367" cy="585.6" r="1.98" fill="#e8509a"/><circle cx="344.6" cy="586.6" r="3" fill="#d42878"/><circle cx="344.6" cy="586.6" r="1.65" fill="#e8509a"/><circle cx="339.2" cy="569.2" r="1.056" fill="#f0d020"/><circle cx="347.8" cy="571.6" r="1.296" fill="#f0d020"/><circle cx="355.8" cy="573.6" r="1.44" fill="#f0d020"/><circle cx="343.2" cy="578.8" r="1.296" fill="#f0d020"/><circle cx="351.2" cy="582.2" r="1.2" fill="#f0d020"/><circle cx="363.2" cy="577.2" r="1.104" fill="#f0d020"/><circle cx="338.2" cy="585.2" r="0.96" fill="#f0d020"/><path d="M334,563.800 h6 l-6,5z" fill="#a02040"/></g><rect x="374" y="563.8" width="24" height="25" fill="#fcfcfc" /><rect x="330" y="588.6" width="50" height="3" fill="#fcfcfc" /><rect x="397.2" y="549.6" width="4.1" height="52.4" fill="#e9eaeb" /><path d="M399.200,551 v44" stroke="#666a6e" stroke-width="1.100" stroke-dasharray="4 1.200 6 1.600 2 1.400"/><rect x="398.4" y="597.4" width="1.6" height="1.8" fill="#3daee9" /><path d="M312.4,604.8 h11" stroke="#777" stroke-width="0.7" fill="none"/><path d="M326,604.800 h8" stroke="#666" stroke-width="1.800" stroke-dasharray="1.800 1.600"/><rect x="336" y="604.3" width="8" height="1" fill="#3daee9" /><rect x="344" y="604.5" width="6" height="0.5" fill="#aaa" /><rect x="351" y="603.4" width="10" height="2.8" fill="#fcfcfc" stroke="#c9cbcd" stroke-width=".3"/><path d="M352,604.8 h6" stroke="#777" stroke-width="0.6" fill="none"/><path d="M364,604.800 h34" stroke="#55595d" stroke-width="1.600" stroke-dasharray="2 1.600"/><rect x="275.4" y="521.4" width="129.2" height="90.2" fill="none" stroke="#f4f4f4" stroke-width=".8"/></svg>
<svg class="th ns" style="left:149px;top:380.5px;width:130.5px;height:78px;background:#fcfcfc;" viewBox="418 531.5 130.5 78" preserveAspectRatio="none"><rect x="418" y="531.5" width="130.5" height="78" fill="#eff0f1" /><rect x="418" y="531.5" width="130.5" height="3.4" fill="#434c53" /><rect x="419" y="532.3" width="2" height="1.6" fill="#3a8ae0" /><rect x="422.4" y="532.6" width="1.2" height="1" fill="#ccd" /><path d="M474,533.2 h17" stroke="#b0b6ba" stroke-width="0.7" fill="none"/><circle cx="546.400" cy="533.200" r="1.100" fill="#f0f0f0"/><path d="M539,533.2 h4" stroke="#99a" stroke-width="0.5" fill="none"/><path d="M420.600,537.600 l-1,1 l1,1 M425,537.600 l1,1 l-1,1" stroke="#aaa" stroke-width=".4" fill="none"/><rect x="428" y="536.8" width="3.6" height="3.4" fill="#c9cbcd" /><rect x="428.8" y="537.6" width="2" height="1.8" fill="#444" /><rect x="433.4" y="537.6" width="1.6" height="1.8" fill="#555" /><rect x="437.6" y="537.6" width="2" height="1.8" fill="#555" /><path d="M443,538.6 h6" stroke="#888" stroke-width="0.7" fill="none"/><rect x="450" y="537" width="10.6" height="3.2" fill="#c6c8ca" /><path d="M452,538.6 h7" stroke="#555" stroke-width="0.8" fill="none"/><rect x="462.6" y="537.8" width="1.6" height="1.6" fill="#777" /><path d="M465,538.6 h4" stroke="#888" stroke-width="0.7" fill="none"/><rect x="471" y="537.8" width="1.6" height="1.6" fill="#555" /><path d="M473.4,538.6 h6" stroke="#888" stroke-width="0.7" fill="none"/><path d="M419.4,541.8 h4" stroke="#aaa" stroke-width="0.6" fill="none"/><path d="M441.6,542 h5.6" stroke="#888" stroke-width="0.7" fill="none"/><path d="M449.6,542 h7" stroke="#888" stroke-width="0.7" fill="none"/><path d="M459.6,542 h9" stroke="#333" stroke-width="1" fill="none"/><path d="M447.800,541.200 l.8,.8 l-.8,.8 M457.800,541.200 l.8,.8 l-.8,.8" stroke="#999" stroke-width=".35" fill="none"/><rect x="419" y="544" width="21" height="2.4" fill="#3daee9" /><rect x="419.6" y="544.5" width="1.6" height="1.4" fill="#e0f0fa" /><path d="M422.4,545.2 h5" stroke="#e8f4fc" stroke-width="0.7" fill="none"/><rect x="419.6" y="547" width="1.6" height="1.5" fill="#333" /><path d="M422.4,547.8 h6" stroke="#6d7175" stroke-width="0.75" fill="none"/><rect x="419.6" y="549.6" width="1.6" height="1.5" fill="#d55" /><path d="M422.4,550.4 h4" stroke="#6d7175" stroke-width="0.75" fill="none"/><rect x="419.6" y="552.4" width="1.6" height="1.5" fill="#999" /><path d="M422.4,553.2 h4" stroke="#6d7175" stroke-width="0.75" fill="none"/><rect x="419.6" y="559" width="1.6" height="1.5" fill="#4a4" /><path d="M422.4,559.8 h4" stroke="#6d7175" stroke-width="0.75" fill="none"/><rect x="419.6" y="561.6" width="1.6" height="1.5" fill="#444" /><path d="M422.4,562.4 h7" stroke="#6d7175" stroke-width="0.75" fill="none"/><rect x="419.6" y="564.4" width="1.6" height="1.5" fill="#4a6" /><path d="M422.4,565.2 h8" stroke="#6d7175" stroke-width="0.75" fill="none"/><rect x="419.6" y="567.2" width="1.6" height="1.5" fill="#3a8" /><path d="M422.4,568 h8" stroke="#6d7175" stroke-width="0.75" fill="none"/><rect x="419.6" y="573.8" width="1.6" height="1.5" fill="#555" /><path d="M422.4,574.6 h8" stroke="#6d7175" stroke-width="0.75" fill="none"/><rect x="419.6" y="576.6" width="1.6" height="1.5" fill="#555" /><path d="M422.4,577.4 h5" stroke="#6d7175" stroke-width="0.75" fill="none"/><rect x="419.6" y="579.2" width="1.6" height="1.5" fill="#555" /><path d="M422.4,580 h7" stroke="#6d7175" stroke-width="0.75" fill="none"/><rect x="419.6" y="582" width="1.6" height="1.5" fill="#555" /><path d="M422.4,582.8 h5" stroke="#6d7175" stroke-width="0.75" fill="none"/><rect x="419.6" y="588.4" width="1.6" height="1.5" fill="#2a8a4a" /><path d="M422.4,589.2 h4" stroke="#6d7175" stroke-width="0.75" fill="none"/><rect x="419.6" y="591.2" width="1.6" height="1.5" fill="#2a8a4a" /><path d="M422.4,592 h3" stroke="#6d7175" stroke-width="0.75" fill="none"/><rect x="419.6" y="594" width="1.6" height="1.5" fill="#5aa050" /><path d="M422.4,594.8 h4" stroke="#6d7175" stroke-width="0.75" fill="none"/><rect x="419.6" y="596.6" width="1.6" height="1.5" fill="#e06030" /><path d="M422.4,597.4 h13" stroke="#6d7175" stroke-width="0.75" fill="none"/><rect x="419.6" y="599.4" width="1.6" height="1.5" fill="#e07040" /><path d="M422.4,600.2 h8" stroke="#6d7175" stroke-width="0.75" fill="none"/><rect x="419.6" y="602.2" width="1.6" height="1.5" fill="#e06a40" /><path d="M422.4,603 h14" stroke="#6d7175" stroke-width="0.75" fill="none"/><path d="M419.4,556.8 h8" stroke="#b5b8bb" stroke-width="0.6" fill="none"/><path d="M419.4,571.6 h8" stroke="#b5b8bb" stroke-width="0.6" fill="none"/><path d="M419.4,586.2 h8" stroke="#b5b8bb" stroke-width="0.6" fill="none"/><rect x="440.5" y="544.3" width="85.1" height="61.7" fill="#fcfcfc" stroke="#bfe0f6" stroke-width=".5"/><rect x="446.1" y="545.8" width="7.8" height="7" fill="#1c1c1c" /><path d="M446.1,545.8 h3.9 l2.34,7 h-6.24z" fill="#c8202c"/><path d="M450,545.8 h3.9 v7 h-1.56z" fill="#3a6a8a" opacity=".8"/><path d="M446,554.6 h8" stroke="#8d9194" stroke-width="0.6" fill="none"/><rect x="462.6" y="545.8" width="7.8" height="7" fill="#1c1c1c" /><path d="M462.6,552.8 l4.68,-4.9" stroke="#444" stroke-width=".8"/><path d="M462.5,554.6 h8" stroke="#8d9194" stroke-width="0.6" fill="none"/><rect x="479" y="545.8" width="7.8" height="7" fill="#1c1c1c" /><path d="M479,552.8 v-2.45 l4.68,-3.5 l0.78,0.7 l-3.9,5.25z" fill="#1ab8c8"/><path d="M483.68,552.8 l3.12,-3.5 v3.5z" fill="#f4f4f4"/><path d="M478.9,554.6 h8" stroke="#8d9194" stroke-width="0.6" fill="none"/><rect x="495.4" y="545.8" width="7.8" height="7" fill="#1c1c1c" /><rect x="496" y="546.4" width="6.6" height="5.8" fill="#2a2a2a"/><path d="M495.3,554.6 h8" stroke="#8d9194" stroke-width="0.6" fill="none"/><rect x="511.7" y="545.8" width="7.8" height="7" fill="#1c1c1c" /><path d="M511.7,545.8 h7.8 v2.1 l-3.9,2.1 l-3.9,-2.8z" fill="#e01020"/><path d="M511.6,554.6 h8" stroke="#8d9194" stroke-width="0.6" fill="none"/><rect x="446.1" y="557.5" width="7.8" height="7" fill="#1c1c1c" /><path d="M446.1,564.5 l5.46,-4.2 l-2.34,4.2z" fill="#18b0c0"/><path d="M445.5,566.4 h9" stroke="#8d9194" stroke-width="0.6" fill="none"/><rect x="462.6" y="557.5" width="7.8" height="7" fill="#1c1c1c" /><path d="M462.6,564.5 l5.46,-4.2 l-2.34,4.2z" fill="#18b0c0"/><path d="M462,566.4 h9" stroke="#8d9194" stroke-width="0.6" fill="none"/><rect x="479" y="557.5" width="7.8" height="7" fill="#1c1c1c" /><path d="M481.34,563.8 l1.56,-4.9 l1.56,3.5z" fill="#e0b030"/><path d="M482.12,560.3 l1.56,2.8" stroke="#e03030" stroke-width=".8"/><path d="M478.4,566.4 h9" stroke="#8d9194" stroke-width="0.6" fill="none"/><rect x="493" y="557.5" width="12.6" height="7" fill="#252525" /><rect x="495.52" y="560.4" width="7.56" height="1.200" fill="#5ab030"/><path d="M494.8,566.4 h9" stroke="#8d9194" stroke-width="0.6" fill="none"/><rect x="510.8" y="557.5" width="9.6" height="7" fill="#060606" /><path d="M514.64,561.6 l3.36,-1.600 v1.600z" fill="#e8e8e8"/><path d="M511.1,566.4 h9" stroke="#8d9194" stroke-width="0.6" fill="none"/><rect x="443.7" y="569.1" width="12.6" height="7" fill="#081014" /><path d="M448.74,569.1 l5.04,3.5 l-1.26,3.5" stroke="#0e5a60" stroke-width="1.600" fill="none" opacity=".8"/><path d="M444.5,578 h11" stroke="#8d9194" stroke-width="0.6" fill="none"/><path d="M448.5,579.8 h3" stroke="#8d9194" stroke-width="0.6" fill="none"/><rect x="460.2" y="569.1" width="12.6" height="7" fill="#040404" /><rect x="464.61" y="572.2" width="3.78" height=".8" fill="#999"/><path d="M461,578 h11" stroke="#8d9194" stroke-width="0.6" fill="none"/><rect x="477.6" y="569.1" width="10.6" height="7" fill="#7a8a6a" /><rect x="481.84" y="570.5" width="5.3" height="4.2" fill="#3a4030"/><rect x="478.13" y="571.9" width="3.18" height="3.5" fill="#c8c0b0"/><path d="M477.4,578 h11" stroke="#8d9194" stroke-width="0.6" fill="none"/><rect x="494.8" y="569.1" width="9" height="7" fill="#1c1c1c" /><rect x="495.4" y="569.7" width="7.8" height="5.8" fill="#2a2a2a"/><path d="M493.8,578 h11" stroke="#8d9194" stroke-width="0.6" fill="none"/><path d="M497.8,579.8 h3" stroke="#8d9194" stroke-width="0.6" fill="none"/><rect x="511.1" y="569.1" width="9" height="7" fill="#1c1c1c" /><rect x="511.7" y="569.7" width="7.8" height="5.8" fill="#2a2a2a"/><path d="M510.1,578 h11" stroke="#8d9194" stroke-width="0.6" fill="none"/><rect x="526.7" y="547.3" width="20.1" height="10.7" fill="#2c2c2c" /><rect x="526.7" y="547.3" width="20.1" height="0.6" fill="#444" /><text x="529.600" y="553.800" font-size="3.400" font-weight="bold" font-family="Liberation Sans,sans-serif" fill="#6ab030" textLength="14" lengthAdjust="spacingAndGlyphs">HACK ▮▯</text><path d="M533,565.6 h7" stroke="#333" stroke-width="0.9" fill="none"/><rect x="527" y="567.2" width="20" height="0.3" fill="#d2d4d6" /><path d="M531,569.4 h9" stroke="#9a9da0" stroke-width="0.55" fill="none"/><path d="M539,569.4 h5" stroke="#8d9194" stroke-width="0.55" fill="none"/><path d="M532,571.4 h3" stroke="#9a9da0" stroke-width="0.55" fill="none"/><path d="M539,571.4 h4" stroke="#8d9194" stroke-width="0.55" fill="none"/><path d="M534,573.4 h4" stroke="#9a9da0" stroke-width="0.55" fill="none"/><path d="M539,573.4 h7" stroke="#4a9ad8" stroke-width="0.55" fill="none"/><path d="M531,575.2 h9" stroke="#9a9da0" stroke-width="0.55" fill="none"/><path d="M539,575.2 h3" stroke="#8d9194" stroke-width="0.55" fill="none"/><path d="M532,578 h9" stroke="#9a9da0" stroke-width="0.55" fill="none"/><path d="M539,578 h7" stroke="#4a9ad8" stroke-width="0.55" fill="none"/><path d="M539,582 h3" stroke="#4a9ad8" stroke-width="0.55" fill="none"/><path d="M531,584 h3" stroke="#9a9da0" stroke-width="0.55" fill="none"/><path d="M539,584 h6" stroke="#8d9194" stroke-width="0.55" fill="none"/><path d="M531,586.6 h3" stroke="#9a9da0" stroke-width="0.55" fill="none"/><path d="M539,586.6 h4" stroke="#8d9194" stroke-width="0.55" fill="none"/><path d="M539,588.6 h4" stroke="#8d9194" stroke-width="0.55" fill="none"/><path d="M539,590.6 h3" stroke="#8d9194" stroke-width="0.55" fill="none"/><path d="M539,592.6 h3" stroke="#8d9194" stroke-width="0.55" fill="none"/><path d="M539,594.6 h4" stroke="#8d9194" stroke-width="0.55" fill="none"/><path d="M527,596.4 h9" stroke="#9a9da0" stroke-width="0.55" fill="none"/><path d="M539,596.4 h3" stroke="#8d9194" stroke-width="0.55" fill="none"/><path d="M531,598.2 h2" stroke="#9a9da0" stroke-width="0.55" fill="none"/><path d="M539,598.2 h5" stroke="#8d9194" stroke-width="0.55" fill="none"/><path d="M539,600 h4" stroke="#8d9194" stroke-width="0.55" fill="none"/><path d="M533,602 h5" stroke="#9a9da0" stroke-width="0.55" fill="none"/><path d="M539,602 h3" stroke="#8d9194" stroke-width="0.55" fill="none"/><path d="M441,607.8 h11" stroke="#888" stroke-width="0.6" fill="none"/><rect x="476" y="607.3" width="5.6" height="1" fill="#3daee9" /><rect x="482" y="607.6" width="18" height="0.5" fill="#c9cbcd" /><rect x="501" y="607.3" width="9" height="1" fill="#3daee9" /><rect x="510" y="607.6" width="6" height="0.5" fill="#c9cbcd" /><path d="M517,607.8 h8" stroke="#888" stroke-width="0.6" fill="none"/></svg>
<svg class="th" style="left:290px;top:386.7px;width:135px;height:74.3px;background:#fcfcfc;" viewBox="559 537.7 135 74.3" preserveAspectRatio="none"><rect x="559" y="537.7" width="135" height="74.3" fill="#eff0f1" /><rect x="559" y="537.7" width="135" height="0.8" fill="#fcfcfc" /><rect x="559.8" y="538.5" width="133.4" height="2" fill="#434c53" /><path d="M622,539.5 h6" stroke="#99a" stroke-width="0.5" fill="none"/><rect x="691" y="538.8" width="1.4" height="1.4" fill="#eee" /><path d="M561.6,542 h9" stroke="#888" stroke-width="0.6" fill="none"/><rect x="561" y="543.4" width="1.4" height="1.4" fill="#777" /><rect x="564" y="543.8" width="70" height="0.9" fill="#3daee9" /><rect x="634" y="544" width="44" height="0.5" fill="#c9cbcd" /><rect x="679" y="543.3" width="2" height="1.4" fill="#555" /><path d="M684,544 h7" stroke="#aaa" stroke-width="0.5" fill="none"/><rect x="572" y="544.6" width="4" height="0.8" fill="#d03030" /><rect x="559.8" y="545.8" width="133.4" height="63.2" fill="#000" /><defs><linearGradient id="dp1" x1="0" y1="0" x2="0" y2="1"><stop offset="0" stop-color="#0a2486"/><stop offset="1" stop-color="#1436a0"/></linearGradient><linearGradient id="dp2" x1="0" y1="0" x2="0" y2="1"><stop offset="0" stop-color="#5fb4cf"/><stop offset="1" stop-color="#8ed0dc"/></linearGradient><linearGradient id="dp3" x1="0" y1="0" x2="1" y2="1"><stop offset="0" stop-color="#4a5a56"/><stop offset="1" stop-color="#36443f"/></linearGradient><filter id="dpb" x="-5%" y="-5%" width="110%" height="110%"><feGaussianBlur stdDeviation=".45"/></filter><clipPath id="dpc"><rect x="569.5" y="545.8" width="113.500" height="63.2"/></clipPath></defs><g clip-path="url(#dpc)"><g filter="url(#dpb)"><rect x="569.5" y="545.8" width="113.5" height="30" fill="url(#dp1)" /><rect x="569.5" y="570" width="113.5" height="24" fill="url(#dp2)" /><path d="M600,582 h60 v2 h-60z M575,580 h20 v1.600 h-20z" fill="#e8f4f8" opacity=".6"/><path d="M569.500,594 l8,-14 l10,14z" fill="#7aa0b0" opacity=".7"/><rect x="569.5" y="591.6" width="113.5" height="7" fill="#62b834" /><rect x="569.5" y="597.4" width="113.5" height="11.6" fill="#58625f" /><path d="M569.5,562.400 L665,549.3 L679.6,556.6 L680,572 L590,577.6 L569.5,578Z" fill="url(#dp3)"/><path d="M569.5,578 L590,570 L680,566 L680,572 L612,576 L569.5,578.400Z" fill="#3f4e4a"/><path d="M679.600,556.600 L683,558 V596 L680,598Z" fill="#66736f"/><path d="M569.5,563 l4,1 l1.600,14 l-2,14 l-3.600,4z" fill="#c9cdd0"/><path d="M596,577 h23.400 l-.6,21 h-21.800z" fill="#49534f"/><path d="M635,573 l3.600,10 h-2 l3,9 h-10 l3,-9 h-2z" fill="#2f7a3a"/><path d="M670.600,571 l4.600,8 l-1,.4 l2.600,8 q-6,2.400 -12,0 l2.600,-8 l-1,-.4z" fill="#2a6a34"/><path d="M628,580 l1.600,6 h-3.200z" fill="#3a8a44"/><rect x="634.400" y="590" width="1.400" height="5" fill="#5a4030"/><rect x="670" y="586" width="1.400" height="5" fill="#5a4030"/><ellipse cx="604.400" cy="588" rx="5" ry="4.400" fill="#e0a868"/><ellipse cx="599.600" cy="589" rx="2" ry="3.600" fill="#d8924a"/><ellipse cx="609" cy="588.400" rx="1.800" ry="3.400" fill="#d8924a"/><path d="M602.400,592 h4.400 l.6,6.600 h-5.400z" fill="#e8c8a0"/><rect x="603.600" y="591.600" width="2" height="3" fill="#d870a8"/><ellipse cx="626" cy="589.600" rx="5.400" ry="4.600" fill="#f0ece6"/><path d="M620.600,588 q1,-4.600 5.400,-4.800 q4.400,.2 5.400,4.800 q-3,-2.400 -5.400,-.6 q-2.400,-1.800 -5.400,.6z" fill="#a86030"/><rect x="624.600" y="591" width="3" height="1.600" fill="#d04040"/><path d="M621,594 h10 l.600,5 h-11.200z" fill="#c87830"/><ellipse cx="634.400" cy="592.400" rx="2" ry="2.400" fill="#6a7470"/><rect x="633.400" y="594" width="2.200" height="5" fill="#5a6460"/><ellipse cx="647" cy="588.600" rx="6.400" ry="5" fill="#6a3026"/><ellipse cx="641.600" cy="590" rx="1.800" ry="3" fill="#522018"/><ellipse cx="652.400" cy="590" rx="1.800" ry="3" fill="#522018"/><path d="M643.600,593 h7 l.6,6 h-8.200z" fill="#7a3a28"/><rect x="645.600" y="592.600" width="3" height="2.400" fill="#2a2a3a"/><rect x="646.200" y="595.600" width="1.800" height="2" fill="#d0a030"/><ellipse cx="664" cy="590.600" rx="3.400" ry="3.200" fill="#20262a"/><path d="M661,588.600 l-.6,-3 l2,1.600z M667,588.600 l.6,-3 l-2,1.600z" fill="#20262a"/><path d="M661.600,593 h4.800 l.4,5.600 h-5.600z" fill="#283034"/><path d="M582,608.600 h16" stroke="#c8b820" stroke-width=".8"/></g></g><text x="580" y="555.400" font-size="3.200" font-weight="bold" font-family="Liberation Sans,sans-serif" fill="#f07010" textLength="19" lengthAdjust="spacingAndGlyphs">nickelodeon</text><rect x="559" y="609" width="135" height="3" fill="#eff0f1" /><path d="M560.6,610.4 h3" stroke="#aaa" stroke-width="0.5" fill="none"/><rect x="559" y="537.7" width="0.8" height="74.3" fill="#fcfcfc" /><rect x="693.2" y="537.7" width="0.8" height="74.3" fill="#fcfcfc" /><rect x="559" y="611.4" width="135" height="0.6" fill="#fcfcfc" /></svg>
<svg class="th" style="left:436px;top:378px;width:128px;height:79px;background:#fcfcfc;" viewBox="705 529 128 79" preserveAspectRatio="none"><rect x="705" y="529" width="128" height="79" fill="#eff0f1" /><rect x="705" y="529" width="128" height="5.2" fill="#434c53" /><circle cx="707.8" cy="531.6" r="1.700" fill="#e8e0c0"/><path d="M707.800,531.600 l1.700,0 a1.700,1.700 0 0 0 -1.700,-1.700z" fill="#3a9ad8"/><path d="M707.8,531.6 l-1.700,0 a1.700,1.700 0 0 0 1.700,1.700z" fill="#5ab040"/><path d="M762,531.6 h13" stroke="#b8bec2" stroke-width="0.8" fill="none"/><circle cx="829.800" cy="531.600" r="1.900" fill="#f2f2f2"/><path d="M819,531 l1,1 l1,-1 M824,532 l1,-1 l1,1" stroke="#ccd" stroke-width=".4" fill="none"/><path d="M707.8,537.8 h5.4" stroke="#666" stroke-width="0.9" fill="none"/><path d="M717.2,537.8 h6" stroke="#666" stroke-width="0.9" fill="none"/><path d="M727.6,537.8 h3.6" stroke="#666" stroke-width="0.9" fill="none"/><path d="M735,537.8 h10" stroke="#666" stroke-width="0.9" fill="none"/><path d="M748.6,537.8 h6" stroke="#666" stroke-width="0.9" fill="none"/><rect x="708.2" y="543" width="3" height="3.6" fill="none" stroke="#444" stroke-width=".5"/><path d="M712.8,544.8 h6" stroke="#666" stroke-width="0.9" fill="none"/><rect x="721.8" y="541.6" width="0.4" height="6" fill="#cfd1d3" /><path d="M727.400,543.200 l-1.600,1.600 l1.600,1.600" stroke="#444" stroke-width=".5" fill="none"/><path d="M730,544.8 h5" stroke="#555" stroke-width="0.9" fill="none"/><path d="M740,543.200 l1.600,1.600 l-1.600,1.600" stroke="#aaa" stroke-width=".5" fill="none"/><path d="M743.6,544.8 h9" stroke="#b5b8bb" stroke-width="0.9" fill="none"/><path d="M759,544.8 h7" stroke="#b5b8bb" stroke-width="0.9" fill="none"/><rect x="768.6" y="541.6" width="0.4" height="6" fill="#cfd1d3" /><circle cx="772.6" cy="544.800" r="1.600" fill="none" stroke="#444" stroke-width=".5"/><path d="M776,544.8 h8" stroke="#555" stroke-width="0.9" fill="none"/><path d="M790,544.8 h7" stroke="#b5b8bb" stroke-width="0.9" fill="none"/><rect x="800.8" y="542.6" width="18" height="4.4" fill="#fcfcfc" stroke="#c9cbcd" stroke-width=".4"/><rect x="811.6" y="543.8" width="2.4" height="2" fill="#333" /><path d="M822,543.200 l1.600,1.600 l-1.600,1.600" stroke="#444" stroke-width=".5" fill="none"/><path d="M825.6,544.8 h4" stroke="#666" stroke-width="0.9" fill="none"/><rect x="706.5" y="549" width="125.3" height="52.8" fill="#fcfcfc" stroke="#bfe0f6" stroke-width=".6"/><path d="M791,562.500 H824 M795,572 H820 M790,586 H823 M776,595.500 H820 M715,568.400 H752 l4,2" stroke="#b8babc" stroke-width=".5" fill="none"/><path d="M825,562.5 h4" stroke="#888" stroke-width="0.7" fill="none"/><path d="M821,572 h7" stroke="#888" stroke-width="0.7" fill="none"/><path d="M824,586 h4" stroke="#888" stroke-width="0.7" fill="none"/><path d="M821,595.5 h7" stroke="#888" stroke-width="0.7" fill="none"/><path d="M709.6,568.4 h4.6" stroke="#888" stroke-width="0.7" fill="none"/><path d="M776.48,568.17 A10.2,10.2 0 1 0 768.54,585.19 L768.81,577.60 A2.6,2.6 0 1 1 770.83,573.26Z" fill="#f2e23c" opacity="1" stroke="#fff" stroke-opacity=".35" stroke-width=".25"/><path d="M774.00,566.17 A10.2,10.2 0 0 0 759.32,578.49 L763.64,576.92 A5.6,5.6 0 0 1 771.70,570.15Z" fill="#e8da3a" opacity="1" stroke="#fff" stroke-opacity=".35" stroke-width=".25"/><path d="M778.89,574.65 A10,10 0 0 0 778.17,571.25 L771.31,574.03 A2.6,2.6 0 0 1 771.50,574.91Z" fill="#e8504a" opacity="1" stroke="#fff" stroke-opacity=".35" stroke-width=".25"/><path d="M785.26,573.86 A16.4,16.4 0 0 0 784.31,569.39 L778.30,571.58 A10,10 0 0 1 778.88,574.30Z" fill="#e04a44" opacity="1" stroke="#fff" stroke-opacity=".35" stroke-width=".25"/><path d="M792.27,571.72 A23.6,23.6 0 0 0 791.21,567.32 L784.41,569.66 A16.4,16.4 0 0 1 785.14,572.72Z" fill="#d84440" opacity="1" stroke="#fff" stroke-opacity=".35" stroke-width=".25"/><path d="M785.29,574.43 A16.4,16.4 0 0 0 785.14,572.72 L778.80,573.61 A10,10 0 0 1 778.89,574.65Z" fill="#e86a5a" opacity="1" stroke="#fff" stroke-opacity=".35" stroke-width=".25"/><path d="M778.17,571.25 A10,10 0 0 0 776.33,568.31 L770.83,573.26 A2.6,2.6 0 0 1 771.31,574.03Z" fill="#f09a3a" opacity="1" stroke="#fff" stroke-opacity=".35" stroke-width=".25"/><path d="M790.99,565.62 A24,24 0 0 0 789.03,561.93 L777.29,569.55 A10,10 0 0 1 778.11,571.09Z" fill="#ee9030" opacity="1" stroke="#fff" stroke-opacity=".35" stroke-width=".25"/><path d="M790.45,560.46 A26,26 0 0 0 787.60,556.94 L776.09,568.05 A10,10 0 0 1 777.19,569.41Z" fill="#f0a040" opacity="1" stroke="#fff" stroke-opacity=".35" stroke-width=".25"/><path d="M778.97,565.27 A14,14 0 0 0 777.52,563.97 L773.83,568.70 A8,8 0 0 1 774.65,569.44Z" fill="#f0b050" opacity="1" stroke="#fff" stroke-opacity=".35" stroke-width=".25"/><path d="M778.74,560.41 A17.6,17.6 0 0 0 774.34,558.26 L772.05,565.30 A10.2,10.2 0 0 1 774.60,566.54Z" fill="#cfe23a" opacity="1" stroke="#fff" stroke-opacity=".35" stroke-width=".25"/><path d="M774.34,558.26 A17.6,17.6 0 0 0 768.29,557.41 L768.54,564.81 A10.2,10.2 0 0 1 772.05,565.30Z" fill="#b4e03c" opacity="1" stroke="#fff" stroke-opacity=".35" stroke-width=".25"/><path d="M780.90,554.22 A24,24 0 0 0 778.66,553.07 L776.06,558.92 A17.6,17.6 0 0 1 777.70,559.76Z" fill="#d8e060" opacity="1" stroke="#fff" stroke-opacity=".35" stroke-width=".25"/><path d="M777.50,554.75 A22,22 0 0 0 776.06,554.20 L774.63,558.36 A17.6,17.6 0 0 1 775.78,558.80Z" fill="#e0e0c0" opacity="1" stroke="#fff" stroke-opacity=".35" stroke-width=".25"/><path d="M774.13,554.04 A21.6,21.6 0 0 0 772.65,553.73 L771.96,557.67 A17.6,17.6 0 0 1 773.16,557.92Z" fill="#a0d840" opacity="1" stroke="#fff" stroke-opacity=".35" stroke-width=".25"/><path d="M768.08,551.41 A23.6,23.6 0 0 0 766.43,551.53 L767.83,564.86 A10.2,10.2 0 0 1 768.54,564.81Z" fill="#70c830" opacity="1" stroke="#fff" stroke-opacity=".35" stroke-width=".25"/><path d="M764.98,552.74 A22.6,22.6 0 0 0 763.43,553.07 L766.43,565.10 A10.2,10.2 0 0 1 767.13,564.95Z" fill="#58b830" opacity="1" stroke="#fff" stroke-opacity=".35" stroke-width=".25"/><path d="M763.03,556.93 A19,19 0 0 0 761.78,557.38 L762.91,560.17 A16,16 0 0 1 763.96,559.78Z" fill="#48a828" opacity="1" stroke="#fff" stroke-opacity=".35" stroke-width=".25"/><path d="M767.16,558.49 A16.6,16.6 0 0 0 754.52,566.70 L760.07,569.90 A10.2,10.2 0 0 1 767.83,564.86Z" fill="#74d840" opacity="1" stroke="#fff" stroke-opacity=".35" stroke-width=".25"/><path d="M763.81,562.39 A13.6,13.6 0 0 0 757.12,568.20 L760.07,569.90 A10.2,10.2 0 0 1 765.08,565.54Z" fill="#8ae048" opacity="1" stroke="#fff" stroke-opacity=".35" stroke-width=".25"/><path d="M754.62,571.96 A14.6,14.6 0 0 0 756.94,583.37 L760.54,580.85 A10.2,10.2 0 0 1 758.92,572.88Z" fill="#48d8e8" opacity="1" stroke="#fff" stroke-opacity=".35" stroke-width=".25"/><path d="M749.09,572.22 A20,20 0 0 0 748.95,573.60 L754.34,573.98 A14.6,14.6 0 0 1 754.44,572.97Z" fill="#40c8d8" opacity="1" stroke="#fff" stroke-opacity=".35" stroke-width=".25"/><path d="M748.90,575.00 A20,20 0 0 0 748.95,576.40 L754.34,576.02 A14.6,14.6 0 0 1 754.30,575.00Z" fill="#40c8d8" opacity="1" stroke="#fff" stroke-opacity=".35" stroke-width=".25"/><path d="M750.08,577.64 A19,19 0 0 0 750.32,578.95 L754.62,578.04 A14.6,14.6 0 0 1 754.44,577.03Z" fill="#38b8d0" opacity="1" stroke="#fff" stroke-opacity=".35" stroke-width=".25"/><path d="M755.18,579.99 A14.6,14.6 0 0 0 759.91,586.50 L762.62,583.04 A10.2,10.2 0 0 1 759.32,578.49Z" fill="#3aa8e8" opacity="1" stroke="#fff" stroke-opacity=".35" stroke-width=".25"/><path d="M750.29,588.52 A23,23 0 0 0 752.36,590.98 L758.40,585.14 A14.6,14.6 0 0 1 757.09,583.58Z" fill="#3a84e0" opacity="1" stroke="#fff" stroke-opacity=".35" stroke-width=".25"/><path d="M754.18,591.35 A22,22 0 0 0 756.60,593.24 L760.74,587.10 A14.6,14.6 0 0 1 759.13,585.85Z" fill="#3070d8" opacity="1" stroke="#fff" stroke-opacity=".35" stroke-width=".25"/><path d="M760.42,588.57 A16,16 0 0 0 763.43,590.04 L765.41,584.58 A10.2,10.2 0 0 1 763.49,583.65Z" fill="#3a90e8" opacity="1" stroke="#fff" stroke-opacity=".35" stroke-width=".25"/><path d="M765.66,590.26 A15.6,15.6 0 0 0 774.74,589.46 L769.87,577.41 A2.6,2.6 0 0 1 768.36,577.54Z" fill="#a050e8" opacity="1" stroke="#fff" stroke-opacity=".35" stroke-width=".25"/><path d="M766.17,594.41 A19.6,19.6 0 0 0 775.60,593.42 L774.24,589.66 A15.6,15.6 0 0 1 766.73,590.45Z" fill="#d8c8f0" opacity="1" stroke="#fff" stroke-opacity=".35" stroke-width=".25"/><path d="M772.87,584.83 A10.6,10.6 0 0 0 779.34,576.84 L771.46,575.45 A2.6,2.6 0 0 1 769.87,577.41Z" fill="#f048c8" opacity="1" stroke="#fff" stroke-opacity=".35" stroke-width=".25"/><path d="M776.93,592.22 A19,19 0 0 0 783.02,587.71 L776.78,582.09 A10.6,10.6 0 0 1 773.38,584.61Z" fill="#e848c0" opacity="1" stroke="#fff" stroke-opacity=".35" stroke-width=".25"/><path d="M781.53,586.38 A17,17 0 0 0 784.43,581.91 L778.58,579.31 A10.6,10.6 0 0 1 776.78,582.09Z" fill="#f060c8" opacity="1" stroke="#fff" stroke-opacity=".35" stroke-width=".25"/><path d="M782.24,580.94 A14.6,14.6 0 0 0 783.28,577.54 L779.34,576.84 A10.6,10.6 0 0 1 778.58,579.31Z" fill="#f078c0" opacity="1" stroke="#fff" stroke-opacity=".35" stroke-width=".25"/><path d="M780.10,594.40 A22.4,22.4 0 0 0 783.89,591.65 L781.61,589.12 A19,19 0 0 1 778.40,591.45Z" fill="#e0c0e0" opacity="1" stroke="#fff" stroke-opacity=".35" stroke-width=".25"/><path d="M785.70,590.12 A22.6,22.6 0 0 0 788.47,586.30 L783.62,583.50 A17,17 0 0 1 781.53,586.38Z" fill="#e8b8d8" opacity="1" stroke="#fff" stroke-opacity=".35" stroke-width=".25"/><path d="M786.26,582.73 A19,19 0 0 0 787.34,579.60 L783.07,578.53 A14.6,14.6 0 0 1 782.24,580.94Z" fill="#f0b0d0" opacity="1" stroke="#fff" stroke-opacity=".35" stroke-width=".25"/><circle cx="768.9" cy="575" r="2.600" fill="#fafafa" stroke="#ccc" stroke-width=".3"/><path d="M815,604.8 h15" stroke="#777" stroke-width="0.7" fill="none"/></svg>
<svg class="th" style="left:576px;top:386.7px;width:135px;height:74.3px;background:#fcfcfc;" viewBox="845 537.7 135 74.3" preserveAspectRatio="none"><rect x="845" y="537.7" width="135" height="74.3" fill="#eff0f1" /><rect x="845" y="537.7" width="135" height="0.8" fill="#fcfcfc" /><rect x="845.8" y="538.5" width="133.4" height="2" fill="#434c53" /><path d="M909,539.5 h7" stroke="#99a" stroke-width="0.5" fill="none"/><rect x="977" y="538.8" width="1.4" height="1.4" fill="#eee" /><path d="M847,542 h28" stroke="#888" stroke-width=".6" stroke-dasharray="2 1.200"/><path d="M847,544.200 h56" stroke="#888" stroke-width=".7" stroke-dasharray="3 1.400 5 1.400"/><rect x="902" y="543.6" width="1.2" height="1.2" fill="#d03030" /><path d="M847,546.6 h3" stroke="#555" stroke-width="0.7" fill="none"/><path d="M852,546.6 h5" stroke="#888" stroke-width="0.6" fill="none"/><rect x="863" y="546" width="1.2" height="1.2" fill="#555" /><path d="M847,548.6 h4" stroke="#999" stroke-width="0.5" fill="none"/><rect x="856.4" y="548" width="1" height="1" fill="#d03030" /><path d="M847,554.2 h3" stroke="#555" stroke-width="0.7" fill="none"/><path d="M852,554.2 h6" stroke="#888" stroke-width="0.6" fill="none"/><rect x="846.6" y="556.6" width="14" height="11.4" fill="#dfe1e3" /><path d="M850,557.8 h5.37758 M850,559.3 h5.0861 M850,560.8 h6.16726 M850,562.3 h6.28251 M850,563.8 h6.90929 M850,565.3 h5.51152 M850,566.8 h6.98893" stroke="#9a9da0" stroke-width="0.5" fill="none"/><rect x="859.6" y="558.6" width="0.8" height="4" fill="#777" /><path d="M848,571 h12 M848,573.400 h12 M848,575.800 h12 M848,578.200 h12 M848,580.600 h12 M848,585.600 h12 M848,588 h12 M848,590.400 h12" stroke="#777" stroke-width=".7" stroke-dasharray=".8 1.700"/><rect x="846.6" y="569" width="14" height="0.3" fill="#cfd1d3" /><rect x="846.6" y="583.4" width="14" height="0.3" fill="#cfd1d3" /><path d="M847.6,582 h5" stroke="#888" stroke-width="0.5" fill="none"/><path d="M847,592.8 h3" stroke="#555" stroke-width="0.7" fill="none"/><path d="M852,592.8 h5" stroke="#888" stroke-width="0.6" fill="none"/><rect x="846.6" y="594.2" width="14" height="2" fill="#bfe0f6" /><path d="M850,595.2 h3" stroke="#3a7ab0" stroke-width="0.6" fill="none"/><rect x="846.6" y="596.2" width="14" height="11" fill="#fcfcfc" /><path d="M847.6,607.4 h4" stroke="#aaa" stroke-width="0.5" fill="none"/><path d="M856,607.4 h3" stroke="#aaa" stroke-width="0.5" fill="none"/><rect x="861" y="546.6" width="97.6" height="61.6" fill="#f4f5f5" /><rect x="864.4" y="548.5" width="90.5" height="59.7" fill="#fdfdfd" stroke="#e6e8ea" stroke-width=".3"/><rect x="897" y="564.2" width="19" height="7.4" fill="#eef6fc" stroke="#b8c8f0" stroke-width=".3" stroke-dasharray=".6 .4"/><path d="M897.600,567.600 h5.400 M909.600,567.600 h6 M915.600,565.500 h4 q1,0 1,1 V586.400 q0,1 -1,1 h-3.600 M897.600,567.600 v5.400 M897.600,583 v3.400 q0,1 1,1 h2 l2.600,-1.200 M910.600,587.400 h4" stroke="#55595d" stroke-width=".6" fill="none"/><path d="M898,567.600 h5 M909.600,567.600 h6" stroke="#a8c0d0" stroke-width="1.400" opacity=".6"/><path d="M903.600,564.800 v5.600" stroke="#222" stroke-width="1"/><path d="M909.400,564.800 v5.600 l-5.200,-2.800z" fill="#fcfcfc" stroke="#333" stroke-width=".6"/><rect x="895.3" y="573" width="4.4" height="10" fill="#fcfcfc" stroke="#55595d" stroke-width=".6" rx=".6"/><circle cx="907" cy="587.400" r="3.300" fill="#fcfcfc" stroke="#55595d" stroke-width=".6"/><path d="M904.700,585.100 l4.600,4.600 M909.300,585.100 l-4.600,4.600" stroke="#55595d" stroke-width=".5"/><path d="M914.600,584.600 q2,2.800 0,5.600 M916,585.400 q1.200,2 0,4" stroke="#55595d" stroke-width=".5" fill="none"/><rect x="959" y="547" width="1" height="55" fill="#5ab4e8" /><rect x="959" y="602" width="1" height="5" fill="#c9cbcd" /><path d="M961.6,546.6 h3" stroke="#555" stroke-width="0.7" fill="none"/><path d="M966,546.6 h6" stroke="#888" stroke-width="0.6" fill="none"/><rect x="976" y="546" width="1.6" height="1.2" fill="#555" /><path d="M962,549.400 h16 M962,552.400 h16" stroke="#9a9da0" stroke-width=".8" stroke-dasharray="1.600 2.400"/><rect x="961.6" y="555.4" width="3" height="4.4" fill="#fcfcfc" stroke="#555" stroke-width=".4"/><rect x="961.4" y="555.6" width="0.8" height="1.2" fill="#3daee9" /><path d="M966.600,556.400 h11 M966.600,558.600 h11" stroke="#b5b8bb" stroke-width=".7" stroke-dasharray="2 1.800"/><rect x="961.6" y="561.4" width="17" height="0.8" fill="#c9cbcd" /><path d="M961.6,564.6 h4" stroke="#888" stroke-width="0.5" fill="none"/><rect x="966" y="563.8" width="8" height="1.6" fill="#fcfcfc" /><rect x="976.4" y="564" width="1.4" height="1.4" fill="#e09050" /><rect x="961.6" y="567.4" width="17" height="2.4" fill="#fcfcfc" /><path d="M962.600,568.600 h7" stroke="#444" stroke-width="1.200" stroke-dasharray="1.400 .8"/><path d="M961.6,571.4 h2" stroke="#888" stroke-width="0.5" fill="none"/><path d="M966,573.4 h7" stroke="#aaa" stroke-width="0.5" fill="none"/><path d="M966,575.8 h5" stroke="#aaa" stroke-width="0.5" fill="none"/><rect x="964" y="573" width="1.2" height="2" fill="#ccc" /><rect x="962" y="583.6" width="14.6" height="1" fill="#888" /><rect x="962" y="584.6" width="14.6" height="0.4" fill="#bbb" /><path d="M963.6,586.2 h8" stroke="#aaa" stroke-width="0.5" fill="none"/><rect x="976" y="585.6" width="1" height="1" fill="#555" /><path d="M848.6,610.2 h4" stroke="#aaa" stroke-width="0.5" fill="none"/><rect x="971.6" y="609.7" width="3.4" height="1" fill="#3daee9" /><path d="M967.6,610.2 h3" stroke="#aaa" stroke-width="0.5" fill="none"/><rect x="845" y="537.7" width="0.8" height="74.3" fill="#fcfcfc" /><rect x="979.2" y="537.7" width="0.8" height="74.3" fill="#fcfcfc" /><rect x="845" y="611.4" width="135" height="0.6" fill="#fcfcfc" /></svg>

 <div class="lb" style="left:0px;top:101px">resized</div>
 <div class="lb" style="left:143px;top:101px">1024x768.png</div>
 <div class="lb" style="left:286px;top:101px">akregator.png</div>
 <div class="lb" style="left:429px;top:101px">amarok.png</div>
 <div class="lb" style="left:572px;top:101px">apper.png</div>
 <div class="lb" style="left:0px;top:223px">ark.png</div>
 <div class="lb" style="left:143px;top:223px">artikulate.png</div>
 <div class="lb" style="left:286px;top:223px">blinken.png</div>
 <div class="lb" style="left:429px;top:223px">blogilo.png</div>
 <div class="lb" style="left:572px;top:223px">bomber.png</div>
 <div class="lb" style="left:0px;top:345px">bovo.png</div>
 <div class="lb" style="left:143px;top:345px">cantor.png</div>
 <div class="lb" style="left:286px;top:345px">cervisia.png</div>
 <div class="lb" style="left:429px;top:345px">choqok.png</div>
 <div class="lb" style="left:572px;top:345px">cuttlefish.png</div>
 <div class="lb" style="left:0px;top:467px">digikam.png</div>
 <div class="lb" style="left:143px;top:467px">dolphin.png</div>
 <div class="lb" style="left:286px;top:467px">dragonplayer.png</div>
 <div class="lb" style="left:429px;top:467px">filelight.png</div>
 <div class="lb" style="left:572px;top:467px">flow.png</div>
 <div class="abs" style="left:801px;top:7px;width:3px;height:46px;background:#3d9fd6;border-radius:1.5px"></div>
</div>

<div id="status">
 <div class="btn" style="left:270.5px;width:45px"></div>
 <div class="btn" style="left:318.5px;width:79px"></div>
 <div class="t" style="left:329px;top:635.5px">Add Filter</div>
 <div class="t" style="left:570.8px;top:634.4px;width:200px;text-align:center">189 images</div>
 <div class="abs" style="left:972px;top:639px;width:80px;height:6px;border-radius:3px;background:#b4b6b8"></div>
 <div class="abs" style="left:972px;top:639px;width:20px;height:6px;border-radius:3px;background:#3daee9"></div>
 <div class="abs" style="left:983px;top:633px;width:18px;height:18px;border-radius:9px;background:#f1f2f3;border:1px solid #a3a5a7;box-shadow:0 1px 1px rgba(0,0,0,.2)"></div>
</div>

<svg id="ico" viewBox="0 0 1106 687" fill="none" stroke="#232629" stroke-width="1">
<defs>
 <linearGradient id="gpink" x1="0" y1="0" x2="0" y2="1"><stop offset="0" stop-color="#e4559c"/><stop offset="1" stop-color="#c9267a"/></linearGradient>
 <linearGradient id="geye" x1="0" y1="0" x2="0" y2="1"><stop offset="0" stop-color="#fcfcfc"/><stop offset="1" stop-color="#d5d5d8"/></linearGradient>
</defs>
<!-- title bar -->
<path d="M28.8,34 Q31.2,27.4 38,26.8 Q44.800,27.4 47.2,34 Q44.8,40.600 38,41.2 Q31.2,40.6 28.8,34Z" fill="url(#gpink)" stroke="none"/>
<circle cx="38" cy="34" r="5.2" fill="url(#geye)" stroke="none"/>
<path d="M33.4,36 L35.6,33.2 L37,35 L39.600,32 L42.6,36 Q41,39 38,39.200 Q35,39 33.400,36Z" fill="#c9c9ce" opacity=".55" stroke="none"/>
<g stroke="#fcfcfc" fill="#fcfcfc">
 <path d="M64.6,27.9 L68.1,31.4 L63.4,36.1 L59.9,32.6Z" stroke="none"/>
 <path d="M58,32 L64,38" stroke-width="1.4"/>
 <path d="M61,35 L57.2,38.8" stroke-width="1.3"/>
</g>
<g stroke="#fcfcfc" stroke-width="1.25">
 <path d="M1014.3,31.4 L1020,37.1 L1025.7,31.4"/>
 <path d="M1038.3,36.7 L1044,31 L1049.7,36.7"/>
</g>
<circle cx="1068" cy="34" r="9.1" fill="#fcfcfc" stroke="none"/>
<path d="M1063.6,29.6 L1072.4,38.4 M1072.4,29.6 L1063.6,38.4" stroke="#3e464c" stroke-width="1.25"/>

<!-- toolbar: home -->
<g transform="translate(35,90)">
 <path d="M0.3,7.9 L8,0.4 L15.7,7.9" stroke-width="1.2"/>
 <path d="M1.5,7 V15.5 H14.5 V7"/>
 <rect x="6" y="10" width="4" height="5.5" fill="#232629" stroke="none"/>
 <path d="M10,2.3 H13 V5.6Z" fill="#232629" stroke="none"/>
</g>
<!-- browse -->
<g transform="translate(80,90)">
 <rect x="0.5" y="0.5" width="6" height="6"/>
 <rect x="9" y="0" width="7" height="7" fill="#232629" stroke="none"/>
 <rect x="0" y="9" width="7" height="7" fill="#232629" stroke="none"/>
 <rect x="9.5" y="9.5" width="6" height="6"/>
</g>
<!-- view -->
<g transform="translate(169,90)">
 <rect x="0.5" y="0.5" width="15" height="15"/>
 <circle cx="4.6" cy="4.6" r="1.6"/>
 <path d="M2.5,13.2 L6.5,9.3 L8.8,11.3 L11.3,8.6 L13.8,10.2"/>
</g>
<!-- fullscreen -->
<g transform="translate(251,90)">
 <path d="M0.5,3 V0.5 H3 M13,0.5 H15.5 V3 M15.5,13 V15.5 H13 M3,15.5 H0.5 V13"/>
 <rect x="3.5" y="3.5" width="9" height="9"/>
 <rect x="3" y="3" width="10" height="2.6" fill="#232629" stroke="none"/>
</g>
<!-- back / forward -->
<path d="M378,90.4 L370.4,98 L378,105.6" stroke="#9d9fa1" stroke-width="1.2"/>
<path d="M404.4,90.4 L412,98 L404.4,105.6" stroke-width="1.3"/>
<!-- rotate left -->
<g id="rotl">
 <path d="M444.4,100 L449.1,95.3 L454.5,100.9 L450,105.5Z"/>
 <path d="M451.3,93.4 H456.2 M454.6,90.2 L451.3,93.4 L454.6,96.6" stroke-width="1.1"/>
 <g fill="#232629" stroke="none"><circle cx="457.5" cy="93.4" r=".6"/><circle cx="460.4" cy="95.5" r=".6"/><circle cx="461.5" cy="98.5" r=".6"/><circle cx="460.4" cy="101.5" r=".6"/><circle cx="457.5" cy="103.6" r=".6"/></g>
</g>
<!-- rotate right (mirror about x=508.5 -> shifts to 564) -->
<g transform="translate(1017,0) scale(-1,1)">
 <path d="M444.4,100 L449.1,95.3 L454.5,100.9 L450,105.5Z"/>
 <path d="M451.3,93.4 H456.2 M454.6,90.2 L451.3,93.4 L454.6,96.6" stroke-width="1.1"/>
 <g fill="#232629" stroke="none"><circle cx="457.5" cy="93.4" r=".6"/><circle cx="460.4" cy="95.5" r=".6"/><circle cx="461.5" cy="98.5" r=".6"/><circle cx="460.4" cy="101.5" r=".6"/><circle cx="457.5" cy="103.6" r=".6"/></g>
</g>
<!-- share -->
<g fill="#232629" stroke="none">
 <circle cx="687" cy="98" r="2.1"/><circle cx="697" cy="92" r="2.1"/><circle cx="697" cy="104.1" r="2.1"/>
 <circle cx="690.6" cy="95.8" r=".42"/><circle cx="692.6" cy="94.6" r=".5"/><circle cx="694.4" cy="93.5" r=".5"/>
 <circle cx="690.6" cy="100.2" r=".42"/><circle cx="692.6" cy="101.4" r=".5"/><circle cx="694.4" cy="102.5" r=".5"/>
</g>

<!-- side: rotate left -->
<g id="srotl">
 <path d="M41.2,161 L44.9,157.3 L48.6,161 L44.9,164.7Z" fill="#232629" stroke="none"/>
 <path d="M44.6,155.3 H49.6 M47.1,153.2 L44.6,155.3 L47.1,157.6" stroke-width=".9"/>
 <g fill="#232629" stroke="none"><circle cx="50.6" cy="155.8" r=".55"/><circle cx="52.2" cy="158" r=".55"/><circle cx="52.4" cy="160.4" r=".55"/><circle cx="51.2" cy="162.6" r=".55"/><circle cx="49" cy="163.9" r=".55"/></g>
</g>
<g transform="translate(94,30) scale(-1,1)">
 <path d="M41.2,161 L44.9,157.3 L48.6,161 L44.9,164.7Z" fill="#232629" stroke="none"/>
 <path d="M44.6,155.3 H49.6 M47.1,153.2 L44.6,155.3 L47.1,157.6" stroke-width=".9"/>
 <g fill="#232629" stroke="none"><circle cx="50.6" cy="155.8" r=".55"/><circle cx="52.2" cy="158" r=".55"/><circle cx="52.4" cy="160.4" r=".55"/><circle cx="51.2" cy="162.6" r=".55"/><circle cx="49" cy="163.9" r=".55"/></g>
</g>
<!-- mirror -->
<g>
 <rect x="41.5" y="215.5" width="4" height="7"/>
 <rect x="48.5" y="215.5" width="4" height="7"/>
 <path d="M45.5,217.5 H48.5 M45.5,220.5 H48.5 M50.5,217.5 V220.7"/>
 <g fill="#232629" stroke="none"><circle cx="43.5" cy="213.5" r=".6"/><circle cx="50.5" cy="213.5" r=".6"/><circle cx="43.5" cy="224.5" r=".6"/><circle cx="50.5" cy="224.5" r=".6"/></g>
</g>
<!-- flip -->
<g>
 <rect x="43.5" y="243.5" width="7" height="4"/>
 <rect x="43.5" y="250.5" width="7" height="4"/>
 <path d="M45.5,247.5 V250.5 M48.5,247.5 V250.5 M45.3,252.5 H48.8"/>
 <g fill="#232629" stroke="none"><circle cx="41.5" cy="245.5" r=".6"/><circle cx="52.5" cy="245.5" r=".6"/><circle cx="41.5" cy="252.5" r=".6"/><circle cx="52.5" cy="252.5" r=".6"/></g>
</g>
<!-- resize -->
<g>
 <rect x="41.5" y="273.5" width="2" height="2"/>
 <rect x="50.5" y="273.5" width="2" height="2"/>
 <rect x="41.5" y="282.5" width="2" height="2"/>
 <rect x="47.5" y="279.5" width="3" height="3"/>
 <path d="M52.5,281 V284.5 H49"/>
 <g fill="#232629" stroke="none"><circle cx="45.5" cy="275.5" r=".6"/><circle cx="48.5" cy="275.5" r=".6"/><circle cx="43.5" cy="277.5" r=".6"/><circle cx="50.5" cy="277.5" r=".6"/><circle cx="43.5" cy="280.5" r=".6"/><circle cx="45.5" cy="282.5" r=".6"/></g>
</g>
<!-- rename pencil -->
<g>
 <path d="M41.5,344.3 L49.5,336.3 L52.8,339.6 L44.8,347.6 H41.5Z"/>
 <path d="M47.3,338.5 L49.5,336.3 L52.8,339.6 L50.6,341.8Z" fill="#232629"/>
 <path d="M41.7,344.4 L44.7,347.4" stroke-width=".8"/>
</g>
<!-- wastebin -->
<g>
 <path d="M41,367.5 H53 M44.8,367.5 L45.6,366.2 H48.4 L49.2,367.5"/>
 <path d="M42.5,367.5 V377.5 H51.5 V367.5"/>
 <path d="M45.5,370.2 V374.8 M48.5,370.2 V374.8"/>
</g>
<!-- delete -->
<g stroke="#da4453">
 <path d="M44.5,398 V396.5 H49.5 V398"/>
 <path d="M41,399.5 H53"/>
 <path d="M43.5,399.5 V407.5 H50.5 V399.5"/>
</g>
<!-- copy -->
<g>
 <path d="M45.5,436.5 H42.5 V426.5 H51.5 V428.5"/>
 <path d="M45.5,428.5 H52.5 V434.5 L49.5,437.5 H45.5Z"/>
 <path d="M49.5,437.5 V434.5 H52.5Z" fill="#232629"/>
</g>
<!-- move -->
<path d="M42.4,456.4 L48,462 L42.4,467.6" stroke-width="1.2"/>
<rect x="50" y="461" width="2" height="2" fill="#232629" stroke="none"/>
<!-- link -->
<g>
 <rect x="39.5" y="488.5" width="6" height="7" rx="1"/>
 <rect x="48.5" y="488.5" width="6" height="7" rx="1"/>
 <rect x="44.5" y="490.5" width="5" height="3" fill="#eff0f1"/>
</g>
<!-- folder -->
<g id="fold">
 <path d="M41.5,557.5 V546.5 H46 L48,548.5 H52.5 V557.5Z"/>
 <path d="M41.5,550.5 H45 L47.2,548.3 H52.5 V550.8 H41.5Z" fill="#232629"/>
</g>
<!-- properties -->
<g>
 <rect x="41.5" y="576.5" width="11" height="11"/>
 <rect x="41" y="576" width="12" height="3.2" fill="#232629" stroke="none"/>
 <rect x="43.2" y="580.6" width="1.8" height="5.2" fill="#232629" stroke="none"/>
 <path d="M46.2,581.5 H51 M46.2,584.5 H51"/>
</g>
<!-- create folder -->
<g>
 <path d="M47.8,617.5 H41.5 V606.5 H46 L48,608.5 H52.5 V612.6"/>
 <path d="M41.5,610.5 H45 L47.2,608.3 H52.5 V610.8 H41.5Z" fill="#232629"/>
 <path d="M48,615.5 H53 M50.5,613 V618"/>
</g>

<!-- breadcrumb -->
<g transform="translate(277,126)">
 <path d="M0.4,7.7 L8,0.5 L15.6,7.7" stroke-width="1.1"/>
 <path d="M1.5,7 V15.5 H14.5 V7"/>
 <rect x="6" y="10" width="4" height="5.5" fill="#232629" stroke="none"/>
 <rect x="11" y="2" width="2" height="3" fill="#232629" stroke="none"/>
</g>
<g stroke="#3a3e42" stroke-width="1.15">
 <path d="M307,130.3 L311.3,134.5 L307,138.7"/>
 <path d="M367,130.3 L371.3,134.5 L367,138.7"/>
 <path d="M410,130.3 L414.3,134.5 L410,138.7"/>
 <path d="M466.5,130.3 L470.8,134.5 L466.5,138.7"/>
 <path d="M522,130.3 L526.3,134.5 L522,138.7"/>
 <path d="M591,130.3 L595.3,134.5 L591,138.7"/>
</g>

<!-- status bar -->
<rect x="284" y="637" width="4" height="13" fill="#232629" stroke="none"/>
<path d="M293.7,640.5 H306 M297.3,637.3 L293.7,640.5 L297.3,643.7" stroke-width="1.2"/>
<g>
 <path d="M950.5,642.7 V636.5 H961.5 V647.5 H955.2"/>
 <rect x="950.5" y="644.5" width="3" height="3"/>
 <path d="M959.6,638.4 L955.5,642.5 M955.5,639.3 V642.5 H958.8"/>
</g>
<g>
 <path d="M1062.5,638.3 V636.5 H1064.3 M1067,636.5 H1069.2 M1071.7,636.5 H1073.5 V638.3 M1073.5,641 V643.2 M1073.5,645.7 V647.5 H1071.7 M1069.2,647.5 H1067 M1062.5,641 V643.2"/>
 <rect x="1062.5" y="644.5" width="3" height="3"/>
 <path d="M1067.4,642.6 L1071.5,638.5 M1068.2,638.5 H1071.5 V641.8"/>
</g>

</svg>
</div>
</body>
</html>
